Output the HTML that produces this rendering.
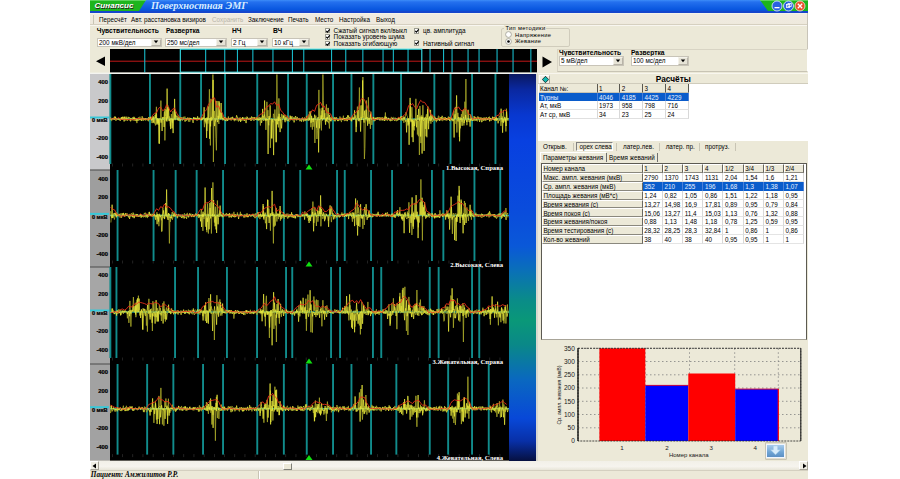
<!DOCTYPE html><html><head><meta charset="utf-8"><style>
html,body{margin:0;padding:0;width:900px;height:479px;overflow:hidden;background:#fff;position:relative}
body{font-family:"Liberation Sans",sans-serif}
div{box-sizing:border-box}
.t{position:absolute;white-space:nowrap;line-height:1;color:#000}
</style></head><body>
<div style="position:absolute;left:90px;top:0px;width:718px;height:479px;background:#ECE9D8"></div>
<div style="position:absolute;left:90px;top:0px;width:718px;height:11px;background:linear-gradient(#3D8DF8 0,#2470EE 2px,#0A58E0 9px,#0A50D8 11px)"></div>
<svg style="position:absolute;left:0;top:0" width="900" height="13"><polygon points="90,0 146,0 139,11 90,11" fill="#1DB51D"/><polygon points="760,0 808,0 808,11 768,11" fill="#1DB51D"/><rect x="90" y="0" width="56" height="1" fill="#5CD35C"/><rect x="760" y="0" width="48" height="1" fill="#5CD35C"/><rect x="90" y="11" width="718" height="2" fill="#1646CC"/><circle cx="777" cy="6" r="5" fill="#2A62E0" stroke="#E8F0FF" stroke-width="0.8"/><circle cx="788.5" cy="6" r="5" fill="#2A62E0" stroke="#E8F0FF" stroke-width="0.8"/><circle cx="800" cy="6" r="5" fill="#E8502A" stroke="#F0E8E0" stroke-width="0.8"/><rect x="774.5" y="7" width="5" height="1.3" fill="#fff"/><rect x="786.5" y="4.5" width="3.2" height="3" fill="none" stroke="#fff" stroke-width="0.8"/><rect x="788" y="3.5" width="3.2" height="3" fill="none" stroke="#fff" stroke-width="0.8"/><path d="M797.8,3.8 L802.2,8.2 M802.2,3.8 L797.8,8.2" stroke="#fff" stroke-width="1.3"/></svg>
<div class="t" style="left:94.5px;top:1.54px;font-size:8.1px;color:#fff;font-weight:bold;font-style:italic;text-shadow:0.6px 0.6px 0 #222">Синапсис</div>
<div class="t" style="left:151px;top:0.73px;font-size:10.3px;color:#D8ECFF;font-style:italic;font-weight:bold;font-family:'Liberation Serif', serif">Поверхностная ЭМГ</div>
<div style="position:absolute;left:90px;top:13px;width:718px;height:12px;background:linear-gradient(#F8F6F0 0,#F0EBE0 1.5px,#EEE9DD 100%);border-bottom:1px solid #D6D0C0"></div>
<div style="position:absolute;left:90px;top:25px;width:718px;height:1px;background:#F8F6F0"></div>
<div style="position:absolute;left:807px;top:13px;width:1px;height:36px;background:#C8C4B8"></div>
<div style="position:absolute;left:93px;top:15px;width:1px;height:9px;background:#C8C4B4"></div>
<div class="t" style="left:99px;top:17.04px;font-size:6.3px;color:#000">Пересчёт</div>
<div class="t" style="left:131px;top:17.04px;font-size:6.3px;color:#000">Авт. расстановка визиров</div>
<div class="t" style="left:212px;top:17.04px;font-size:6.3px;color:#B8B4A8">Сохранить</div>
<div class="t" style="left:248px;top:17.04px;font-size:6.3px;color:#000">Заключение</div>
<div class="t" style="left:288px;top:17.04px;font-size:6.3px;color:#000">Печать</div>
<div class="t" style="left:315px;top:17.04px;font-size:6.3px;color:#000">Место</div>
<div class="t" style="left:339px;top:17.04px;font-size:6.3px;color:#000">Настройка</div>
<div class="t" style="left:376px;top:17.04px;font-size:6.3px;color:#000">Выход</div>
<div class="t" style="left:96.7px;top:28.02px;font-size:6.7px;font-weight:bold">Чувствительность</div>
<div class="t" style="left:166px;top:28.02px;font-size:6.7px;font-weight:bold">Развертка</div>
<div class="t" style="left:232px;top:28.02px;font-size:6.7px;font-weight:bold">НЧ</div>
<div class="t" style="left:273px;top:28.02px;font-size:6.7px;font-weight:bold">ВЧ</div>
<div style="position:absolute;left:97px;top:37.5px;width:65px;height:9.5px;background:#fff;border:1px solid #C8C4B8"></div>
<div class="t" style="left:99px;top:39.73px;font-size:6.4px;">200 мкВ/дел</div>
<div style="position:absolute;left:151px;top:38.5px;width:10px;height:7.5px;background:#E6E3D6;border:1px solid #F4F2EA;border-right-color:#B8B4A8;border-bottom-color:#B8B4A8"></div>
<svg style="position:absolute;left:153.0px;top:40.25px" width="6" height="4"><polygon points="0.8,0.5 5.2,0.5 3,3.2" fill="#000"/></svg>
<div style="position:absolute;left:165px;top:37.5px;width:62px;height:9.5px;background:#fff;border:1px solid #C8C4B8"></div>
<div class="t" style="left:167px;top:39.73px;font-size:6.4px;">250 мс/дел</div>
<div style="position:absolute;left:216px;top:38.5px;width:10px;height:7.5px;background:#E6E3D6;border:1px solid #F4F2EA;border-right-color:#B8B4A8;border-bottom-color:#B8B4A8"></div>
<svg style="position:absolute;left:218.0px;top:40.25px" width="6" height="4"><polygon points="0.8,0.5 5.2,0.5 3,3.2" fill="#000"/></svg>
<div style="position:absolute;left:231px;top:37.5px;width:37px;height:9.5px;background:#fff;border:1px solid #C8C4B8"></div>
<div class="t" style="left:233px;top:39.73px;font-size:6.4px;">2 Гц</div>
<div style="position:absolute;left:257px;top:38.5px;width:10px;height:7.5px;background:#E6E3D6;border:1px solid #F4F2EA;border-right-color:#B8B4A8;border-bottom-color:#B8B4A8"></div>
<svg style="position:absolute;left:259.0px;top:40.25px" width="6" height="4"><polygon points="0.8,0.5 5.2,0.5 3,3.2" fill="#000"/></svg>
<div style="position:absolute;left:272px;top:37.5px;width:38px;height:9.5px;background:#fff;border:1px solid #C8C4B8"></div>
<div class="t" style="left:274px;top:39.73px;font-size:6.4px;">10 кГц</div>
<div style="position:absolute;left:299px;top:38.5px;width:10px;height:7.5px;background:#E6E3D6;border:1px solid #F4F2EA;border-right-color:#B8B4A8;border-bottom-color:#B8B4A8"></div>
<svg style="position:absolute;left:301.0px;top:40.25px" width="6" height="4"><polygon points="0.8,0.5 5.2,0.5 3,3.2" fill="#000"/></svg>
<div style="position:absolute;left:324.5px;top:27.7px;width:5.6px;height:5.6px;background:#fff;border:1px solid #9C9C90"></div>
<svg style="position:absolute;left:324.5px;top:27.7px" width="6" height="6"><path d="M1.2,2.8 L2.4,4.2 L4.8,1.3" stroke="#000" stroke-width="1.1" fill="none"/></svg>
<div class="t" style="left:333.6px;top:27.98px;font-size:6.4px;">Сжатый сигнал вкл/выкл</div>
<div style="position:absolute;left:324.5px;top:34.2px;width:5.6px;height:5.6px;background:#fff;border:1px solid #9C9C90"></div>
<svg style="position:absolute;left:324.5px;top:34.2px" width="6" height="6"><path d="M1.2,2.8 L2.4,4.2 L4.8,1.3" stroke="#000" stroke-width="1.1" fill="none"/></svg>
<div class="t" style="left:333.6px;top:34.48px;font-size:6.4px;">Показать уровень шума</div>
<div style="position:absolute;left:324.5px;top:40.6px;width:5.6px;height:5.6px;background:#fff;border:1px solid #9C9C90"></div>
<svg style="position:absolute;left:324.5px;top:40.6px" width="6" height="6"><path d="M1.2,2.8 L2.4,4.2 L4.8,1.3" stroke="#000" stroke-width="1.1" fill="none"/></svg>
<div class="t" style="left:333.6px;top:40.88px;font-size:6.4px;">Показать огибающую</div>
<div style="position:absolute;left:413.5px;top:28.2px;width:5.6px;height:5.6px;background:#fff;border:1px solid #9C9C90"></div>
<svg style="position:absolute;left:413.5px;top:28.2px" width="6" height="6"><path d="M1.2,2.8 L2.4,4.2 L4.8,1.3" stroke="#000" stroke-width="1.1" fill="none"/></svg>
<div class="t" style="left:423px;top:28.48px;font-size:6.4px;">цв. амплитуда</div>
<div style="position:absolute;left:413.5px;top:40.400000000000006px;width:5.6px;height:5.6px;background:#fff;border:1px solid #9C9C90"></div>
<svg style="position:absolute;left:413.5px;top:40.400000000000006px" width="6" height="6"><path d="M1.2,2.8 L2.4,4.2 L4.8,1.3" stroke="#000" stroke-width="1.1" fill="none"/></svg>
<div class="t" style="left:423px;top:40.68px;font-size:6.4px;">Нативный сигнал</div>
<div style="position:absolute;left:500.5px;top:27.5px;width:69px;height:19px;border:1px solid #D0CCBC;border-radius:2px"></div>
<div style="position:absolute;left:504px;top:25px;width:42px;height:5px;background:#ECE9D8"></div>
<div class="t" style="left:505.5px;top:26.11px;font-size:5.8px;letter-spacing:0.3px">Тип методики</div>
<svg style="position:absolute;left:505px;top:31.299999999999997px" width="7" height="7"><circle cx="3.5" cy="3.5" r="2.9" fill="#fff" stroke="#9C9C90" stroke-width="0.8"/></svg>
<div class="t" style="left:515px;top:32.61px;font-size:5.8px;letter-spacing:0.25px">Напряжение</div>
<svg style="position:absolute;left:505px;top:38.0px" width="7" height="7"><circle cx="3.5" cy="3.5" r="2.9" fill="#fff" stroke="#9C9C90" stroke-width="0.8"/><circle cx="3.5" cy="3.5" r="1.3" fill="#000"/></svg>
<div class="t" style="left:515px;top:39.31px;font-size:5.8px;letter-spacing:0.25px">Жевание</div>
<div style="position:absolute;left:90px;top:48px;width:20px;height:25px;background:#ECE9D8"></div>
<svg style="position:absolute;left:96px;top:56px" width="10" height="11"><polygon points="0,5.3 9,0.5 9,10.1" fill="#000"/></svg>
<svg style="position:absolute;left:0;top:0" width="900" height="479"><rect x="110" y="49" width="427" height="23.6" fill="#000"/><rect x="110" y="60.7" width="427" height="1" fill="#C01818"/><rect x="144.2" y="49" width="1.1" height="23.6" fill="#18B8C8"/><rect x="205.1" y="49" width="1.1" height="23.6" fill="#18B8C8"/><rect x="224.2" y="49" width="1.1" height="23.6" fill="#18B8C8"/><rect x="236.9" y="49" width="1.1" height="23.6" fill="#18B8C8"/><rect x="252.3" y="49" width="1.1" height="23.6" fill="#18B8C8"/><rect x="272.4" y="49" width="1.1" height="23.6" fill="#18B8C8"/><rect x="291.9" y="49" width="1.1" height="23.6" fill="#18B8C8"/><rect x="303.2" y="49" width="1.1" height="23.6" fill="#18B8C8"/><rect x="331.0" y="49" width="1.1" height="23.6" fill="#18B8C8"/><rect x="345.2" y="49" width="1.1" height="23.6" fill="#18B8C8"/><rect x="362.3" y="49" width="1.1" height="23.6" fill="#18B8C8"/><rect x="382.5" y="49" width="1.1" height="23.6" fill="#18B8C8"/><rect x="392.8" y="49" width="1.1" height="23.6" fill="#18B8C8"/><rect x="407.5" y="49" width="1.1" height="23.6" fill="#18B8C8"/><rect x="429.5" y="49" width="1.1" height="23.6" fill="#18B8C8"/><rect x="443.0" y="49" width="1.1" height="23.6" fill="#18B8C8"/><rect x="451.5" y="49" width="1.1" height="23.6" fill="#18B8C8"/><rect x="467.5" y="49" width="1.1" height="23.6" fill="#18B8C8"/><rect x="478.5" y="49" width="1.1" height="23.6" fill="#18B8C8"/><rect x="496.5" y="49" width="1.1" height="23.6" fill="#18B8C8"/><rect x="512.5" y="49" width="1.1" height="23.6" fill="#18B8C8"/><rect x="530.3" y="49" width="1.1" height="23.6" fill="#18B8C8"/><rect x="180.3" y="49.2" width="241.5" height="23" fill="none" stroke="#38E8F0" stroke-width="1.1"/><rect x="90" y="72.6" width="447" height="1.4" fill="#F4F4F0"/></svg>
<svg style="position:absolute;left:542px;top:55.5px" width="11" height="12"><polygon points="0.5,0.5 10,6 0.5,11.5" fill="#000"/></svg>
<div style="position:absolute;left:556.7px;top:49px;width:251.3px;height:23px;border:1px solid #D8D4C4;border-right-color:#fff;border-bottom-color:#C8C4B4"></div>
<div class="t" style="left:559px;top:50.21px;font-size:6.7px;font-weight:bold">Чувствительность</div>
<div class="t" style="left:631px;top:50.21px;font-size:6.7px;font-weight:bold">Развертка</div>
<div style="position:absolute;left:559px;top:56px;width:65px;height:10px;background:#fff;border:1px solid #C8C4B8"></div>
<div class="t" style="left:561px;top:58.48px;font-size:6.4px;">5 мВ/дел</div>
<div style="position:absolute;left:613px;top:57px;width:10px;height:8px;background:#E6E3D6;border:1px solid #F4F2EA;border-right-color:#B8B4A8;border-bottom-color:#B8B4A8"></div>
<svg style="position:absolute;left:615.0px;top:59.0px" width="6" height="4"><polygon points="0.8,0.5 5.2,0.5 3,3.2" fill="#000"/></svg>
<div style="position:absolute;left:631px;top:56px;width:57.700000000000045px;height:10px;background:#fff;border:1px solid #C8C4B8"></div>
<div class="t" style="left:633px;top:58.48px;font-size:6.4px;">100 мс/дел</div>
<div style="position:absolute;left:677.7px;top:57px;width:10px;height:8px;background:#E6E3D6;border:1px solid #F4F2EA;border-right-color:#B8B4A8;border-bottom-color:#B8B4A8"></div>
<svg style="position:absolute;left:679.7px;top:59.0px" width="6" height="4"><polygon points="0.8,0.5 5.2,0.5 3,3.2" fill="#000"/></svg>
<svg style="position:absolute;left:0;top:0" width="900" height="479"><rect x="90" y="74" width="20" height="96" fill="#C9C9CB"/><rect x="110" y="74" width="399" height="96" fill="#000"/><rect x="112.0" y="163.5" width="0.7" height="3" fill="#303030"/><rect x="122.2" y="163.5" width="0.7" height="3" fill="#303030"/><rect x="132.4" y="163.5" width="0.7" height="3" fill="#303030"/><rect x="142.6" y="163.5" width="0.7" height="3" fill="#303030"/><rect x="152.8" y="163.5" width="0.7" height="3" fill="#303030"/><rect x="163.0" y="163.5" width="0.7" height="3" fill="#303030"/><rect x="173.2" y="163.5" width="0.7" height="3" fill="#303030"/><rect x="183.4" y="163.5" width="0.7" height="3" fill="#303030"/><rect x="193.6" y="163.5" width="0.7" height="3" fill="#303030"/><rect x="203.8" y="163.5" width="0.7" height="3" fill="#303030"/><rect x="214.0" y="163.5" width="0.7" height="3" fill="#303030"/><rect x="224.2" y="163.5" width="0.7" height="3" fill="#303030"/><rect x="234.4" y="163.5" width="0.7" height="3" fill="#303030"/><rect x="244.6" y="163.5" width="0.7" height="3" fill="#303030"/><rect x="254.8" y="163.5" width="0.7" height="3" fill="#303030"/><rect x="265.0" y="163.5" width="0.7" height="3" fill="#303030"/><rect x="275.2" y="163.5" width="0.7" height="3" fill="#303030"/><rect x="285.4" y="163.5" width="0.7" height="3" fill="#303030"/><rect x="295.6" y="163.5" width="0.7" height="3" fill="#303030"/><rect x="305.8" y="163.5" width="0.7" height="3" fill="#303030"/><rect x="316.0" y="163.5" width="0.7" height="3" fill="#303030"/><rect x="326.2" y="163.5" width="0.7" height="3" fill="#303030"/><rect x="336.4" y="163.5" width="0.7" height="3" fill="#303030"/><rect x="346.6" y="163.5" width="0.7" height="3" fill="#303030"/><rect x="356.8" y="163.5" width="0.7" height="3" fill="#303030"/><rect x="367.0" y="163.5" width="0.7" height="3" fill="#303030"/><rect x="377.2" y="163.5" width="0.7" height="3" fill="#303030"/><rect x="387.4" y="163.5" width="0.7" height="3" fill="#303030"/><rect x="397.6" y="163.5" width="0.7" height="3" fill="#303030"/><rect x="407.8" y="163.5" width="0.7" height="3" fill="#303030"/><rect x="418.0" y="163.5" width="0.7" height="3" fill="#303030"/><rect x="428.2" y="163.5" width="0.7" height="3" fill="#303030"/><rect x="438.4" y="163.5" width="0.7" height="3" fill="#303030"/><rect x="448.6" y="163.5" width="0.7" height="3" fill="#303030"/><rect x="458.8" y="163.5" width="0.7" height="3" fill="#303030"/><rect x="469.0" y="163.5" width="0.7" height="3" fill="#303030"/><rect x="479.2" y="163.5" width="0.7" height="3" fill="#303030"/><rect x="489.4" y="163.5" width="0.7" height="3" fill="#303030"/><rect x="499.6" y="163.5" width="0.7" height="3" fill="#303030"/><rect x="509.8" y="163.5" width="0.7" height="3" fill="#303030"/><rect x="109.4" y="74" width="1.9" height="90" fill="#118C8C"/><rect x="149.0" y="74" width="1.9" height="90" fill="#118C8C"/><rect x="179.3" y="74" width="1.9" height="90" fill="#118C8C"/><rect x="200.1" y="74" width="1.9" height="90" fill="#118C8C"/><rect x="224.1" y="74" width="1.9" height="90" fill="#118C8C"/><rect x="256.3" y="74" width="1.9" height="90" fill="#118C8C"/><rect x="287.1" y="74" width="1.9" height="90" fill="#118C8C"/><rect x="305.8" y="74" width="1.9" height="90" fill="#118C8C"/><rect x="332.1" y="74" width="1.9" height="90" fill="#118C8C"/><rect x="350.5" y="74" width="1.9" height="90" fill="#118C8C"/><rect x="372.4" y="74" width="1.9" height="90" fill="#118C8C"/><rect x="400.1" y="74" width="1.9" height="90" fill="#118C8C"/><rect x="433.4" y="74" width="1.9" height="90" fill="#118C8C"/><rect x="449.6" y="74" width="1.9" height="90" fill="#118C8C"/><rect x="471.1" y="74" width="1.9" height="90" fill="#118C8C"/><rect x="494.5" y="74" width="1.9" height="90" fill="#118C8C"/><rect x="90" y="116.5" width="19" height="2" fill="#38C8D8"/><rect x="110" y="118.3" width="399" height="1.4" fill="#18A0A8"/><polyline points="110.9,119.0 111.4,120.8 111.9,120.6 112.4,118.3 112.9,118.6 113.4,118.3 113.9,119.7 114.4,118.9 114.9,120.0 115.4,116.6 115.9,121.0 116.4,118.9 116.9,119.9 117.4,118.8 117.9,118.5 118.4,119.6 118.9,120.1 119.4,118.7 119.9,118.8 120.4,119.9 120.9,117.9 121.4,117.0 121.9,119.5 122.4,118.1 122.9,116.5 123.4,117.9 123.9,118.4 124.4,117.4 124.9,117.1 125.4,119.0 125.9,120.2 126.4,118.7 126.9,118.0 127.4,119.5 127.9,119.9 128.4,118.6 128.9,119.7 129.4,120.4 129.9,118.7 130.4,117.9 130.9,119.5 131.4,119.3 131.9,120.4 132.4,117.3 132.9,118.1 133.4,117.9 133.9,116.7 134.4,119.2 134.9,119.7 135.4,118.0 135.9,120.8 136.4,120.1 136.9,123.1 137.4,119.5 137.9,120.2 138.4,117.3 138.9,119.8 139.4,119.8 139.9,116.7 140.4,119.5 140.9,118.7 141.4,120.0 141.9,118.4 142.4,119.0 142.9,119.4 143.4,117.9 143.9,119.8 144.4,118.9 144.9,119.6 145.4,118.3 145.9,120.4 146.4,119.8 146.9,118.8 147.4,119.8 147.9,120.6 148.4,121.3 148.9,117.0 149.4,120.1 149.9,119.6 150.4,118.9 150.9,117.7 151.4,120.6 151.9,117.4 152.4,119.7 152.9,117.8 153.4,116.9 153.9,118.6 154.4,123.4 154.9,119.3 155.4,125.4 155.9,121.6 156.4,106.8 156.9,124.8 157.4,119.9 157.9,121.1 158.4,125.0 158.9,118.0 159.4,143.8 159.9,119.0 160.4,118.7 160.9,100.6 161.4,119.5 161.9,119.4 162.4,118.9 162.9,117.0 163.4,117.3 163.9,118.4 164.4,111.6 164.9,140.4 165.4,117.1 165.9,120.7 166.4,109.7 166.9,121.7 167.4,119.1 167.9,105.4 168.4,120.8 168.9,120.7 169.4,116.5 169.9,117.9 170.4,126.3 170.9,119.8 171.4,114.0 171.9,118.6 172.4,122.7 172.9,111.3 173.4,120.4 173.9,119.0 174.4,108.9 174.9,118.5 175.4,111.6 175.9,116.2 176.4,117.1 176.9,116.4 177.4,118.2 177.9,115.5 178.4,119.7 178.9,120.7 179.4,120.1 179.9,120.3 180.4,118.9 180.9,118.1 181.4,118.0 181.9,118.4 182.4,117.5 182.9,118.3 183.4,116.8 183.9,119.3 184.4,118.6 184.9,116.5 185.4,118.9 185.9,119.3 186.4,120.4 186.9,119.8 187.4,118.2 187.9,118.1 188.4,121.6 188.9,120.0 189.4,121.4 189.9,121.8 190.4,117.9 190.9,119.5 191.4,119.6 191.9,119.7 192.4,119.7 192.9,119.3 193.4,119.2 193.9,117.0 194.4,118.8 194.9,118.0 195.4,119.2 195.9,118.4 196.4,119.8 196.9,120.1 197.4,119.4 197.9,119.4 198.4,119.1 198.9,118.4 199.4,118.8 199.9,118.4 200.4,119.5 200.9,119.0 201.4,119.8 201.9,117.3 202.4,120.2 202.9,118.0 203.4,118.0 203.9,118.7 204.4,127.2 204.9,119.4 205.4,118.3 205.9,123.4 206.4,117.9 206.9,131.0 207.4,119.1 207.9,123.6 208.4,119.0 208.9,117.0 209.4,89.3 209.9,117.0 210.4,145.4 210.9,98.8 211.4,117.1 211.9,119.4 212.4,120.3 212.9,74.5 213.4,162.0 213.9,120.2 214.4,110.9 214.9,119.4 215.4,118.8 215.9,138.6 216.4,150.3 216.9,120.0 217.4,118.3 217.9,101.0 218.4,119.5 218.9,123.9 219.4,102.6 219.9,118.3 220.4,112.6 220.9,118.4 221.4,118.8 221.9,112.5 222.4,116.0 222.9,120.5 223.4,117.7 223.9,118.1 224.4,118.4 224.9,117.0 225.4,117.8 225.9,120.1 226.4,121.2 226.9,119.0 227.4,120.4 227.9,118.7 228.4,116.5 228.9,119.2 229.4,119.6 229.9,118.4 230.4,119.4 230.9,119.7 231.4,117.9 231.9,117.1 232.4,118.7 232.9,118.7 233.4,118.5 233.9,120.3 234.4,121.2 234.9,118.5 235.4,119.9 235.9,120.2 236.4,119.9 236.9,120.4 237.4,118.5 237.9,120.0 238.4,121.6 238.9,120.0 239.4,118.2 239.9,119.8 240.4,120.6 240.9,119.5 241.4,118.3 241.9,121.0 242.4,117.4 242.9,119.7 243.4,119.0 243.9,117.4 244.4,120.6 244.9,119.5 245.4,117.5 245.9,119.8 246.4,118.4 246.9,116.5 247.4,118.1 247.9,119.3 248.4,119.8 248.9,119.2 249.4,119.1 249.9,119.6 250.4,118.7 250.9,120.5 251.4,119.2 251.9,119.4 252.4,119.7 252.9,117.6 253.4,118.1 253.9,121.0 254.4,119.4 254.9,118.6 255.4,119.4 255.9,118.4 256.4,119.4 256.9,118.1 257.4,119.4 257.9,116.9 258.4,120.7 258.9,118.3 259.4,116.9 259.9,118.7 260.4,125.5 260.9,119.2 261.4,117.5 261.9,119.5 262.4,115.5 262.9,117.3 263.4,116.2 263.9,118.6 264.4,114.6 264.9,116.6 265.4,117.6 265.9,129.9 266.4,119.0 266.9,101.8 267.4,118.1 267.9,110.2 268.4,122.8 268.9,125.3 269.4,117.8 269.9,119.0 270.4,147.9 270.9,131.7 271.4,119.2 271.9,138.6 272.4,119.3 272.9,122.4 273.4,113.8 273.9,115.4 274.4,118.8 274.9,109.5 275.4,119.8 275.9,118.8 276.4,141.7 276.9,74.5 277.4,120.2 277.9,119.2 278.4,127.4 278.9,98.4 279.4,120.7 279.9,119.7 280.4,117.0 280.9,120.7 281.4,113.9 281.9,118.9 282.4,118.0 282.9,114.5 283.4,118.2 283.9,115.3 284.4,120.3 284.9,114.7 285.4,118.7 285.9,120.4 286.4,120.1 286.9,119.5 287.4,115.8 287.9,118.7 288.4,119.7 288.9,121.1 289.4,121.4 289.9,120.9 290.4,117.5 290.9,116.1 291.4,119.7 291.9,119.0 292.4,120.3 292.9,118.8 293.4,119.3 293.9,117.1 294.4,119.6 294.9,118.4 295.4,119.5 295.9,119.6 296.4,118.8 296.9,119.4 297.4,119.0 297.9,120.0 298.4,119.7 298.9,118.3 299.4,118.2 299.9,121.3 300.4,118.9 300.9,120.3 301.4,119.5 301.9,118.3 302.4,118.0 302.9,119.2 303.4,119.3 303.9,119.8 304.4,117.4 304.9,118.2 305.4,118.9 305.9,121.1 306.4,115.9 306.9,119.6 307.4,118.3 307.9,119.6 308.4,114.7 308.9,119.5 309.4,111.6 309.9,119.5 310.4,119.6 310.9,127.2 311.4,118.0 311.9,119.7 312.4,129.6 312.9,117.9 313.4,118.9 313.9,126.7 314.4,120.0 314.9,143.0 315.4,118.3 315.9,115.6 316.4,120.3 316.9,139.0 317.4,130.3 317.9,118.9 318.4,118.5 318.9,89.9 319.4,120.2 319.9,108.5 320.4,117.1 320.9,118.9 321.4,130.4 321.9,110.7 322.4,117.4 322.9,74.5 323.4,100.3 323.9,118.9 324.4,116.8 324.9,113.2 325.4,121.8 325.9,117.1 326.4,104.4 326.9,118.1 327.4,122.0 327.9,118.8 328.4,123.2 328.9,120.7 329.4,128.5 329.9,118.0 330.4,120.2 330.9,117.0 331.4,118.5 331.9,119.5 332.4,116.8 332.9,118.4 333.4,119.2 333.9,120.4 334.4,120.8 334.9,118.4 335.4,118.0 335.9,119.6 336.4,118.5 336.9,118.6 337.4,120.4 337.9,121.2 338.4,119.3 338.9,118.8 339.4,119.7 339.9,116.5 340.4,119.0 340.9,117.6 341.4,122.1 341.9,119.9 342.4,119.2 342.9,118.7 343.4,115.7 343.9,119.9 344.4,121.1 344.9,118.1 345.4,119.9 345.9,119.9 346.4,117.0 346.9,120.2 347.4,120.8 347.9,119.3 348.4,118.9 348.9,120.0 349.4,117.0 349.9,119.1 350.4,120.4 350.9,117.4 351.4,120.3 351.9,118.5 352.4,116.3 352.9,118.9 353.4,117.7 353.9,119.4 354.4,117.5 354.9,116.6 355.4,118.0 355.9,115.3 356.4,126.8 356.9,118.6 357.4,106.6 357.9,119.3 358.4,120.8 358.9,117.4 359.4,87.5 359.9,120.0 360.4,118.6 360.9,105.5 361.4,117.7 361.9,105.3 362.4,117.9 362.9,77.0 363.4,115.5 363.9,118.0 364.4,159.0 364.9,148.4 365.4,119.2 365.9,120.3 366.4,100.5 366.9,118.9 367.4,121.5 367.9,119.0 368.4,97.3 368.9,117.4 369.4,120.9 369.9,118.0 370.4,128.8 370.9,111.6 371.4,119.8 371.9,124.9 372.4,120.4 372.9,120.1 373.4,117.0 373.9,118.0 374.4,118.4 374.9,117.8 375.4,120.5 375.9,119.2 376.4,119.0 376.9,119.6 377.4,117.8 377.9,117.8 378.4,117.9 378.9,119.6 379.4,119.4 379.9,119.8 380.4,120.4 380.9,117.2 381.4,118.3 381.9,119.2 382.4,117.2 382.9,118.3 383.4,120.3 383.9,120.4 384.4,120.4 384.9,119.1 385.4,112.5 385.9,120.4 386.4,118.5 386.9,119.4 387.4,120.7 387.9,118.5 388.4,118.2 388.9,119.0 389.4,119.8 389.9,119.6 390.4,119.2 390.9,119.7 391.4,116.9 391.9,117.9 392.4,119.2 392.9,117.8 393.4,117.3 393.9,117.4 394.4,117.8 394.9,118.8 395.4,117.7 395.9,119.3 396.4,121.2 396.9,118.8 397.4,120.7 397.9,119.4 398.4,117.5 398.9,118.7 399.4,117.7 399.9,120.0 400.4,117.5 400.9,120.7 401.4,119.8 401.9,116.4 402.4,120.0 402.9,121.0 403.4,118.0 403.9,122.8 404.4,116.7 404.9,119.3 405.4,116.8 405.9,112.2 406.4,113.2 406.9,115.6 407.4,116.3 407.9,122.0 408.4,118.2 408.9,124.2 409.4,119.1 409.9,118.6 410.4,103.0 410.9,121.1 411.4,117.4 411.9,107.2 412.4,119.4 412.9,126.5 413.4,121.1 413.9,129.2 414.4,130.3 414.9,121.3 415.4,119.1 415.9,98.8 416.4,121.0 416.9,119.3 417.4,134.5 417.9,121.0 418.4,136.2 418.9,120.2 419.4,155.0 419.9,106.0 420.4,120.5 420.9,143.1 421.4,119.2 421.9,115.1 422.4,118.8 422.9,105.2 423.4,121.1 423.9,117.5 424.4,118.8 424.9,118.8 425.4,128.9 425.9,117.2 426.4,114.3 426.9,137.3 427.4,119.7 427.9,106.4 428.4,123.3 428.9,119.3 429.4,118.5 429.9,116.0 430.4,118.9 430.9,123.7 431.4,119.0 431.9,114.8 432.4,121.9 432.9,120.6 433.4,119.4 433.9,120.9 434.4,116.3 434.9,116.7 435.4,117.5 435.9,118.9 436.4,122.2 436.9,119.5 437.4,120.6 437.9,118.7 438.4,115.8 438.9,116.0 439.4,120.3 439.9,119.2 440.4,117.3 440.9,120.5 441.4,117.0 441.9,120.5 442.4,120.9 442.9,118.0 443.4,117.6 443.9,120.1 444.4,117.6 444.9,120.1 445.4,117.4 445.9,120.0 446.4,119.1 446.9,118.4 447.4,117.8 447.9,119.3 448.4,116.5 448.9,118.6 449.4,118.5 449.9,119.9 450.4,117.4 450.9,121.2 451.4,118.6 451.9,117.5 452.4,120.8 452.9,121.2 453.4,118.8 453.9,110.8 454.4,119.0 454.9,118.1 455.4,106.9 455.9,123.8 456.4,119.5 456.9,132.5 457.4,119.4 457.9,112.8 458.4,120.1 458.9,120.1 459.4,137.0 459.9,119.1 460.4,128.3 460.9,119.5 461.4,114.1 461.9,121.7 462.4,110.6 462.9,117.6 463.4,109.5 463.9,125.5 464.4,118.4 464.9,101.7 465.4,118.8 465.9,79.0 466.4,118.3 466.9,125.2 467.4,120.5 467.9,121.9 468.4,118.3 468.9,121.6 469.4,122.2 469.9,120.9 470.4,114.7 470.9,118.8 471.4,117.2 471.9,119.5 472.4,119.9 472.9,120.3 473.4,119.1 473.9,120.6 474.4,120.8 474.9,117.6 475.4,120.9 475.9,119.2 476.4,118.3 476.9,118.6 477.4,121.4 477.9,120.3 478.4,116.7 478.9,119.1 479.4,118.8 479.9,118.8 480.4,118.3 480.9,117.1 481.4,120.1 481.9,117.8 482.4,118.5 482.9,118.2 483.4,118.1 483.9,120.0 484.4,119.5 484.9,118.1 485.4,117.8 485.9,118.4 486.4,120.3 486.9,119.2 487.4,119.3 487.9,118.6 488.4,118.7 488.9,119.3 489.4,116.6 489.9,121.1 490.4,118.0 490.9,118.3 491.4,120.7 491.9,119.3 492.4,119.1 492.9,118.2 493.4,117.0 493.9,119.2 494.4,120.6 494.9,117.8 495.4,120.8 495.9,117.5 496.4,118.0 496.9,119.7 497.4,119.0 497.9,119.9 498.4,118.0 498.9,117.7 499.4,115.7 499.9,117.4 500.4,117.6 500.9,125.9 501.4,119.4 501.9,122.2 502.4,116.4 502.9,122.2 503.4,110.1 503.9,117.4 504.4,117.0 504.9,120.5 505.4,117.5 505.9,131.5 506.4,108.7 506.9,120.5 507.4,118.6 507.9,117.9 508.4,119.0" fill="none" stroke="#A8A828" stroke-width="0.8"/><polyline points="110.6,117.4 111.1,119.9 111.6,119.3 112.1,119.0 112.6,119.0 113.1,119.0 113.6,117.8 114.1,119.3 114.6,116.6 115.1,118.9 115.6,117.0 116.1,118.5 116.6,119.9 117.1,118.6 117.6,118.3 118.1,119.6 118.6,118.6 119.1,118.4 119.6,118.4 120.1,120.9 120.6,119.8 121.1,119.6 121.6,117.4 122.1,119.7 122.6,117.2 123.1,119.6 123.6,117.5 124.1,121.5 124.6,116.7 125.1,120.5 125.6,120.0 126.1,116.6 126.6,118.6 127.1,120.8 127.6,120.4 128.1,116.8 128.6,118.2 129.1,117.4 129.6,117.6 130.1,118.1 130.6,121.3 131.1,119.1 131.6,118.6 132.1,118.5 132.6,119.8 133.1,119.8 133.6,117.7 134.1,120.8 134.6,117.5 135.1,118.6 135.6,119.5 136.1,121.1 136.6,118.5 137.1,119.3 137.6,120.6 138.1,119.7 138.6,120.4 139.1,120.3 139.6,119.3 140.1,119.7 140.6,120.1 141.1,118.9 141.6,121.0 142.1,116.3 142.6,117.7 143.1,120.8 143.6,119.5 144.1,118.1 144.6,119.4 145.1,120.3 145.6,118.2 146.1,119.9 146.6,118.8 147.1,118.8 147.6,118.8 148.1,120.4 148.6,117.5 149.1,118.4 149.6,119.8 150.1,117.3 150.6,116.9 151.1,119.7 151.6,118.9 152.1,123.1 152.6,119.1 153.1,116.1 153.6,122.7 154.1,117.6 154.6,118.4 155.1,114.8 155.6,118.4 156.1,113.0 156.6,118.9 157.1,123.8 157.6,118.3 158.1,123.2 158.6,119.1 159.1,143.5 159.6,119.9 160.1,118.4 160.6,119.7 161.1,122.7 161.6,119.3 162.1,131.0 162.6,117.7 163.1,117.0 163.6,120.2 164.1,127.0 164.6,119.3 165.1,108.9 165.6,116.3 166.1,117.3 166.6,120.7 167.1,88.6 167.6,118.4 168.1,117.0 168.6,107.1 169.1,118.4 169.6,120.9 170.1,118.8 170.6,129.1 171.1,118.2 171.6,118.9 172.1,128.3 172.6,118.7 173.1,133.1 173.6,119.2 174.1,119.1 174.6,98.9 175.1,120.2 175.6,114.6 176.1,116.2 176.6,117.6 177.1,119.7 177.6,118.5 178.1,120.6 178.6,118.5 179.1,116.9 179.6,118.6 180.1,121.2 180.6,117.8 181.1,117.2 181.6,119.6 182.1,120.6 182.6,120.2 183.1,118.5 183.6,119.2 184.1,119.3 184.6,120.4 185.1,121.7 185.6,118.8 186.1,120.6 186.6,118.5 187.1,119.7 187.6,117.7 188.1,117.9 188.6,119.4 189.1,117.7 189.6,120.1 190.1,118.2 190.6,119.0 191.1,118.8 191.6,118.5 192.1,119.1 192.6,120.3 193.1,122.9 193.6,117.4 194.1,119.3 194.6,118.7 195.1,117.7 195.6,119.3 196.1,117.8 196.6,118.8 197.1,120.5 197.6,116.3 198.1,119.2 198.6,119.5 199.1,117.7 199.6,119.6 200.1,119.4 200.6,118.5 201.1,120.5 201.6,117.2 202.1,119.7 202.6,118.6 203.1,117.5 203.6,118.7 204.1,107.2 204.6,120.0 205.1,121.6 205.6,118.7 206.1,118.3 206.6,137.9 207.1,117.5 207.6,120.3 208.1,106.4 208.6,119.4 209.1,118.7 209.6,138.8 210.1,118.0 210.6,126.4 211.1,116.9 211.6,120.6 212.1,119.2 212.6,117.8 213.1,79.9 213.6,117.9 214.1,117.9 214.6,126.1 215.1,120.4 215.6,121.4 216.1,100.9 216.6,119.3 217.1,120.2 217.6,122.1 218.1,115.8 218.6,119.1 219.1,101.3 219.6,117.0 220.1,119.4 220.6,119.1 221.1,103.0 221.6,118.1 222.1,119.4 222.6,118.1 223.1,118.1 223.6,119.1 224.1,120.0 224.6,117.0 225.1,121.0 225.6,120.3 226.1,120.0 226.6,118.0 227.1,118.4 227.6,121.0 228.1,119.8 228.6,117.8 229.1,118.9 229.6,119.1 230.1,118.6 230.6,117.7 231.1,120.5 231.6,119.6 232.1,118.6 232.6,116.8 233.1,118.1 233.6,118.9 234.1,120.0 234.6,118.4 235.1,120.3 235.6,119.1 236.1,117.9 236.6,115.3 237.1,117.4 237.6,117.0 238.1,118.7 238.6,119.3 239.1,120.7 239.6,118.9 240.1,117.4 240.6,122.0 241.1,119.3 241.6,118.6 242.1,118.6 242.6,117.1 243.1,119.7 243.6,119.4 244.1,121.0 244.6,120.3 245.1,120.0 245.6,120.5 246.1,123.1 246.6,118.3 247.1,118.8 247.6,117.3 248.1,118.7 248.6,118.5 249.1,119.8 249.6,118.9 250.1,117.6 250.6,119.0 251.1,120.8 251.6,116.5 252.1,117.9 252.6,118.9 253.1,117.2 253.6,118.2 254.1,119.0 254.6,117.2 255.1,119.3 255.6,119.5 256.1,117.3 256.6,119.0 257.1,120.3 257.6,118.7 258.1,119.5 258.6,119.8 259.1,118.6 259.6,120.2 260.1,119.4 260.6,117.7 261.1,119.6 261.6,122.9 262.1,120.0 262.6,108.9 263.1,119.5 263.6,120.7 264.1,119.3 264.6,100.5 265.1,120.6 265.6,118.9 266.1,120.7 266.6,118.6 267.1,120.3 267.6,118.8 268.1,154.0 268.6,118.9 269.1,116.0 269.6,119.5 270.1,105.4 270.6,117.5 271.1,118.1 271.6,138.2 272.1,119.6 272.6,119.1 273.1,122.4 273.6,155.1 274.1,118.9 274.6,119.9 275.1,120.7 275.6,119.5 276.1,142.3 276.6,119.1 277.1,119.1 277.6,124.3 278.1,116.6 278.6,121.0 279.1,113.8 279.6,120.2 280.1,132.1 280.6,119.2 281.1,120.5 281.6,128.4 282.1,120.4 282.6,118.9 283.1,118.5 283.6,115.7 284.1,118.4 284.6,118.9 285.1,122.2 285.6,117.5 286.1,116.9 286.6,118.0 287.1,121.2 287.6,120.4 288.1,120.7 288.6,120.6 289.1,118.1 289.6,119.2 290.1,115.6 290.6,118.2 291.1,119.8 291.6,117.0 292.1,116.3 292.6,117.3 293.1,119.3 293.6,120.5 294.1,122.4 294.6,120.9 295.1,117.1 295.6,116.0 296.1,119.2 296.6,120.4 297.1,116.9 297.6,118.4 298.1,118.5 298.6,119.1 299.1,118.8 299.6,119.7 300.1,120.4 300.6,119.2 301.1,120.0 301.6,121.7 302.1,117.7 302.6,117.7 303.1,119.7 303.6,121.5 304.1,119.3 304.6,120.5 305.1,118.7 305.6,120.3 306.1,118.3 306.6,120.0 307.1,119.6 307.6,119.6 308.1,120.9 308.6,120.5 309.1,117.7 309.6,120.3 310.1,116.9 310.6,111.5 311.1,122.7 311.6,115.8 312.1,119.8 312.6,119.2 313.1,122.0 313.6,118.5 314.1,120.0 314.6,114.7 315.1,118.6 315.6,119.3 316.1,119.1 316.6,127.7 317.1,121.9 317.6,119.3 318.1,117.0 318.6,152.4 319.1,119.1 319.6,128.3 320.1,120.1 320.6,118.0 321.1,115.3 321.6,119.0 322.1,107.8 322.6,120.5 323.1,118.2 323.6,118.8 324.1,110.1 324.6,118.8 325.1,118.8 325.6,124.7 326.1,117.9 326.6,121.2 327.1,117.0 327.6,119.2 328.1,107.9 328.6,118.2 329.1,119.9 329.6,114.8 330.1,121.1 330.6,119.9 331.1,121.3 331.6,120.3 332.1,117.9 332.6,119.2 333.1,119.8 333.6,119.9 334.1,117.7 334.6,117.2 335.1,121.3 335.6,118.5 336.1,117.0 336.6,117.5 337.1,119.2 337.6,120.7 338.1,119.1 338.6,120.7 339.1,119.4 339.6,119.7 340.1,120.4 340.6,118.6 341.1,119.5 341.6,118.6 342.1,118.3 342.6,120.0 343.1,118.0 343.6,119.2 344.1,118.1 344.6,119.0 345.1,118.4 345.6,120.5 346.1,119.2 346.6,119.2 347.1,121.2 347.6,115.3 348.1,117.6 348.6,115.5 349.1,119.1 349.6,119.6 350.1,119.9 350.6,119.4 351.1,117.9 351.6,121.3 352.1,119.5 352.6,118.7 353.1,117.6 353.6,119.6 354.1,118.4 354.6,110.3 355.1,119.3 355.6,119.3 356.1,132.1 356.6,120.7 357.1,117.7 357.6,117.6 358.1,109.9 358.6,119.2 359.1,121.3 359.6,118.5 360.1,119.1 360.6,131.6 361.1,116.9 361.6,120.0 362.1,117.7 362.6,80.4 363.1,120.0 363.6,119.1 364.1,122.6 364.6,110.7 365.1,118.1 365.6,119.1 366.1,109.7 366.6,118.7 367.1,117.2 367.6,125.7 368.1,117.8 368.6,118.8 369.1,123.8 369.6,118.1 370.1,118.4 370.6,113.6 371.1,118.8 371.6,119.4 372.1,117.8 372.6,118.9 373.1,117.6 373.6,117.0 374.1,121.3 374.6,119.6 375.1,120.2 375.6,117.8 376.1,119.0 376.6,118.7 377.1,117.2 377.6,119.7 378.1,118.1 378.6,118.7 379.1,117.0 379.6,120.3 380.1,120.0 380.6,119.5 381.1,117.8 381.6,118.3 382.1,120.6 382.6,118.6 383.1,119.4 383.6,119.2 384.1,117.6 384.6,121.0 385.1,116.4 385.6,119.3 386.1,118.9 386.6,116.9 387.1,119.4 387.6,119.7 388.1,119.1 388.6,117.9 389.1,119.6 389.6,120.5 390.1,119.3 390.6,121.2 391.1,120.1 391.6,120.0 392.1,120.8 392.6,118.1 393.1,118.3 393.6,119.7 394.1,119.7 394.6,121.0 395.1,120.5 395.6,119.2 396.1,119.3 396.6,118.7 397.1,118.5 397.6,118.4 398.1,120.2 398.6,118.4 399.1,118.6 399.6,119.2 400.1,118.4 400.6,118.7 401.1,116.2 401.6,119.5 402.1,118.6 402.6,119.3 403.1,119.5 403.6,116.6 404.1,117.0 404.6,119.3 405.1,119.3 405.6,121.6 406.1,119.9 406.6,132.4 407.1,118.6 407.6,119.4 408.1,125.5 408.6,118.7 409.1,144.8 409.6,120.9 410.1,97.9 410.6,119.0 411.1,122.2 411.6,119.4 412.1,137.2 412.6,119.5 413.1,142.1 413.6,119.5 414.1,119.4 414.6,126.1 415.1,118.8 415.6,119.6 416.1,119.7 416.6,127.3 417.1,120.2 417.6,115.0 418.1,119.8 418.6,108.9 419.1,118.8 419.6,120.5 420.1,116.6 420.6,136.5 421.1,123.3 421.6,116.7 422.1,153.6 422.6,116.9 423.1,119.6 423.6,121.2 424.1,150.9 424.6,117.9 425.1,117.4 425.6,117.2 426.1,136.3 426.6,118.6 427.1,119.1 427.6,109.2 428.1,119.6 428.6,129.2 429.1,119.2 429.6,117.0 430.1,121.0 430.6,109.9 431.1,120.7 431.6,118.3 432.1,116.3 432.6,118.4 433.1,118.6 433.6,119.0 434.1,118.7 434.6,117.6 435.1,120.2 435.6,118.3 436.1,120.8 436.6,118.9 437.1,118.1 437.6,119.6 438.1,120.2 438.6,117.8 439.1,118.7 439.6,120.9 440.1,117.8 440.6,117.9 441.1,119.3 441.6,117.5 442.1,115.8 442.6,116.9 443.1,119.5 443.6,119.9 444.1,119.8 444.6,119.6 445.1,117.4 445.6,119.9 446.1,120.5 446.6,118.1 447.1,120.3 447.6,118.6 448.1,119.3 448.6,119.5 449.1,117.1 449.6,121.0 450.1,117.9 450.6,118.9 451.1,118.4 451.6,119.6 452.1,119.6 452.6,119.1 453.1,120.9 453.6,119.4 454.1,137.5 454.6,115.3 455.1,114.3 455.6,118.7 456.1,117.9 456.6,95.4 457.1,119.8 457.6,120.4 458.1,121.5 458.6,116.9 459.1,118.1 459.6,141.3 460.1,117.3 460.6,120.0 461.1,119.5 461.6,118.3 462.1,125.8 462.6,118.7 463.1,118.2 463.6,116.8 464.1,123.1 464.6,120.1 465.1,120.4 465.6,115.0 466.1,118.6 466.6,121.9 467.1,120.6 467.6,119.6 468.1,109.8 468.6,119.8 469.1,119.0 469.6,119.8 470.1,126.6 470.6,118.9 471.1,120.8 471.6,117.7 472.1,118.2 472.6,120.8 473.1,119.6 473.6,120.4 474.1,116.1 474.6,119.2 475.1,117.4 475.6,117.2 476.1,119.6 476.6,120.6 477.1,117.1 477.6,116.7 478.1,118.3 478.6,118.9 479.1,117.3 479.6,122.0 480.1,119.8 480.6,118.6 481.1,118.4 481.6,122.1 482.1,122.0 482.6,118.4 483.1,119.5 483.6,120.7 484.1,117.5 484.6,118.3 485.1,120.8 485.6,118.1 486.1,118.5 486.6,117.3 487.1,118.0 487.6,119.9 488.1,118.0 488.6,117.3 489.1,118.2 489.6,121.3 490.1,119.3 490.6,118.3 491.1,119.2 491.6,119.6 492.1,119.2 492.6,116.7 493.1,119.4 493.6,118.7 494.1,120.1 494.6,117.2 495.1,120.4 495.6,118.4 496.1,116.8 496.6,120.8 497.1,118.3 497.6,119.5 498.1,123.3 498.6,120.4 499.1,120.5 499.6,120.5 500.1,117.6 500.6,116.9 501.1,108.7 501.6,119.3 502.1,117.8 502.6,132.7 503.1,119.2 503.6,122.8 504.1,117.6 504.6,117.5 505.1,121.6 505.6,118.7 506.1,126.0 506.6,110.9 507.1,117.7 507.6,118.3 508.1,121.0" fill="none" stroke="#ECEC3C" stroke-width="0.7"/><polyline points="110.6,118.5 112.6,119.2 114.6,118.3 116.6,119.6 118.6,117.5 120.6,119.6 122.6,119.2 124.6,119.2 126.6,119.6 128.6,119.6 130.6,119.6 132.6,119.6 134.6,119.6 136.6,118.6 138.6,118.6 140.6,118.8 142.6,119.1 144.6,118.9 146.6,119.4 148.6,118.8 150.6,119.6 152.6,115.4 154.6,113.1 156.6,112.8 158.6,108.2 160.6,107.0 162.6,110.7 164.6,109.6 166.6,104.7 168.6,107.8 170.6,111.9 172.6,109.1 174.6,108.2 176.6,113.1 178.6,115.7 180.6,118.6 182.6,118.8 184.6,119.6 186.6,119.3 188.6,118.8 190.6,119.6 192.6,119.5 194.6,119.6 196.6,119.6 198.6,119.6 200.6,119.1 202.6,115.0 204.6,111.7 206.6,109.7 208.6,104.1 210.6,102.0 212.6,98.2 214.6,97.9 216.6,107.3 218.6,105.8 220.6,111.2 222.6,113.6 224.6,119.2 226.6,118.8 228.6,118.9 230.6,119.2 232.6,119.4 234.6,118.6 236.6,118.7 238.6,119.2 240.6,118.5 242.6,119.6 244.6,119.5 246.6,119.4 248.6,118.9 250.6,119.6 252.6,118.5 254.6,119.1 256.6,117.9 258.6,116.1 260.6,114.0 262.6,113.8 264.6,110.8 266.6,106.9 268.6,106.1 270.6,103.5 272.6,104.1 274.6,101.8 276.6,105.4 278.6,104.1 280.6,110.1 282.6,112.3 284.6,115.0 286.6,115.9 288.6,118.4 290.6,119.6 292.6,119.3 294.6,119.6 296.6,119.1 298.6,119.0 300.6,119.4 302.6,118.4 304.6,119.1 306.6,118.5 308.6,114.8 310.6,113.0 312.6,109.8 314.6,111.4 316.6,105.3 318.6,104.3 320.6,102.5 322.6,106.8 324.6,106.3 326.6,112.3 328.6,112.9 330.6,113.9 332.6,119.3 334.6,119.4 336.6,119.2 338.6,119.4 340.6,118.8 342.6,118.7 344.6,119.6 346.6,119.6 348.6,118.9 350.6,119.3 352.6,115.0 354.6,113.2 356.6,111.9 358.6,107.9 360.6,100.1 362.6,98.0 364.6,100.0 366.6,104.8 368.6,109.9 370.6,112.4 372.6,119.6 374.6,119.6 376.6,119.4 378.6,118.6 380.6,119.2 382.6,118.5 384.6,119.3 386.6,119.0 388.6,119.6 390.6,118.4 392.6,119.5 394.6,119.3 396.6,119.6 398.6,117.3 400.6,118.6 402.6,116.3 404.6,115.0 406.6,112.5 408.6,105.6 410.6,105.2 412.6,103.6 414.6,106.8 416.6,108.9 418.6,104.1 420.6,100.3 422.6,102.1 424.6,102.4 426.6,105.4 428.6,107.8 430.6,114.7 432.6,115.2 434.6,119.2 436.6,119.6 438.6,118.6 440.6,118.7 442.6,119.6 444.6,118.5 446.6,119.6 448.6,118.2 450.6,119.3 452.6,114.1 454.6,108.0 456.6,108.4 458.6,107.0 460.6,110.1 462.6,111.1 464.6,108.2 466.6,109.7 468.6,114.1 470.6,114.7 472.6,119.5 474.6,118.4 476.6,118.3 478.6,118.1 480.6,119.1 482.6,119.1 484.6,118.9 486.6,118.8 488.6,118.9 490.6,119.6 492.6,119.0 494.6,118.4 496.6,115.7 498.6,115.3 500.6,111.7 502.6,112.3 504.6,109.9 506.6,111.3" fill="none" stroke="#E83018" stroke-width="0.9"/><polygon points="305.5,169.5 312.5,169.5 309,164.5" fill="#10E010"/><rect x="90" y="170" width="20" height="97" fill="#9E9E9E"/><rect x="110" y="170" width="399" height="97" fill="#000"/><rect x="90" y="169.4" width="20" height="1.2" fill="#5A5A5A"/><rect x="112.0" y="260.5" width="0.7" height="3" fill="#303030"/><rect x="122.2" y="260.5" width="0.7" height="3" fill="#303030"/><rect x="132.4" y="260.5" width="0.7" height="3" fill="#303030"/><rect x="142.6" y="260.5" width="0.7" height="3" fill="#303030"/><rect x="152.8" y="260.5" width="0.7" height="3" fill="#303030"/><rect x="163.0" y="260.5" width="0.7" height="3" fill="#303030"/><rect x="173.2" y="260.5" width="0.7" height="3" fill="#303030"/><rect x="183.4" y="260.5" width="0.7" height="3" fill="#303030"/><rect x="193.6" y="260.5" width="0.7" height="3" fill="#303030"/><rect x="203.8" y="260.5" width="0.7" height="3" fill="#303030"/><rect x="214.0" y="260.5" width="0.7" height="3" fill="#303030"/><rect x="224.2" y="260.5" width="0.7" height="3" fill="#303030"/><rect x="234.4" y="260.5" width="0.7" height="3" fill="#303030"/><rect x="244.6" y="260.5" width="0.7" height="3" fill="#303030"/><rect x="254.8" y="260.5" width="0.7" height="3" fill="#303030"/><rect x="265.0" y="260.5" width="0.7" height="3" fill="#303030"/><rect x="275.2" y="260.5" width="0.7" height="3" fill="#303030"/><rect x="285.4" y="260.5" width="0.7" height="3" fill="#303030"/><rect x="295.6" y="260.5" width="0.7" height="3" fill="#303030"/><rect x="305.8" y="260.5" width="0.7" height="3" fill="#303030"/><rect x="316.0" y="260.5" width="0.7" height="3" fill="#303030"/><rect x="326.2" y="260.5" width="0.7" height="3" fill="#303030"/><rect x="336.4" y="260.5" width="0.7" height="3" fill="#303030"/><rect x="346.6" y="260.5" width="0.7" height="3" fill="#303030"/><rect x="356.8" y="260.5" width="0.7" height="3" fill="#303030"/><rect x="367.0" y="260.5" width="0.7" height="3" fill="#303030"/><rect x="377.2" y="260.5" width="0.7" height="3" fill="#303030"/><rect x="387.4" y="260.5" width="0.7" height="3" fill="#303030"/><rect x="397.6" y="260.5" width="0.7" height="3" fill="#303030"/><rect x="407.8" y="260.5" width="0.7" height="3" fill="#303030"/><rect x="418.0" y="260.5" width="0.7" height="3" fill="#303030"/><rect x="428.2" y="260.5" width="0.7" height="3" fill="#303030"/><rect x="438.4" y="260.5" width="0.7" height="3" fill="#303030"/><rect x="448.6" y="260.5" width="0.7" height="3" fill="#303030"/><rect x="458.8" y="260.5" width="0.7" height="3" fill="#303030"/><rect x="469.0" y="260.5" width="0.7" height="3" fill="#303030"/><rect x="479.2" y="260.5" width="0.7" height="3" fill="#303030"/><rect x="489.4" y="260.5" width="0.7" height="3" fill="#303030"/><rect x="499.6" y="260.5" width="0.7" height="3" fill="#303030"/><rect x="509.8" y="260.5" width="0.7" height="3" fill="#303030"/><rect x="116.6" y="170" width="1.9" height="91" fill="#118C8C"/><rect x="152.6" y="170" width="1.9" height="91" fill="#118C8C"/><rect x="174.7" y="170" width="1.9" height="91" fill="#118C8C"/><rect x="195.7" y="170" width="1.9" height="91" fill="#118C8C"/><rect x="222.1" y="170" width="1.9" height="91" fill="#118C8C"/><rect x="256.1" y="170" width="1.9" height="91" fill="#118C8C"/><rect x="282.9" y="170" width="1.9" height="91" fill="#118C8C"/><rect x="299.3" y="170" width="1.9" height="91" fill="#118C8C"/><rect x="336.1" y="170" width="1.9" height="91" fill="#118C8C"/><rect x="343.8" y="170" width="1.9" height="91" fill="#118C8C"/><rect x="370.1" y="170" width="1.9" height="91" fill="#118C8C"/><rect x="391.1" y="170" width="1.9" height="91" fill="#118C8C"/><rect x="431.0" y="170" width="1.9" height="91" fill="#118C8C"/><rect x="442.4" y="170" width="1.9" height="91" fill="#118C8C"/><rect x="473.5" y="170" width="1.9" height="91" fill="#118C8C"/><rect x="499.3" y="170" width="1.9" height="91" fill="#118C8C"/><rect x="90" y="212.9" width="19" height="2" fill="#38C8D8"/><rect x="110" y="214.70000000000002" width="399" height="1.4" fill="#18A0A8"/><polyline points="110.9,222.5 111.4,216.5 111.9,217.8 112.4,215.4 112.9,215.1 113.4,217.4 113.9,216.3 114.4,219.5 114.9,217.4 115.4,213.1 115.9,216.4 116.4,214.6 116.9,212.7 117.4,215.9 117.9,215.2 118.4,215.0 118.9,213.8 119.4,214.1 119.9,215.1 120.4,213.5 120.9,215.3 121.4,215.6 121.9,215.2 122.4,215.8 122.9,215.3 123.4,213.9 123.9,214.1 124.4,215.6 124.9,216.7 125.4,215.6 125.9,214.8 126.4,215.6 126.9,213.1 127.4,214.1 127.9,214.9 128.4,215.3 128.9,215.0 129.4,215.1 129.9,213.9 130.4,214.7 130.9,215.7 131.4,213.0 131.9,213.8 132.4,214.9 132.9,217.3 133.4,216.3 133.9,217.4 134.4,217.1 134.9,214.8 135.4,215.3 135.9,213.9 136.4,216.9 136.9,216.3 137.4,216.2 137.9,216.3 138.4,216.0 138.9,215.7 139.4,215.8 139.9,217.0 140.4,214.4 140.9,214.0 141.4,215.4 141.9,216.9 142.4,215.7 142.9,215.1 143.4,216.5 143.9,215.5 144.4,212.9 144.9,214.1 145.4,212.7 145.9,215.1 146.4,214.8 146.9,216.0 147.4,218.1 147.9,214.6 148.4,215.4 148.9,214.9 149.4,211.8 149.9,214.4 150.4,214.5 150.9,215.8 151.4,214.3 151.9,213.7 152.4,216.2 152.9,215.3 153.4,214.2 153.9,214.4 154.4,215.0 154.9,216.5 155.4,217.2 155.9,215.0 156.4,216.9 156.9,212.2 157.4,215.9 157.9,219.3 158.4,214.2 158.9,226.2 159.4,213.7 159.9,214.8 160.4,217.1 160.9,217.6 161.4,220.3 161.9,216.4 162.4,216.1 162.9,207.5 163.4,217.7 163.9,217.2 164.4,219.1 164.9,215.3 165.4,215.0 165.9,208.1 166.4,217.1 166.9,214.2 167.4,218.3 167.9,217.5 168.4,213.5 168.9,214.2 169.4,243.4 169.9,216.0 170.4,221.8 170.9,216.3 171.4,217.8 171.9,214.8 172.4,219.8 172.9,217.4 173.4,217.1 173.9,214.5 174.4,216.6 174.9,214.3 175.4,213.7 175.9,214.7 176.4,215.4 176.9,215.8 177.4,216.1 177.9,216.7 178.4,215.3 178.9,215.9 179.4,215.3 179.9,214.6 180.4,216.0 180.9,215.9 181.4,217.8 181.9,216.2 182.4,214.6 182.9,216.2 183.4,215.1 183.9,217.5 184.4,213.3 184.9,214.6 185.4,214.6 185.9,215.6 186.4,215.3 186.9,213.4 187.4,213.1 187.9,215.7 188.4,217.3 188.9,217.3 189.4,215.0 189.9,216.1 190.4,214.4 190.9,213.6 191.4,217.0 191.9,216.3 192.4,215.0 192.9,215.0 193.4,216.6 193.9,215.9 194.4,215.0 194.9,215.8 195.4,215.5 195.9,214.9 196.4,214.6 196.9,216.7 197.4,214.9 197.9,214.0 198.4,217.8 198.9,217.1 199.4,216.1 199.9,215.4 200.4,215.7 200.9,213.6 201.4,209.0 201.9,215.8 202.4,215.2 202.9,230.9 203.4,214.5 203.9,219.0 204.4,213.5 204.9,215.4 205.4,226.7 205.9,213.8 206.4,215.0 206.9,232.2 207.4,203.4 207.9,216.6 208.4,233.5 208.9,216.6 209.4,203.0 209.9,214.7 210.4,202.5 210.9,213.7 211.4,233.5 211.9,215.5 212.4,216.4 212.9,182.4 213.4,213.9 213.9,214.4 214.4,222.5 214.9,215.5 215.4,206.7 215.9,229.4 216.4,214.5 216.9,213.7 217.4,200.5 217.9,216.1 218.4,216.7 218.9,213.7 219.4,216.8 219.9,210.1 220.4,216.4 220.9,214.0 221.4,214.4 221.9,214.2 222.4,214.2 222.9,214.7 223.4,217.2 223.9,214.6 224.4,216.2 224.9,215.6 225.4,215.8 225.9,215.8 226.4,216.2 226.9,213.9 227.4,215.5 227.9,215.9 228.4,214.7 228.9,215.9 229.4,214.1 229.9,216.3 230.4,214.5 230.9,215.1 231.4,216.4 231.9,216.8 232.4,214.7 232.9,214.6 233.4,216.7 233.9,211.8 234.4,217.1 234.9,217.1 235.4,214.1 235.9,216.9 236.4,215.9 236.9,216.0 237.4,212.5 237.9,214.8 238.4,215.2 238.9,214.9 239.4,214.9 239.9,215.0 240.4,211.8 240.9,215.2 241.4,214.5 241.9,215.3 242.4,214.8 242.9,215.4 243.4,215.8 243.9,217.7 244.4,214.4 244.9,217.6 245.4,215.1 245.9,214.3 246.4,213.6 246.9,216.5 247.4,213.5 247.9,216.6 248.4,215.8 248.9,214.7 249.4,214.6 249.9,216.0 250.4,215.6 250.9,216.3 251.4,215.4 251.9,214.8 252.4,214.9 252.9,213.9 253.4,216.5 253.9,215.5 254.4,214.0 254.9,214.1 255.4,215.0 255.9,213.1 256.4,217.2 256.9,216.6 257.4,214.0 257.9,215.3 258.4,217.6 258.9,215.9 259.4,214.1 259.9,219.1 260.4,213.3 260.9,216.9 261.4,216.7 261.9,214.3 262.4,216.3 262.9,214.9 263.4,206.0 263.9,219.7 264.4,214.8 264.9,217.5 265.4,223.2 265.9,221.0 266.4,217.1 266.9,217.3 267.4,214.1 267.9,200.1 268.4,216.8 268.9,208.6 269.4,217.7 269.9,213.5 270.4,230.7 270.9,213.9 271.4,213.1 271.9,213.4 272.4,215.9 272.9,212.1 273.4,243.4 273.9,213.3 274.4,215.1 274.9,214.0 275.4,225.5 275.9,215.4 276.4,215.1 276.9,221.5 277.4,215.0 277.9,213.4 278.4,219.1 278.9,214.1 279.4,217.1 279.9,210.5 280.4,220.7 280.9,215.4 281.4,216.4 281.9,214.9 282.4,215.4 282.9,218.2 283.4,215.4 283.9,215.8 284.4,218.9 284.9,214.3 285.4,216.6 285.9,216.0 286.4,213.7 286.9,214.6 287.4,216.5 287.9,213.5 288.4,215.2 288.9,216.6 289.4,215.1 289.9,215.7 290.4,214.5 290.9,214.6 291.4,214.6 291.9,214.9 292.4,216.2 292.9,215.5 293.4,217.9 293.9,216.1 294.4,215.8 294.9,218.3 295.4,215.3 295.9,214.4 296.4,215.6 296.9,214.0 297.4,216.1 297.9,217.2 298.4,216.2 298.9,214.9 299.4,215.2 299.9,216.0 300.4,216.9 300.9,214.9 301.4,214.9 301.9,216.8 302.4,215.7 302.9,215.8 303.4,216.0 303.9,216.3 304.4,215.2 304.9,211.3 305.4,215.2 305.9,215.1 306.4,213.5 306.9,215.9 307.4,218.0 307.9,214.4 308.4,220.8 308.9,218.0 309.4,220.0 309.9,215.9 310.4,218.8 310.9,216.7 311.4,216.5 311.9,208.1 312.4,215.2 312.9,201.6 313.4,215.3 313.9,222.9 314.4,215.4 314.9,207.6 315.4,213.7 315.9,215.0 316.4,226.0 316.9,215.2 317.4,216.4 317.9,221.7 318.4,218.4 318.9,214.1 319.4,206.7 319.9,214.2 320.4,207.1 320.9,226.3 321.4,213.5 321.9,214.1 322.4,218.0 322.9,218.8 323.4,216.6 323.9,213.8 324.4,217.3 324.9,216.1 325.4,219.4 325.9,213.5 326.4,215.2 326.9,215.4 327.4,216.5 327.9,217.0 328.4,221.0 328.9,217.9 329.4,215.2 329.9,209.3 330.4,216.3 330.9,216.8 331.4,222.1 331.9,217.1 332.4,215.7 332.9,213.1 333.4,213.6 333.9,215.8 334.4,215.8 334.9,218.6 335.4,215.0 335.9,215.6 336.4,215.2 336.9,216.3 337.4,217.0 337.9,217.4 338.4,217.0 338.9,215.2 339.4,217.6 339.9,215.7 340.4,216.5 340.9,215.1 341.4,213.6 341.9,212.5 342.4,215.6 342.9,214.5 343.4,215.4 343.9,216.6 344.4,213.4 344.9,213.1 345.4,215.7 345.9,215.9 346.4,215.1 346.9,214.7 347.4,213.3 347.9,215.3 348.4,214.4 348.9,216.0 349.4,211.9 349.9,214.7 350.4,215.9 350.9,212.5 351.4,216.3 351.9,217.4 352.4,221.7 352.9,216.3 353.4,216.4 353.9,212.4 354.4,218.1 354.9,215.9 355.4,217.0 355.9,217.1 356.4,216.8 356.9,224.9 357.4,200.5 357.9,213.2 358.4,207.4 358.9,213.3 359.4,216.9 359.9,226.9 360.4,214.1 360.9,215.8 361.4,216.4 361.9,218.9 362.4,216.5 362.9,228.9 363.4,215.3 363.9,216.2 364.4,225.0 364.9,214.8 365.4,214.4 365.9,216.8 366.4,214.7 366.9,215.1 367.4,216.4 367.9,215.3 368.4,217.3 368.9,211.7 369.4,216.4 369.9,213.7 370.4,213.5 370.9,214.1 371.4,215.6 371.9,214.5 372.4,213.6 372.9,217.0 373.4,214.2 373.9,215.3 374.4,215.7 374.9,214.8 375.4,215.9 375.9,216.2 376.4,215.3 376.9,216.7 377.4,213.6 377.9,214.0 378.4,215.7 378.9,214.2 379.4,215.9 379.9,215.3 380.4,214.8 380.9,216.2 381.4,216.1 381.9,214.8 382.4,215.0 382.9,215.6 383.4,216.0 383.9,214.7 384.4,213.9 384.9,215.6 385.4,216.3 385.9,212.7 386.4,213.5 386.9,214.6 387.4,212.1 387.9,214.6 388.4,216.5 388.9,214.0 389.4,215.6 389.9,214.3 390.4,215.9 390.9,216.2 391.4,217.1 391.9,215.5 392.4,216.8 392.9,215.9 393.4,214.8 393.9,217.3 394.4,214.6 394.9,215.6 395.4,217.8 395.9,216.5 396.4,214.3 396.9,211.0 397.4,214.7 397.9,215.2 398.4,216.9 398.9,215.7 399.4,213.4 399.9,207.2 400.4,215.9 400.9,213.8 401.4,218.3 401.9,219.5 402.4,213.8 402.9,220.9 403.4,214.7 403.9,216.4 404.4,213.2 404.9,214.6 405.4,213.9 405.9,216.8 406.4,214.8 406.9,215.3 407.4,211.6 407.9,215.3 408.4,216.1 408.9,202.3 409.4,213.8 409.9,217.4 410.4,216.4 410.9,215.8 411.4,213.8 411.9,235.0 412.4,215.4 412.9,214.1 413.4,228.9 413.9,211.7 414.4,216.6 414.9,202.9 415.4,217.1 415.9,216.6 416.4,219.3 416.9,216.9 417.4,221.5 417.9,216.0 418.4,227.3 418.9,216.0 419.4,222.5 419.9,215.5 420.4,214.9 420.9,179.4 421.4,215.2 421.9,201.7 422.4,240.4 422.9,204.8 423.4,214.7 423.9,212.5 424.4,212.5 424.9,216.3 425.4,211.5 425.9,217.2 426.4,217.6 426.9,215.9 427.4,213.5 427.9,213.5 428.4,215.1 428.9,212.6 429.4,217.6 429.9,216.7 430.4,213.5 430.9,215.4 431.4,215.2 431.9,214.6 432.4,216.2 432.9,217.5 433.4,214.8 433.9,216.9 434.4,217.2 434.9,214.0 435.4,217.7 435.9,217.6 436.4,215.8 436.9,217.6 437.4,215.7 437.9,216.9 438.4,216.2 438.9,214.3 439.4,215.7 439.9,210.3 440.4,214.8 440.9,213.9 441.4,214.4 441.9,213.8 442.4,216.9 442.9,212.9 443.4,215.5 443.9,214.6 444.4,213.8 444.9,216.3 445.4,214.4 445.9,217.0 446.4,215.2 446.9,210.2 447.4,215.2 447.9,211.0 448.4,218.9 448.9,214.8 449.4,215.4 449.9,217.8 450.4,214.7 450.9,217.8 451.4,206.6 451.9,214.7 452.4,233.9 452.9,214.3 453.4,213.1 453.9,217.2 454.4,216.3 454.9,213.5 455.4,213.5 455.9,214.1 456.4,221.4 456.9,213.5 457.4,213.7 457.9,195.7 458.4,215.7 458.9,214.2 459.4,190.4 459.9,217.4 460.4,214.6 460.9,211.2 461.4,201.5 461.9,213.3 462.4,217.2 462.9,219.9 463.4,218.4 463.9,213.3 464.4,201.0 464.9,216.8 465.4,202.9 465.9,217.3 466.4,215.0 466.9,207.4 467.4,216.4 467.9,215.0 468.4,220.9 468.9,215.1 469.4,216.0 469.9,211.2 470.4,212.8 470.9,215.5 471.4,219.7 471.9,214.3 472.4,213.2 472.9,214.8 473.4,215.0 473.9,214.9 474.4,217.0 474.9,216.3 475.4,215.1 475.9,212.7 476.4,216.3 476.9,215.1 477.4,214.9 477.9,216.4 478.4,214.6 478.9,215.3 479.4,216.5 479.9,216.1 480.4,214.6 480.9,217.3 481.4,216.9 481.9,217.9 482.4,215.3 482.9,215.7 483.4,216.8 483.9,216.0 484.4,215.6 484.9,215.3 485.4,215.0 485.9,214.6 486.4,214.6 486.9,215.9 487.4,215.0 487.9,213.6 488.4,215.5 488.9,217.6 489.4,217.2 489.9,212.8 490.4,214.3 490.9,216.4 491.4,215.5 491.9,215.5 492.4,215.2 492.9,215.5 493.4,214.1 493.9,216.9 494.4,214.1 494.9,215.2 495.4,217.4 495.9,216.8 496.4,215.4 496.9,215.4 497.4,214.6 497.9,214.8 498.4,215.1 498.9,217.1 499.4,214.8 499.9,216.1 500.4,216.0 500.9,215.9 501.4,219.0 501.9,216.4 502.4,215.6 502.9,215.5 503.4,214.8 503.9,212.6 504.4,214.1 504.9,211.6 505.4,214.8 505.9,208.0 506.4,213.1 506.9,214.2 507.4,216.3 507.9,217.3 508.4,216.5" fill="none" stroke="#A8A828" stroke-width="0.8"/><polyline points="110.6,211.2 111.1,216.4 111.6,217.5 112.1,204.7 112.6,218.1 113.1,215.8 113.6,213.6 114.1,214.2 114.6,212.9 115.1,215.3 115.6,213.4 116.1,212.7 116.6,217.3 117.1,214.7 117.6,215.2 118.1,216.2 118.6,216.0 119.1,214.6 119.6,214.9 120.1,217.6 120.6,217.1 121.1,216.4 121.6,217.7 122.1,213.0 122.6,215.6 123.1,215.1 123.6,212.9 124.1,215.9 124.6,216.3 125.1,215.8 125.6,213.1 126.1,215.2 126.6,215.7 127.1,215.2 127.6,215.8 128.1,216.1 128.6,217.4 129.1,215.8 129.6,219.0 130.1,215.8 130.6,215.9 131.1,216.5 131.6,215.4 132.1,215.1 132.6,217.1 133.1,212.6 133.6,213.1 134.1,218.2 134.6,216.5 135.1,216.2 135.6,215.9 136.1,215.9 136.6,214.2 137.1,215.1 137.6,214.1 138.1,217.0 138.6,216.3 139.1,215.8 139.6,216.0 140.1,215.3 140.6,214.0 141.1,217.8 141.6,216.4 142.1,215.3 142.6,216.3 143.1,217.2 143.6,217.1 144.1,216.4 144.6,216.6 145.1,215.2 145.6,217.3 146.1,216.8 146.6,216.8 147.1,213.8 147.6,216.4 148.1,216.4 148.6,216.6 149.1,212.1 149.6,213.0 150.1,215.9 150.6,214.2 151.1,216.0 151.6,215.4 152.1,216.6 152.6,214.7 153.1,214.1 153.6,216.2 154.1,215.1 154.6,213.9 155.1,217.5 155.6,219.7 156.1,215.0 156.6,215.1 157.1,224.2 157.6,214.1 158.1,215.3 158.6,221.6 159.1,216.5 159.6,214.5 160.1,216.8 160.6,217.0 161.1,214.8 161.6,231.5 162.1,231.3 162.6,214.4 163.1,213.6 163.6,210.4 164.1,215.2 164.6,218.9 165.1,215.7 165.6,203.1 166.1,216.1 166.6,189.5 167.1,214.0 167.6,217.7 168.1,220.0 168.6,213.0 169.1,214.7 169.6,214.0 170.1,218.0 170.6,216.9 171.1,217.5 171.6,218.4 172.1,212.1 172.6,212.9 173.1,214.2 173.6,216.0 174.1,212.5 174.6,214.7 175.1,216.6 175.6,214.3 176.1,215.3 176.6,214.2 177.1,217.8 177.6,218.1 178.1,214.1 178.6,214.3 179.1,215.6 179.6,216.4 180.1,216.1 180.6,216.4 181.1,216.8 181.6,217.1 182.1,218.1 182.6,215.8 183.1,214.9 183.6,215.5 184.1,218.6 184.6,216.7 185.1,216.6 185.6,217.4 186.1,217.3 186.6,218.8 187.1,214.5 187.6,215.9 188.1,216.6 188.6,216.7 189.1,215.1 189.6,213.4 190.1,215.2 190.6,214.7 191.1,215.5 191.6,217.1 192.1,216.5 192.6,214.0 193.1,214.6 193.6,215.8 194.1,217.1 194.6,215.5 195.1,215.9 195.6,213.5 196.1,214.9 196.6,214.5 197.1,215.8 197.6,215.2 198.1,214.4 198.6,214.1 199.1,217.6 199.6,214.6 200.1,217.0 200.6,221.3 201.1,215.1 201.6,227.0 202.1,213.9 202.6,216.7 203.1,211.7 203.6,216.5 204.1,214.6 204.6,214.2 205.1,187.5 205.6,215.5 206.1,216.1 206.6,229.9 207.1,217.9 207.6,221.8 208.1,213.9 208.6,218.1 209.1,229.3 209.6,217.4 210.1,207.9 210.6,218.4 211.1,215.7 211.6,188.0 212.1,215.9 212.6,213.9 213.1,216.7 213.6,200.0 214.1,215.9 214.6,214.7 215.1,226.3 215.6,215.9 216.1,216.5 216.6,233.0 217.1,215.2 217.6,214.7 218.1,224.3 218.6,217.4 219.1,215.2 219.6,214.3 220.1,205.6 220.6,213.3 221.1,215.8 221.6,215.3 222.1,217.2 222.6,215.3 223.1,213.2 223.6,213.9 224.1,215.6 224.6,215.4 225.1,214.5 225.6,214.7 226.1,213.3 226.6,213.4 227.1,214.6 227.6,214.5 228.1,215.2 228.6,213.9 229.1,217.5 229.6,213.1 230.1,216.6 230.6,216.2 231.1,217.6 231.6,217.3 232.1,213.7 232.6,215.9 233.1,216.5 233.6,216.7 234.1,216.2 234.6,214.7 235.1,217.2 235.6,215.3 236.1,214.8 236.6,215.7 237.1,214.9 237.6,214.6 238.1,215.6 238.6,219.0 239.1,215.9 239.6,215.6 240.1,214.9 240.6,216.0 241.1,213.9 241.6,216.1 242.1,215.9 242.6,215.6 243.1,216.1 243.6,215.2 244.1,216.4 244.6,216.2 245.1,216.2 245.6,215.5 246.1,216.7 246.6,215.3 247.1,217.2 247.6,215.3 248.1,217.2 248.6,215.8 249.1,215.5 249.6,214.2 250.1,216.3 250.6,216.0 251.1,215.6 251.6,216.0 252.1,215.7 252.6,214.3 253.1,213.9 253.6,216.3 254.1,215.7 254.6,217.5 255.1,218.2 255.6,216.6 256.1,216.4 256.6,216.3 257.1,215.6 257.6,214.6 258.1,212.0 258.6,216.5 259.1,216.3 259.6,215.5 260.1,215.7 260.6,214.2 261.1,216.7 261.6,216.7 262.1,215.2 262.6,216.3 263.1,204.0 263.6,218.4 264.1,214.3 264.6,216.2 265.1,212.6 265.6,214.9 266.1,218.6 266.6,229.1 267.1,215.3 267.6,199.6 268.1,216.7 268.6,214.9 269.1,223.0 269.6,215.7 270.1,216.6 270.6,213.6 271.1,215.7 271.6,214.6 272.1,190.9 272.6,215.5 273.1,214.0 273.6,214.9 274.1,226.6 274.6,215.2 275.1,216.5 275.6,215.4 276.1,207.9 276.6,216.0 277.1,215.3 277.6,214.3 278.1,214.5 278.6,213.9 279.1,216.5 279.6,213.7 280.1,206.0 280.6,214.3 281.1,219.2 281.6,215.6 282.1,214.4 282.6,214.9 283.1,216.3 283.6,212.5 284.1,215.1 284.6,215.9 285.1,216.8 285.6,215.6 286.1,214.6 286.6,216.7 287.1,216.7 287.6,218.4 288.1,218.3 288.6,215.2 289.1,217.3 289.6,215.7 290.1,214.1 290.6,216.4 291.1,217.2 291.6,212.3 292.1,217.2 292.6,214.4 293.1,217.6 293.6,215.8 294.1,215.7 294.6,217.3 295.1,215.0 295.6,218.3 296.1,214.2 296.6,214.7 297.1,214.0 297.6,216.2 298.1,215.4 298.6,216.5 299.1,216.9 299.6,216.5 300.1,216.9 300.6,216.9 301.1,215.3 301.6,214.5 302.1,214.1 302.6,216.2 303.1,214.7 303.6,214.1 304.1,214.3 304.6,219.6 305.1,215.7 305.6,215.1 306.1,214.0 306.6,216.1 307.1,213.3 307.6,215.0 308.1,217.0 308.6,215.7 309.1,223.0 309.6,215.5 310.1,216.2 310.6,221.1 311.1,214.8 311.6,215.9 312.1,216.7 312.6,212.0 313.1,214.3 313.6,231.3 314.1,214.1 314.6,213.6 315.1,214.7 315.6,212.7 316.1,216.6 316.6,217.0 317.1,214.3 317.6,210.3 318.1,216.1 318.6,214.5 319.1,211.0 319.6,212.8 320.1,216.3 320.6,195.4 321.1,214.0 321.6,209.1 322.1,213.9 322.6,215.9 323.1,214.7 323.6,212.4 324.1,214.9 324.6,221.2 325.1,217.0 325.6,217.1 326.1,215.5 326.6,214.1 327.1,215.7 327.6,216.2 328.1,216.1 328.6,226.9 329.1,214.4 329.6,214.8 330.1,205.4 330.6,214.7 331.1,214.3 331.6,206.6 332.1,210.6 332.6,214.2 333.1,215.2 333.6,219.4 334.1,214.8 334.6,216.6 335.1,216.2 335.6,215.1 336.1,216.2 336.6,217.4 337.1,216.6 337.6,213.2 338.1,213.3 338.6,214.2 339.1,216.5 339.6,216.3 340.1,216.8 340.6,216.3 341.1,214.6 341.6,214.9 342.1,214.2 342.6,216.5 343.1,213.7 343.6,215.4 344.1,215.7 344.6,217.0 345.1,214.3 345.6,215.9 346.1,213.9 346.6,216.7 347.1,214.7 347.6,214.9 348.1,214.1 348.6,219.1 349.1,214.5 349.6,214.5 350.1,213.6 350.6,214.0 351.1,215.7 351.6,216.6 352.1,213.8 352.6,212.5 353.1,218.6 353.6,213.2 354.1,214.3 354.6,226.1 355.1,215.7 355.6,198.5 356.1,214.4 356.6,216.7 357.1,215.6 357.6,235.5 358.1,214.2 358.6,226.0 359.1,215.3 359.6,216.1 360.1,215.7 360.6,204.2 361.1,217.9 361.6,215.1 362.1,215.9 362.6,218.5 363.1,214.6 363.6,216.3 364.1,212.9 364.6,207.2 365.1,213.3 365.6,214.9 366.1,204.2 366.6,214.7 367.1,219.8 367.6,216.9 368.1,217.6 368.6,216.7 369.1,210.4 369.6,217.2 370.1,214.3 370.6,217.0 371.1,216.5 371.6,217.1 372.1,216.7 372.6,217.1 373.1,214.6 373.6,214.3 374.1,214.0 374.6,215.3 375.1,215.1 375.6,215.5 376.1,213.8 376.6,215.6 377.1,216.4 377.6,215.5 378.1,211.8 378.6,215.3 379.1,214.9 379.6,216.6 380.1,215.1 380.6,216.2 381.1,214.8 381.6,215.8 382.1,216.6 382.6,215.0 383.1,215.8 383.6,215.6 384.1,216.2 384.6,215.2 385.1,216.0 385.6,213.0 386.1,215.1 386.6,216.4 387.1,216.2 387.6,214.1 388.1,214.3 388.6,215.9 389.1,215.8 389.6,216.0 390.1,215.4 390.6,215.5 391.1,216.7 391.6,214.1 392.1,213.5 392.6,216.7 393.1,214.4 393.6,216.3 394.1,214.5 394.6,217.2 395.1,217.4 395.6,215.3 396.1,213.5 396.6,213.5 397.1,215.1 397.6,210.0 398.1,215.6 398.6,213.8 399.1,215.0 399.6,212.6 400.1,216.1 400.6,215.4 401.1,214.3 401.6,218.4 402.1,217.2 402.6,219.3 403.1,214.7 403.6,215.4 404.1,233.2 404.6,215.3 405.1,212.2 405.6,215.3 406.1,218.0 406.6,218.6 407.1,218.8 407.6,216.2 408.1,213.1 408.6,217.9 409.1,216.3 409.6,232.8 410.1,217.7 410.6,216.5 411.1,222.9 411.6,211.9 412.1,197.4 412.6,216.3 413.1,226.5 413.6,213.1 414.1,214.6 414.6,219.4 415.1,216.2 415.6,216.5 416.1,195.1 416.6,217.5 417.1,211.7 417.6,213.8 418.1,238.1 418.6,216.7 419.1,215.7 419.6,214.9 420.1,202.2 420.6,214.8 421.1,215.2 421.6,214.2 422.1,197.7 422.6,216.7 423.1,215.0 423.6,207.2 424.1,215.3 424.6,202.0 425.1,214.7 425.6,218.6 426.1,217.9 426.6,215.2 427.1,216.7 427.6,216.7 428.1,217.1 428.6,214.1 429.1,215.2 429.6,214.3 430.1,214.5 430.6,215.0 431.1,215.2 431.6,216.8 432.1,213.1 432.6,216.7 433.1,215.1 433.6,216.1 434.1,214.9 434.6,218.4 435.1,213.0 435.6,216.9 436.1,214.8 436.6,215.1 437.1,217.2 437.6,215.1 438.1,216.6 438.6,217.3 439.1,214.6 439.6,218.0 440.1,217.0 440.6,215.1 441.1,215.7 441.6,214.5 442.1,215.8 442.6,216.5 443.1,216.7 443.6,215.7 444.1,214.7 444.6,214.5 445.1,214.1 445.6,219.6 446.1,216.2 446.6,214.6 447.1,217.2 447.6,214.0 448.1,216.1 448.6,217.4 449.1,213.3 449.6,229.6 450.1,216.8 450.6,215.4 451.1,196.7 451.6,215.3 452.1,219.6 452.6,216.7 453.1,217.2 453.6,216.7 454.1,215.7 454.6,240.1 455.1,219.6 455.6,217.6 456.1,241.0 456.6,215.4 457.1,221.8 457.6,213.8 458.1,215.8 458.6,216.9 459.1,185.9 459.6,216.7 460.1,223.0 460.6,216.0 461.1,199.6 461.6,214.5 462.1,217.5 462.6,214.9 463.1,233.3 463.6,213.4 464.1,216.7 464.6,225.0 465.1,214.6 465.6,214.0 466.1,223.0 466.6,217.1 467.1,216.1 467.6,214.9 468.1,214.4 468.6,213.8 469.1,215.0 469.6,213.3 470.1,204.8 470.6,216.8 471.1,209.8 471.6,215.2 472.1,214.6 472.6,216.1 473.1,216.2 473.6,217.2 474.1,214.5 474.6,213.9 475.1,214.6 475.6,213.8 476.1,215.3 476.6,214.8 477.1,214.2 477.6,215.3 478.1,216.7 478.6,216.3 479.1,214.5 479.6,215.4 480.1,215.8 480.6,216.2 481.1,214.9 481.6,213.7 482.1,215.8 482.6,214.1 483.1,214.9 483.6,215.0 484.1,216.5 484.6,214.7 485.1,215.6 485.6,215.1 486.1,214.6 486.6,216.5 487.1,214.7 487.6,216.0 488.1,215.7 488.6,212.9 489.1,213.2 489.6,211.3 490.1,215.7 490.6,215.7 491.1,214.7 491.6,214.7 492.1,214.9 492.6,214.5 493.1,215.3 493.6,215.3 494.1,214.2 494.6,217.2 495.1,216.7 495.6,214.8 496.1,218.2 496.6,218.5 497.1,217.0 497.6,216.9 498.1,214.6 498.6,215.0 499.1,213.3 499.6,214.8 500.1,216.6 500.6,214.8 501.1,213.2 501.6,217.4 502.1,217.9 502.6,213.7 503.1,213.4 503.6,216.4 504.1,214.3 504.6,217.0 505.1,216.3 505.6,217.4 506.1,219.9 506.6,214.9 507.1,213.7 507.6,213.2 508.1,214.1" fill="none" stroke="#ECEC3C" stroke-width="0.7"/><polyline points="110.6,207.1 112.6,209.3 114.6,209.9 116.6,214.1 118.6,215.5 120.6,216.0 122.6,215.8 124.6,216.0 126.6,214.5 128.6,215.3 130.6,215.1 132.6,215.4 134.6,215.6 136.6,216.0 138.6,215.7 140.6,214.0 142.6,215.3 144.6,215.6 146.6,214.0 148.6,215.5 150.6,216.0 152.6,215.8 154.6,212.1 156.6,208.7 158.6,210.4 160.6,206.7 162.6,207.6 164.6,204.0 166.6,207.2 168.6,206.8 170.6,208.3 172.6,211.4 174.6,212.1 176.6,215.8 178.6,215.2 180.6,214.9 182.6,215.2 184.6,216.0 186.6,215.4 188.6,215.1 190.6,215.9 192.6,215.8 194.6,215.0 196.6,215.5 198.6,212.2 200.6,209.2 202.6,209.7 204.6,203.9 206.6,202.8 208.6,202.4 210.6,200.6 212.6,201.1 214.6,203.5 216.6,205.6 218.6,207.0 220.6,211.2 222.6,214.5 224.6,215.9 226.6,215.3 228.6,215.2 230.6,215.3 232.6,214.5 234.6,215.8 236.6,215.5 238.6,216.0 240.6,215.9 242.6,215.2 244.6,216.0 246.6,216.0 248.6,215.2 250.6,214.9 252.6,214.4 254.6,215.7 256.6,216.0 258.6,212.6 260.6,212.6 262.6,211.1 264.6,208.3 266.6,207.3 268.6,206.5 270.6,207.4 272.6,205.9 274.6,204.2 276.6,211.3 278.6,209.9 280.6,211.4 282.6,212.7 284.6,215.1 286.6,215.0 288.6,215.3 290.6,214.9 292.6,215.8 294.6,216.0 296.6,215.0 298.6,215.1 300.6,216.0 302.6,212.2 304.6,213.9 306.6,212.7 308.6,210.6 310.6,209.5 312.6,207.7 314.6,207.1 316.6,211.1 318.6,205.8 320.6,207.0 322.6,208.3 324.6,211.7 326.6,211.4 328.6,209.7 330.6,206.9 332.6,209.3 334.6,212.1 336.6,215.1 338.6,214.2 340.6,215.7 342.6,215.7 344.6,215.1 346.6,213.7 348.6,213.8 350.6,211.4 352.6,210.2 354.6,208.6 356.6,203.2 358.6,205.0 360.6,208.1 362.6,210.2 364.6,208.8 366.6,209.1 368.6,211.3 370.6,214.9 372.6,215.2 374.6,215.5 376.6,216.0 378.6,215.5 380.6,216.0 382.6,213.5 384.6,216.0 386.6,214.4 388.6,215.0 390.6,215.8 392.6,216.0 394.6,212.1 396.6,212.1 398.6,211.2 400.6,210.3 402.6,210.4 404.6,210.1 406.6,208.9 408.6,209.7 410.6,205.3 412.6,204.0 414.6,204.1 416.6,203.7 418.6,200.5 420.6,199.0 422.6,200.5 424.6,203.0 426.6,211.2 428.6,212.0 430.6,214.7 432.6,216.0 434.6,215.3 436.6,215.3 438.6,215.1 440.6,215.9 442.6,214.6 444.6,215.3 446.6,212.5 448.6,211.1 450.6,206.8 452.6,205.4 454.6,204.4 456.6,203.1 458.6,201.4 460.6,203.7 462.6,203.6 464.6,206.5 466.6,208.4 468.6,210.6 470.6,210.3 472.6,211.4 474.6,215.6 476.6,216.0 478.6,215.3 480.6,215.8 482.6,216.0 484.6,215.2 486.6,215.4 488.6,215.8 490.6,215.7 492.6,214.8 494.6,215.6 496.6,215.7 498.6,215.7 500.6,215.8 502.6,212.5 504.6,211.0 506.6,211.3" fill="none" stroke="#E83018" stroke-width="0.9"/><polygon points="305.5,266.5 312.5,266.5 309,261.5" fill="#10E010"/><rect x="90" y="267" width="20" height="97" fill="#A6A6A6"/><rect x="110" y="267" width="399" height="97" fill="#000"/><rect x="90" y="266.4" width="20" height="1.2" fill="#5A5A5A"/><rect x="112.0" y="357.5" width="0.7" height="3" fill="#303030"/><rect x="122.2" y="357.5" width="0.7" height="3" fill="#303030"/><rect x="132.4" y="357.5" width="0.7" height="3" fill="#303030"/><rect x="142.6" y="357.5" width="0.7" height="3" fill="#303030"/><rect x="152.8" y="357.5" width="0.7" height="3" fill="#303030"/><rect x="163.0" y="357.5" width="0.7" height="3" fill="#303030"/><rect x="173.2" y="357.5" width="0.7" height="3" fill="#303030"/><rect x="183.4" y="357.5" width="0.7" height="3" fill="#303030"/><rect x="193.6" y="357.5" width="0.7" height="3" fill="#303030"/><rect x="203.8" y="357.5" width="0.7" height="3" fill="#303030"/><rect x="214.0" y="357.5" width="0.7" height="3" fill="#303030"/><rect x="224.2" y="357.5" width="0.7" height="3" fill="#303030"/><rect x="234.4" y="357.5" width="0.7" height="3" fill="#303030"/><rect x="244.6" y="357.5" width="0.7" height="3" fill="#303030"/><rect x="254.8" y="357.5" width="0.7" height="3" fill="#303030"/><rect x="265.0" y="357.5" width="0.7" height="3" fill="#303030"/><rect x="275.2" y="357.5" width="0.7" height="3" fill="#303030"/><rect x="285.4" y="357.5" width="0.7" height="3" fill="#303030"/><rect x="295.6" y="357.5" width="0.7" height="3" fill="#303030"/><rect x="305.8" y="357.5" width="0.7" height="3" fill="#303030"/><rect x="316.0" y="357.5" width="0.7" height="3" fill="#303030"/><rect x="326.2" y="357.5" width="0.7" height="3" fill="#303030"/><rect x="336.4" y="357.5" width="0.7" height="3" fill="#303030"/><rect x="346.6" y="357.5" width="0.7" height="3" fill="#303030"/><rect x="356.8" y="357.5" width="0.7" height="3" fill="#303030"/><rect x="367.0" y="357.5" width="0.7" height="3" fill="#303030"/><rect x="377.2" y="357.5" width="0.7" height="3" fill="#303030"/><rect x="387.4" y="357.5" width="0.7" height="3" fill="#303030"/><rect x="397.6" y="357.5" width="0.7" height="3" fill="#303030"/><rect x="407.8" y="357.5" width="0.7" height="3" fill="#303030"/><rect x="418.0" y="357.5" width="0.7" height="3" fill="#303030"/><rect x="428.2" y="357.5" width="0.7" height="3" fill="#303030"/><rect x="438.4" y="357.5" width="0.7" height="3" fill="#303030"/><rect x="448.6" y="357.5" width="0.7" height="3" fill="#303030"/><rect x="458.8" y="357.5" width="0.7" height="3" fill="#303030"/><rect x="469.0" y="357.5" width="0.7" height="3" fill="#303030"/><rect x="479.2" y="357.5" width="0.7" height="3" fill="#303030"/><rect x="489.4" y="357.5" width="0.7" height="3" fill="#303030"/><rect x="499.6" y="357.5" width="0.7" height="3" fill="#303030"/><rect x="509.8" y="357.5" width="0.7" height="3" fill="#303030"/><rect x="109.4" y="267" width="1.9" height="91" fill="#118C8C"/><rect x="115.5" y="267" width="1.9" height="91" fill="#118C8C"/><rect x="174.1" y="267" width="1.9" height="91" fill="#118C8C"/><rect x="197.1" y="267" width="1.9" height="91" fill="#118C8C"/><rect x="226.0" y="267" width="1.9" height="91" fill="#118C8C"/><rect x="256.1" y="267" width="1.9" height="91" fill="#118C8C"/><rect x="285.1" y="267" width="1.9" height="91" fill="#118C8C"/><rect x="291.3" y="267" width="1.9" height="91" fill="#118C8C"/><rect x="330.1" y="267" width="1.9" height="91" fill="#118C8C"/><rect x="339.1" y="267" width="1.9" height="91" fill="#118C8C"/><rect x="372.0" y="267" width="1.9" height="91" fill="#118C8C"/><rect x="380.3" y="267" width="1.9" height="91" fill="#118C8C"/><rect x="428.8" y="267" width="1.9" height="91" fill="#118C8C"/><rect x="437.7" y="267" width="1.9" height="91" fill="#118C8C"/><rect x="471.1" y="267" width="1.9" height="91" fill="#118C8C"/><rect x="478.3" y="267" width="1.9" height="91" fill="#118C8C"/><rect x="90" y="309.5" width="19" height="2" fill="#38C8D8"/><rect x="110" y="311.3" width="399" height="1.4" fill="#18A0A8"/><polyline points="110.9,310.9 111.4,310.8 111.9,308.5 112.4,312.1 112.9,312.1 113.4,310.6 113.9,313.9 114.4,313.5 114.9,314.1 115.4,311.7 115.9,311.6 116.4,312.3 116.9,313.1 117.4,313.9 117.9,310.6 118.4,311.7 118.9,309.2 119.4,311.6 119.9,313.1 120.4,312.8 120.9,315.0 121.4,312.8 121.9,313.1 122.4,310.9 122.9,312.3 123.4,314.0 123.9,310.3 124.4,310.8 124.9,312.0 125.4,312.6 125.9,313.1 126.4,313.2 126.9,312.0 127.4,318.3 127.9,312.2 128.4,313.7 128.9,322.9 129.4,309.6 129.9,300.9 130.4,311.5 130.9,326.6 131.4,312.6 131.9,310.9 132.4,312.1 132.9,309.6 133.4,297.0 133.9,305.7 134.4,310.3 134.9,311.3 135.4,305.4 135.9,317.2 136.4,310.8 136.9,299.7 137.4,311.4 137.9,311.5 138.4,295.7 138.9,311.1 139.4,311.6 139.9,315.6 140.4,311.3 140.9,314.7 141.4,309.0 141.9,312.7 142.4,310.9 142.9,329.8 143.4,318.2 143.9,312.2 144.4,310.8 144.9,309.0 145.4,313.7 145.9,310.3 146.4,325.6 146.9,313.4 147.4,331.6 147.9,311.9 148.4,309.2 148.9,298.8 149.4,313.2 149.9,314.2 150.4,317.2 150.9,310.1 151.4,308.6 151.9,310.1 152.4,331.0 152.9,301.2 153.4,311.1 153.9,303.0 154.4,310.6 154.9,316.7 155.4,313.4 155.9,313.4 156.4,317.2 156.9,311.4 157.4,308.2 157.9,312.2 158.4,321.2 158.9,312.3 159.4,304.8 159.9,312.5 160.4,307.9 160.9,313.0 161.4,321.0 161.9,312.1 162.4,312.0 162.9,303.2 163.4,312.7 163.9,301.4 164.4,312.2 164.9,311.6 165.4,321.5 165.9,310.4 166.4,307.5 166.9,310.8 167.4,309.8 167.9,310.7 168.4,306.9 168.9,310.6 169.4,310.7 169.9,312.9 170.4,311.1 170.9,311.0 171.4,313.4 171.9,311.9 172.4,311.9 172.9,312.7 173.4,311.0 173.9,310.3 174.4,311.8 174.9,313.1 175.4,312.9 175.9,310.6 176.4,311.3 176.9,312.4 177.4,311.2 177.9,310.1 178.4,312.2 178.9,311.4 179.4,312.3 179.9,313.0 180.4,311.3 180.9,310.4 181.4,310.9 181.9,312.9 182.4,312.1 182.9,312.9 183.4,311.5 183.9,312.9 184.4,311.3 184.9,311.1 185.4,311.9 185.9,311.8 186.4,311.6 186.9,312.0 187.4,313.2 187.9,311.0 188.4,309.6 188.9,312.5 189.4,314.4 189.9,313.3 190.4,310.4 190.9,312.5 191.4,313.4 191.9,313.1 192.4,314.3 192.9,313.1 193.4,308.3 193.9,312.7 194.4,310.9 194.9,310.7 195.4,309.7 195.9,310.2 196.4,311.4 196.9,313.4 197.4,313.4 197.9,312.8 198.4,313.6 198.9,311.4 199.4,310.8 199.9,314.5 200.4,309.5 200.9,311.5 201.4,312.9 201.9,309.8 202.4,314.0 202.9,316.2 203.4,311.2 203.9,310.3 204.4,311.7 204.9,314.9 205.4,321.1 205.9,312.8 206.4,312.0 206.9,310.1 207.4,311.3 207.9,313.2 208.4,324.0 208.9,298.0 209.4,311.7 209.9,311.7 210.4,312.4 210.9,307.2 211.4,306.5 211.9,310.2 212.4,309.9 212.9,310.1 213.4,313.7 213.9,313.3 214.4,340.0 214.9,311.7 215.4,311.6 215.9,310.7 216.4,311.7 216.9,295.2 217.4,310.4 217.9,314.4 218.4,311.8 218.9,301.8 219.4,311.6 219.9,299.4 220.4,315.6 220.9,312.8 221.4,313.2 221.9,315.6 222.4,310.2 222.9,309.2 223.4,311.6 223.9,312.2 224.4,313.1 224.9,310.1 225.4,310.0 225.9,311.3 226.4,313.5 226.9,311.7 227.4,312.1 227.9,311.1 228.4,311.1 228.9,312.1 229.4,312.8 229.9,313.0 230.4,311.1 230.9,310.4 231.4,312.6 231.9,313.7 232.4,311.4 232.9,311.5 233.4,311.5 233.9,318.6 234.4,313.3 234.9,310.8 235.4,312.6 235.9,313.9 236.4,312.8 236.9,311.0 237.4,310.1 237.9,312.1 238.4,313.8 238.9,313.1 239.4,313.9 239.9,311.6 240.4,312.1 240.9,311.0 241.4,312.8 241.9,311.8 242.4,311.0 242.9,311.6 243.4,312.8 243.9,313.2 244.4,313.1 244.9,315.1 245.4,313.1 245.9,310.9 246.4,313.5 246.9,311.0 247.4,310.7 247.9,313.0 248.4,311.3 248.9,312.1 249.4,311.4 249.9,311.9 250.4,309.8 250.9,313.3 251.4,313.7 251.9,311.8 252.4,313.7 252.9,313.2 253.4,313.7 253.9,314.0 254.4,310.5 254.9,313.2 255.4,311.9 255.9,313.1 256.4,311.8 256.9,314.8 257.4,314.3 257.9,312.1 258.4,312.7 258.9,312.4 259.4,312.5 259.9,313.3 260.4,310.9 260.9,314.2 261.4,313.6 261.9,309.5 262.4,311.5 262.9,313.7 263.4,310.2 263.9,311.8 264.4,315.7 264.9,312.3 265.4,326.2 265.9,301.1 266.4,295.8 266.9,313.1 267.4,314.3 267.9,311.1 268.4,311.2 268.9,314.8 269.4,337.9 269.9,312.1 270.4,313.0 270.9,310.1 271.4,315.8 271.9,311.7 272.4,312.2 272.9,309.0 273.4,313.3 273.9,328.9 274.4,313.0 274.9,311.5 275.4,325.4 275.9,314.7 276.4,342.0 276.9,304.1 277.4,313.8 277.9,312.6 278.4,311.3 278.9,315.1 279.4,323.7 279.9,311.8 280.4,313.6 280.9,312.2 281.4,316.8 281.9,310.6 282.4,312.1 282.9,311.1 283.4,310.4 283.9,313.8 284.4,310.1 284.9,310.6 285.4,311.5 285.9,313.2 286.4,309.7 286.9,312.4 287.4,313.6 287.9,312.6 288.4,311.2 288.9,310.8 289.4,311.6 289.9,312.5 290.4,311.6 290.9,311.7 291.4,311.3 291.9,311.0 292.4,310.4 292.9,311.0 293.4,314.3 293.9,313.4 294.4,313.8 294.9,311.5 295.4,311.8 295.9,313.1 296.4,311.5 296.9,308.7 297.4,312.2 297.9,313.0 298.4,314.9 298.9,305.5 299.4,312.3 299.9,316.4 300.4,311.2 300.9,301.6 301.4,312.9 301.9,305.6 302.4,313.6 302.9,311.2 303.4,311.0 303.9,311.2 304.4,307.7 304.9,312.1 305.4,313.2 305.9,298.7 306.4,330.8 306.9,312.4 307.4,313.0 307.9,294.6 308.4,312.0 308.9,311.1 309.4,308.4 309.9,313.4 310.4,313.6 310.9,332.2 311.4,311.8 311.9,311.9 312.4,332.6 312.9,311.5 313.4,310.6 313.9,296.5 314.4,310.8 314.9,300.5 315.4,309.4 315.9,317.1 316.4,299.6 316.9,311.2 317.4,309.8 317.9,300.1 318.4,310.4 318.9,313.4 319.4,312.1 319.9,310.9 320.4,309.0 320.9,313.0 321.4,312.0 321.9,326.3 322.4,312.5 322.9,300.2 323.4,313.4 323.9,314.1 324.4,311.2 324.9,312.1 325.4,306.0 325.9,310.6 326.4,310.9 326.9,305.4 327.4,311.2 327.9,313.9 328.4,310.9 328.9,311.2 329.4,310.0 329.9,311.1 330.4,309.8 330.9,313.1 331.4,311.8 331.9,313.2 332.4,313.7 332.9,312.6 333.4,312.4 333.9,312.1 334.4,311.4 334.9,309.2 335.4,312.2 335.9,311.1 336.4,310.7 336.9,311.2 337.4,311.9 337.9,312.9 338.4,310.7 338.9,310.3 339.4,313.4 339.9,312.7 340.4,313.0 340.9,311.6 341.4,310.2 341.9,313.7 342.4,313.6 342.9,311.2 343.4,312.5 343.9,313.4 344.4,312.8 344.9,313.5 345.4,305.9 345.9,311.7 346.4,311.4 346.9,310.3 347.4,311.1 347.9,306.7 348.4,312.2 348.9,320.4 349.4,310.7 349.9,305.3 350.4,311.6 350.9,312.5 351.4,309.6 351.9,312.9 352.4,311.9 352.9,314.5 353.4,320.5 353.9,314.6 354.4,315.8 354.9,326.7 355.4,314.7 355.9,313.5 356.4,320.7 356.9,311.3 357.4,309.6 357.9,312.5 358.4,313.2 358.9,312.6 359.4,325.4 359.9,311.8 360.4,334.4 360.9,311.2 361.4,312.1 361.9,301.9 362.4,317.7 362.9,311.8 363.4,311.7 363.9,305.5 364.4,311.6 364.9,309.3 365.4,312.2 365.9,313.1 366.4,309.4 366.9,312.1 367.4,311.5 367.9,301.9 368.4,314.7 368.9,309.7 369.4,313.2 369.9,313.1 370.4,311.0 370.9,311.5 371.4,311.4 371.9,312.9 372.4,312.0 372.9,312.9 373.4,311.9 373.9,313.8 374.4,312.8 374.9,311.7 375.4,315.2 375.9,311.3 376.4,309.3 376.9,312.3 377.4,312.7 377.9,312.9 378.4,311.4 378.9,312.1 379.4,311.0 379.9,311.6 380.4,313.0 380.9,311.4 381.4,313.0 381.9,311.8 382.4,312.2 382.9,311.7 383.4,313.6 383.9,312.3 384.4,311.2 384.9,312.3 385.4,309.5 385.9,312.4 386.4,313.4 386.9,311.1 387.4,310.8 387.9,315.8 388.4,312.3 388.9,304.3 389.4,313.2 389.9,311.7 390.4,323.6 390.9,315.0 391.4,312.5 391.9,303.5 392.4,311.9 392.9,314.7 393.4,298.3 393.9,312.3 394.4,310.4 394.9,307.3 395.4,308.7 395.9,311.7 396.4,313.8 396.9,329.2 397.4,312.3 397.9,312.8 398.4,304.0 398.9,311.4 399.4,310.5 399.9,292.9 400.4,313.2 400.9,312.2 401.4,306.0 401.9,312.1 402.4,289.8 402.9,312.8 403.4,296.4 403.9,311.8 404.4,295.9 404.9,286.8 405.4,311.4 405.9,311.0 406.4,330.9 406.9,312.1 407.4,311.8 407.9,335.0 408.4,310.7 408.9,296.9 409.4,311.6 409.9,313.5 410.4,307.9 410.9,313.1 411.4,312.2 411.9,317.1 412.4,309.8 412.9,313.8 413.4,305.6 413.9,312.1 414.4,313.2 414.9,306.0 415.4,313.9 415.9,314.8 416.4,312.8 416.9,290.0 417.4,311.3 417.9,308.2 418.4,312.7 418.9,315.9 419.4,302.7 419.9,313.2 420.4,299.6 420.9,310.2 421.4,306.5 421.9,311.5 422.4,315.0 422.9,311.8 423.4,314.0 423.9,306.0 424.4,312.7 424.9,309.9 425.4,313.5 425.9,310.2 426.4,309.8 426.9,312.5 427.4,314.9 427.9,310.4 428.4,311.9 428.9,309.3 429.4,312.0 429.9,312.3 430.4,311.1 430.9,311.4 431.4,313.5 431.9,311.7 432.4,312.1 432.9,314.6 433.4,312.5 433.9,313.3 434.4,312.7 434.9,312.8 435.4,313.6 435.9,311.8 436.4,313.1 436.9,311.5 437.4,311.6 437.9,312.9 438.4,311.3 438.9,308.7 439.4,311.8 439.9,313.7 440.4,310.8 440.9,312.8 441.4,311.6 441.9,310.1 442.4,312.7 442.9,309.1 443.4,313.6 443.9,321.3 444.4,320.4 444.9,312.0 445.4,304.9 445.9,308.7 446.4,313.5 446.9,313.0 447.4,313.5 447.9,311.1 448.4,311.9 448.9,306.7 449.4,312.3 449.9,303.3 450.4,311.0 450.9,295.5 451.4,306.8 451.9,311.1 452.4,312.2 452.9,299.9 453.4,327.8 453.9,313.4 454.4,318.1 454.9,309.8 455.4,306.0 455.9,311.0 456.4,304.9 456.9,313.2 457.4,298.4 457.9,312.6 458.4,310.1 458.9,314.5 459.4,314.7 459.9,321.6 460.4,313.7 460.9,311.1 461.4,306.4 461.9,310.9 462.4,311.0 462.9,303.1 463.4,342.0 463.9,305.1 464.4,310.3 464.9,314.9 465.4,310.8 465.9,312.1 466.4,309.9 466.9,314.1 467.4,309.5 467.9,313.1 468.4,316.7 468.9,311.1 469.4,312.6 469.9,313.2 470.4,312.3 470.9,313.4 471.4,312.9 471.9,311.2 472.4,310.5 472.9,312.9 473.4,312.4 473.9,311.3 474.4,311.9 474.9,313.2 475.4,313.2 475.9,311.2 476.4,310.3 476.9,309.5 477.4,311.4 477.9,311.6 478.4,310.3 478.9,313.4 479.4,314.4 479.9,311.0 480.4,312.9 480.9,311.9 481.4,312.7 481.9,312.2 482.4,311.9 482.9,307.7 483.4,312.9 483.9,311.5 484.4,311.5 484.9,311.2 485.4,311.0 485.9,312.8 486.4,313.4 486.9,310.0 487.4,312.8 487.9,314.1 488.4,310.1 488.9,312.9 489.4,310.1 489.9,310.6 490.4,324.7 490.9,312.4 491.4,309.4 491.9,313.5 492.4,311.2 492.9,310.5 493.4,308.4 493.9,311.2 494.4,313.3 494.9,312.3 495.4,304.3 495.9,313.2 496.4,312.3 496.9,317.4 497.4,309.7 497.9,312.6 498.4,325.3 498.9,312.7 499.4,316.6 499.9,311.3 500.4,311.9 500.9,322.2 501.4,308.3 501.9,308.2 502.4,313.6 502.9,309.3 503.4,312.1 503.9,323.4 504.4,319.6 504.9,310.7 505.4,305.0 505.9,323.5 506.4,313.1 506.9,311.0 507.4,304.5 507.9,312.5 508.4,310.7" fill="none" stroke="#A8A828" stroke-width="0.8"/><polyline points="110.6,313.1 111.1,311.8 111.6,312.2 112.1,311.4 112.6,308.6 113.1,312.4 113.6,312.6 114.1,312.7 114.6,314.1 115.1,313.1 115.6,312.6 116.1,311.2 116.6,315.6 117.1,310.3 117.6,311.5 118.1,311.4 118.6,313.3 119.1,312.4 119.6,312.7 120.1,309.8 120.6,315.4 121.1,313.3 121.6,311.6 122.1,310.4 122.6,312.3 123.1,310.9 123.6,312.0 124.1,312.7 124.6,310.8 125.1,312.0 125.6,310.5 126.1,311.7 126.6,311.7 127.1,311.3 127.6,314.1 128.1,312.7 128.6,310.9 129.1,312.2 129.6,316.2 130.1,310.0 130.6,313.3 131.1,313.6 131.6,310.1 132.1,309.9 132.6,311.3 133.1,305.4 133.6,311.2 134.1,312.1 134.6,312.2 135.1,306.1 135.6,314.5 136.1,302.6 136.6,310.5 137.1,312.4 137.6,298.3 138.1,310.6 138.6,312.2 139.1,298.6 139.6,310.3 140.1,310.9 140.6,318.0 141.1,311.8 141.6,309.9 142.1,312.9 142.6,329.4 143.1,308.3 143.6,310.6 144.1,309.0 144.6,309.0 145.1,315.5 145.6,315.7 146.1,312.3 146.6,310.9 147.1,310.5 147.6,304.9 148.1,312.3 148.6,313.6 149.1,310.2 149.6,313.6 150.1,319.5 150.6,309.3 151.1,312.4 151.6,313.3 152.1,322.8 152.6,313.4 153.1,316.3 153.6,311.7 154.1,312.0 154.6,312.5 155.1,323.6 155.6,313.3 156.1,300.2 156.6,310.7 157.1,321.5 157.6,311.8 158.1,321.5 158.6,310.8 159.1,313.1 159.6,314.2 160.1,313.3 160.6,313.0 161.1,315.4 161.6,311.4 162.1,311.5 162.6,312.4 163.1,323.5 163.6,312.3 164.1,309.5 164.6,314.4 165.1,319.2 165.6,311.2 166.1,312.0 166.6,319.6 167.1,314.0 167.6,313.4 168.1,312.1 168.6,304.7 169.1,312.8 169.6,311.3 170.1,312.0 170.6,314.1 171.1,310.1 171.6,308.5 172.1,311.1 172.6,310.0 173.1,310.8 173.6,314.3 174.1,312.1 174.6,312.9 175.1,311.3 175.6,313.7 176.1,312.2 176.6,313.1 177.1,313.4 177.6,312.6 178.1,314.5 178.6,310.9 179.1,311.6 179.6,312.7 180.1,311.9 180.6,312.6 181.1,314.8 181.6,311.7 182.1,312.4 182.6,311.4 183.1,311.0 183.6,309.6 184.1,312.6 184.6,313.8 185.1,312.1 185.6,313.6 186.1,310.3 186.6,311.8 187.1,311.8 187.6,313.0 188.1,312.1 188.6,312.7 189.1,313.9 189.6,310.6 190.1,311.9 190.6,312.5 191.1,311.2 191.6,312.5 192.1,309.8 192.6,310.7 193.1,311.7 193.6,309.7 194.1,314.8 194.6,314.4 195.1,313.6 195.6,313.1 196.1,313.2 196.6,311.7 197.1,311.7 197.6,309.4 198.1,313.2 198.6,311.8 199.1,309.5 199.6,309.7 200.1,312.6 200.6,309.9 201.1,311.3 201.6,310.8 202.1,311.4 202.6,311.9 203.1,320.5 203.6,311.0 204.1,312.5 204.6,305.6 205.1,313.9 205.6,302.4 206.1,313.4 206.6,323.0 207.1,310.8 207.6,312.4 208.1,322.7 208.6,311.3 209.1,311.7 209.6,309.4 210.1,311.4 210.6,294.3 211.1,313.8 211.6,312.7 212.1,313.1 212.6,331.0 213.1,312.6 213.6,313.2 214.1,310.8 214.6,306.4 215.1,312.8 215.6,313.3 216.1,312.6 216.6,324.7 217.1,311.4 217.6,306.5 218.1,308.8 218.6,316.7 219.1,311.2 219.6,311.3 220.1,310.7 220.6,302.3 221.1,311.6 221.6,308.2 222.1,313.6 222.6,303.6 223.1,311.9 223.6,313.0 224.1,311.9 224.6,313.0 225.1,313.4 225.6,313.2 226.1,311.7 226.6,310.3 227.1,311.2 227.6,312.7 228.1,309.9 228.6,311.6 229.1,311.9 229.6,310.1 230.1,313.5 230.6,311.7 231.1,310.0 231.6,310.7 232.1,312.5 232.6,313.7 233.1,312.3 233.6,312.2 234.1,311.7 234.6,314.0 235.1,313.6 235.6,310.0 236.1,312.0 236.6,312.7 237.1,311.7 237.6,312.6 238.1,312.8 238.6,310.8 239.1,313.6 239.6,312.2 240.1,313.3 240.6,312.3 241.1,311.9 241.6,313.7 242.1,312.5 242.6,314.0 243.1,312.8 243.6,314.8 244.1,311.0 244.6,312.1 245.1,311.0 245.6,310.6 246.1,312.2 246.6,310.1 247.1,311.9 247.6,313.6 248.1,312.7 248.6,311.3 249.1,311.7 249.6,312.9 250.1,314.0 250.6,311.7 251.1,312.2 251.6,312.6 252.1,311.8 252.6,312.4 253.1,312.3 253.6,313.7 254.1,311.2 254.6,312.1 255.1,312.4 255.6,311.1 256.1,311.6 256.6,312.0 257.1,310.2 257.6,311.4 258.1,310.6 258.6,311.3 259.1,311.1 259.6,311.4 260.1,312.9 260.6,309.3 261.1,313.0 261.6,311.0 262.1,321.3 262.6,310.4 263.1,312.7 263.6,294.1 264.1,311.5 264.6,312.0 265.1,316.9 265.6,312.9 266.1,311.3 266.6,311.1 267.1,314.8 267.6,311.5 268.1,314.5 268.6,312.0 269.1,312.7 269.6,327.6 270.1,311.0 270.6,316.5 271.1,310.0 271.6,311.7 272.1,345.3 272.6,312.4 273.1,312.8 273.6,292.2 274.1,311.6 274.6,302.7 275.1,312.2 275.6,309.8 276.1,309.7 276.6,317.8 277.1,311.0 277.6,312.1 278.1,299.0 278.6,312.2 279.1,317.9 279.6,311.1 280.1,312.4 280.6,303.8 281.1,310.7 281.6,312.7 282.1,311.4 282.6,309.3 283.1,313.1 283.6,316.0 284.1,312.5 284.6,312.1 285.1,311.9 285.6,312.8 286.1,312.7 286.6,309.7 287.1,311.0 287.6,312.1 288.1,311.8 288.6,313.0 289.1,313.2 289.6,312.1 290.1,311.5 290.6,314.1 291.1,310.9 291.6,311.8 292.1,314.5 292.6,312.7 293.1,312.7 293.6,311.9 294.1,313.5 294.6,315.6 295.1,312.4 295.6,311.7 296.1,313.4 296.6,310.1 297.1,312.4 297.6,310.9 298.1,312.4 298.6,321.7 299.1,313.2 299.6,311.7 300.1,312.6 300.6,300.7 301.1,309.7 301.6,309.5 302.1,307.3 302.6,312.2 303.1,297.8 303.6,310.2 304.1,313.7 304.6,311.2 305.1,306.7 305.6,311.3 306.1,318.9 306.6,311.4 307.1,310.0 307.6,311.2 308.1,313.6 308.6,316.7 309.1,312.1 309.6,309.8 310.1,290.2 310.6,310.3 311.1,304.5 311.6,311.8 312.1,312.7 312.6,316.4 313.1,311.9 313.6,312.7 314.1,312.0 314.6,315.0 315.1,312.5 315.6,313.3 316.1,314.9 316.6,313.6 317.1,309.9 317.6,315.2 318.1,313.3 318.6,312.4 319.1,312.9 319.6,317.8 320.1,311.7 320.6,310.5 321.1,307.7 321.6,312.8 322.1,311.3 322.6,311.2 323.1,310.4 323.6,313.2 324.1,310.7 324.6,319.7 325.1,311.1 325.6,313.7 326.1,313.3 326.6,316.9 327.1,311.1 327.6,310.8 328.1,311.7 328.6,310.3 329.1,311.4 329.6,312.9 330.1,312.1 330.6,313.1 331.1,311.1 331.6,311.4 332.1,311.8 332.6,313.1 333.1,313.4 333.6,313.5 334.1,312.2 334.6,311.1 335.1,311.5 335.6,312.0 336.1,310.1 336.6,310.8 337.1,309.8 337.6,312.4 338.1,312.3 338.6,310.9 339.1,313.2 339.6,312.1 340.1,311.9 340.6,312.9 341.1,312.4 341.6,310.7 342.1,311.2 342.6,307.7 343.1,312.8 343.6,311.9 344.1,313.2 344.6,306.4 345.1,310.5 345.6,313.4 346.1,313.1 346.6,296.1 347.1,313.3 347.6,311.1 348.1,313.9 348.6,314.5 349.1,311.2 349.6,294.4 350.1,311.8 350.6,319.6 351.1,312.9 351.6,327.5 352.1,313.0 352.6,329.0 353.1,312.9 353.6,312.0 354.1,310.6 354.6,332.3 355.1,313.1 355.6,310.8 356.1,311.0 356.6,302.8 357.1,314.3 357.6,312.7 358.1,323.7 358.6,314.3 359.1,319.7 359.6,313.7 360.1,312.9 360.6,311.9 361.1,329.0 361.6,311.3 362.1,312.0 362.6,323.8 363.1,311.9 363.6,305.3 364.1,313.7 364.6,313.3 365.1,312.1 365.6,313.6 366.1,314.9 366.6,314.3 367.1,311.9 367.6,311.1 368.1,315.2 368.6,310.8 369.1,312.2 369.6,311.3 370.1,311.4 370.6,316.1 371.1,311.3 371.6,314.1 372.1,311.8 372.6,310.8 373.1,311.2 373.6,311.0 374.1,311.9 374.6,310.9 375.1,313.5 375.6,311.0 376.1,311.7 376.6,313.8 377.1,312.0 377.6,313.6 378.1,311.8 378.6,313.0 379.1,314.7 379.6,310.8 380.1,312.7 380.6,310.6 381.1,312.0 381.6,311.2 382.1,312.2 382.6,310.5 383.1,309.3 383.6,313.0 384.1,312.1 384.6,313.6 385.1,312.3 385.6,313.7 386.1,310.9 386.6,310.3 387.1,312.2 387.6,319.0 388.1,313.8 388.6,313.8 389.1,315.6 389.6,313.5 390.1,325.7 390.6,311.3 391.1,315.1 391.6,315.6 392.1,313.6 392.6,311.0 393.1,312.5 393.6,310.8 394.1,309.9 394.6,304.1 395.1,311.1 395.6,311.5 396.1,316.0 396.6,311.0 397.1,303.2 397.6,310.7 398.1,310.7 398.6,312.5 399.1,311.3 399.6,296.6 400.1,310.5 400.6,311.0 401.1,299.1 401.6,312.2 402.1,312.5 402.6,310.3 403.1,287.9 403.6,311.5 404.1,313.0 404.6,320.2 405.1,311.5 405.6,308.3 406.1,310.7 406.6,300.3 407.1,316.2 407.6,313.4 408.1,312.4 408.6,304.9 409.1,310.0 409.6,303.8 410.1,313.0 410.6,312.0 411.1,313.4 411.6,317.0 412.1,312.7 412.6,312.1 413.1,312.7 413.6,318.9 414.1,313.4 414.6,311.3 415.1,303.9 415.6,311.1 416.1,312.0 416.6,303.1 417.1,312.1 417.6,315.3 418.1,311.1 418.6,311.3 419.1,311.6 419.6,310.9 420.1,311.5 420.6,313.2 421.1,312.8 421.6,315.2 422.1,306.2 422.6,310.7 423.1,310.4 423.6,307.8 424.1,312.9 424.6,311.3 425.1,310.8 425.6,312.3 426.1,313.7 426.6,313.9 427.1,311.2 427.6,313.2 428.1,311.8 428.6,314.1 429.1,315.3 429.6,312.7 430.1,312.8 430.6,308.7 431.1,312.7 431.6,309.8 432.1,311.2 432.6,313.1 433.1,310.0 433.6,315.0 434.1,311.3 434.6,313.0 435.1,311.3 435.6,312.9 436.1,311.3 436.6,311.9 437.1,309.0 437.6,313.2 438.1,310.9 438.6,311.6 439.1,311.6 439.6,310.6 440.1,311.0 440.6,312.3 441.1,312.4 441.6,308.4 442.1,313.5 442.6,313.3 443.1,313.4 443.6,312.4 444.1,311.7 444.6,310.4 445.1,311.1 445.6,311.0 446.1,309.4 446.6,310.2 447.1,306.5 447.6,310.0 448.1,310.9 448.6,331.5 449.1,309.9 449.6,313.3 450.1,311.2 450.6,317.3 451.1,310.1 451.6,312.8 452.1,288.3 452.6,312.0 453.1,299.1 453.6,310.2 454.1,309.2 454.6,312.2 455.1,313.8 455.6,318.2 456.1,313.8 456.6,313.5 457.1,312.5 457.6,307.4 458.1,312.2 458.6,320.4 459.1,312.7 459.6,305.7 460.1,312.5 460.6,305.7 461.1,313.1 461.6,311.7 462.1,309.3 462.6,312.5 463.1,316.1 463.6,309.7 464.1,309.3 464.6,307.6 465.1,311.5 465.6,314.5 466.1,317.9 466.6,310.8 467.1,313.1 467.6,309.7 468.1,312.1 468.6,309.5 469.1,308.4 469.6,309.7 470.1,310.0 470.6,312.0 471.1,311.6 471.6,310.8 472.1,312.0 472.6,312.3 473.1,312.0 473.6,314.1 474.1,313.2 474.6,310.8 475.1,311.1 475.6,310.7 476.1,312.1 476.6,313.3 477.1,314.0 477.6,312.2 478.1,311.2 478.6,310.6 479.1,309.8 479.6,314.2 480.1,311.5 480.6,311.3 481.1,314.3 481.6,311.1 482.1,311.8 482.6,312.5 483.1,309.6 483.6,310.5 484.1,316.2 484.6,312.5 485.1,309.6 485.6,311.2 486.1,314.9 486.6,312.8 487.1,311.9 487.6,310.5 488.1,312.0 488.6,307.1 489.1,311.2 489.6,310.5 490.1,319.0 490.6,309.0 491.1,313.6 491.6,312.4 492.1,296.4 492.6,312.2 493.1,307.4 493.6,311.5 494.1,310.3 494.6,317.8 495.1,309.0 495.6,308.5 496.1,313.5 496.6,314.0 497.1,311.9 497.6,301.7 498.1,311.8 498.6,313.5 499.1,311.9 499.6,313.8 500.1,317.6 500.6,314.2 501.1,312.7 501.6,307.4 502.1,311.7 502.6,314.8 503.1,320.6 503.6,313.3 504.1,310.8 504.6,312.7 505.1,306.8 505.6,311.4 506.1,310.9 506.6,311.0 507.1,316.6 507.6,313.8 508.1,312.5" fill="none" stroke="#ECEC3C" stroke-width="0.7"/><polyline points="110.6,312.6 112.6,312.5 114.6,311.4 116.6,312.1 118.6,312.3 120.6,309.5 122.6,309.0 124.6,310.1 126.6,308.8 128.6,306.3 130.6,306.8 132.6,306.9 134.6,303.8 136.6,304.0 138.6,302.2 140.6,302.5 142.6,303.0 144.6,303.6 146.6,304.6 148.6,303.1 150.6,303.6 152.6,304.0 154.6,302.3 156.6,302.7 158.6,303.7 160.6,306.8 162.6,305.5 164.6,304.1 166.6,306.2 168.6,307.3 170.6,309.3 172.6,312.0 174.6,311.7 176.6,311.0 178.6,311.3 180.6,312.3 182.6,311.7 184.6,311.3 186.6,311.5 188.6,311.5 190.6,312.1 192.6,311.0 194.6,312.6 196.6,312.6 198.6,312.0 200.6,310.6 202.6,306.7 204.6,305.5 206.6,302.8 208.6,302.3 210.6,302.0 212.6,301.4 214.6,302.7 216.6,302.7 218.6,303.0 220.6,304.4 222.6,306.4 224.6,309.1 226.6,311.5 228.6,312.6 230.6,311.1 232.6,311.5 234.6,311.8 236.6,311.7 238.6,312.6 240.6,311.7 242.6,312.3 244.6,311.6 246.6,312.5 248.6,312.4 250.6,312.0 252.6,311.1 254.6,311.5 256.6,312.3 258.6,309.4 260.6,308.6 262.6,306.1 264.6,303.0 266.6,305.9 268.6,303.7 270.6,301.2 272.6,300.3 274.6,296.7 276.6,302.5 278.6,301.3 280.6,306.2 282.6,307.7 284.6,308.9 286.6,312.6 288.6,312.6 290.6,312.1 292.6,312.6 294.6,309.3 296.6,307.2 298.6,305.9 300.6,304.2 302.6,304.7 304.6,304.6 306.6,303.7 308.6,300.3 310.6,302.6 312.6,300.7 314.6,304.5 316.6,306.9 318.6,306.0 320.6,307.7 322.6,305.9 324.6,307.3 326.6,307.0 328.6,308.9 330.6,311.6 332.6,310.9 334.6,311.7 336.6,312.6 338.6,311.0 340.6,311.4 342.6,309.5 344.6,307.3 346.6,305.5 348.6,302.8 350.6,301.2 352.6,300.3 354.6,302.9 356.6,300.6 358.6,303.4 360.6,299.6 362.6,303.3 364.6,306.4 366.6,309.2 368.6,307.6 370.6,308.2 372.6,311.8 374.6,311.9 376.6,312.1 378.6,310.6 380.6,312.0 382.6,312.4 384.6,309.0 386.6,308.3 388.6,305.1 390.6,304.6 392.6,302.6 394.6,305.7 396.6,304.6 398.6,302.1 400.6,302.5 402.6,298.3 404.6,296.2 406.6,298.3 408.6,301.9 410.6,306.4 412.6,307.2 414.6,304.3 416.6,303.8 418.6,305.8 420.6,306.8 422.6,306.8 424.6,308.1 426.6,309.5 428.6,312.6 430.6,311.9 432.6,312.6 434.6,312.2 436.6,311.6 438.6,312.6 440.6,309.2 442.6,307.9 444.6,307.4 446.6,303.6 448.6,304.6 450.6,299.8 452.6,300.8 454.6,300.1 456.6,304.5 458.6,303.5 460.6,305.4 462.6,304.2 464.6,303.3 466.6,306.5 468.6,307.8 470.6,312.5 472.6,312.2 474.6,312.0 476.6,311.9 478.6,311.2 480.6,311.9 482.6,310.5 484.6,309.6 486.6,309.0 488.6,305.8 490.6,306.9 492.6,304.7 494.6,306.0 496.6,304.7 498.6,306.2 500.6,305.9 502.6,304.7 504.6,305.5 506.6,306.0" fill="none" stroke="#E83018" stroke-width="0.9"/><polygon points="305.5,363.5 312.5,363.5 309,358.5" fill="#10E010"/><rect x="90" y="364" width="20" height="96.60000000000002" fill="#A2A2A2"/><rect x="110" y="364" width="399" height="96.60000000000002" fill="#000"/><rect x="90" y="363.4" width="20" height="1.2" fill="#5A5A5A"/><rect x="112.0" y="454.1" width="0.7" height="3" fill="#303030"/><rect x="122.2" y="454.1" width="0.7" height="3" fill="#303030"/><rect x="132.4" y="454.1" width="0.7" height="3" fill="#303030"/><rect x="142.6" y="454.1" width="0.7" height="3" fill="#303030"/><rect x="152.8" y="454.1" width="0.7" height="3" fill="#303030"/><rect x="163.0" y="454.1" width="0.7" height="3" fill="#303030"/><rect x="173.2" y="454.1" width="0.7" height="3" fill="#303030"/><rect x="183.4" y="454.1" width="0.7" height="3" fill="#303030"/><rect x="193.6" y="454.1" width="0.7" height="3" fill="#303030"/><rect x="203.8" y="454.1" width="0.7" height="3" fill="#303030"/><rect x="214.0" y="454.1" width="0.7" height="3" fill="#303030"/><rect x="224.2" y="454.1" width="0.7" height="3" fill="#303030"/><rect x="234.4" y="454.1" width="0.7" height="3" fill="#303030"/><rect x="244.6" y="454.1" width="0.7" height="3" fill="#303030"/><rect x="254.8" y="454.1" width="0.7" height="3" fill="#303030"/><rect x="265.0" y="454.1" width="0.7" height="3" fill="#303030"/><rect x="275.2" y="454.1" width="0.7" height="3" fill="#303030"/><rect x="285.4" y="454.1" width="0.7" height="3" fill="#303030"/><rect x="295.6" y="454.1" width="0.7" height="3" fill="#303030"/><rect x="305.8" y="454.1" width="0.7" height="3" fill="#303030"/><rect x="316.0" y="454.1" width="0.7" height="3" fill="#303030"/><rect x="326.2" y="454.1" width="0.7" height="3" fill="#303030"/><rect x="336.4" y="454.1" width="0.7" height="3" fill="#303030"/><rect x="346.6" y="454.1" width="0.7" height="3" fill="#303030"/><rect x="356.8" y="454.1" width="0.7" height="3" fill="#303030"/><rect x="367.0" y="454.1" width="0.7" height="3" fill="#303030"/><rect x="377.2" y="454.1" width="0.7" height="3" fill="#303030"/><rect x="387.4" y="454.1" width="0.7" height="3" fill="#303030"/><rect x="397.6" y="454.1" width="0.7" height="3" fill="#303030"/><rect x="407.8" y="454.1" width="0.7" height="3" fill="#303030"/><rect x="418.0" y="454.1" width="0.7" height="3" fill="#303030"/><rect x="428.2" y="454.1" width="0.7" height="3" fill="#303030"/><rect x="438.4" y="454.1" width="0.7" height="3" fill="#303030"/><rect x="448.6" y="454.1" width="0.7" height="3" fill="#303030"/><rect x="458.8" y="454.1" width="0.7" height="3" fill="#303030"/><rect x="469.0" y="454.1" width="0.7" height="3" fill="#303030"/><rect x="479.2" y="454.1" width="0.7" height="3" fill="#303030"/><rect x="489.4" y="454.1" width="0.7" height="3" fill="#303030"/><rect x="499.6" y="454.1" width="0.7" height="3" fill="#303030"/><rect x="509.8" y="454.1" width="0.7" height="3" fill="#303030"/><rect x="116.6" y="364" width="1.9" height="90.60000000000002" fill="#118C8C"/><rect x="146.2" y="364" width="1.9" height="90.60000000000002" fill="#118C8C"/><rect x="172.4" y="364" width="1.9" height="90.60000000000002" fill="#118C8C"/><rect x="202.1" y="364" width="1.9" height="90.60000000000002" fill="#118C8C"/><rect x="222.1" y="364" width="1.9" height="90.60000000000002" fill="#118C8C"/><rect x="256.3" y="364" width="1.9" height="90.60000000000002" fill="#118C8C"/><rect x="282.9" y="364" width="1.9" height="90.60000000000002" fill="#118C8C"/><rect x="305.8" y="364" width="1.9" height="90.60000000000002" fill="#118C8C"/><rect x="332.1" y="364" width="1.9" height="90.60000000000002" fill="#118C8C"/><rect x="350.5" y="364" width="1.9" height="90.60000000000002" fill="#118C8C"/><rect x="370.1" y="364" width="1.9" height="90.60000000000002" fill="#118C8C"/><rect x="395.4" y="364" width="1.9" height="90.60000000000002" fill="#118C8C"/><rect x="428.8" y="364" width="1.9" height="90.60000000000002" fill="#118C8C"/><rect x="447.2" y="364" width="1.9" height="90.60000000000002" fill="#118C8C"/><rect x="471.1" y="364" width="1.9" height="90.60000000000002" fill="#118C8C"/><rect x="487.8" y="364" width="1.9" height="90.60000000000002" fill="#118C8C"/><rect x="90" y="406.2" width="19" height="2" fill="#38C8D8"/><rect x="110" y="408.0" width="399" height="1.4" fill="#18A0A8"/><polyline points="110.9,407.7 111.4,405.2 111.9,409.0 112.4,408.0 112.9,408.9 113.4,407.4 113.9,409.2 114.4,409.7 114.9,409.6 115.4,409.5 115.9,408.9 116.4,408.7 116.9,407.9 117.4,408.7 117.9,410.2 118.4,408.0 118.9,409.4 119.4,408.4 119.9,408.4 120.4,407.3 120.9,408.3 121.4,409.4 121.9,409.3 122.4,409.7 122.9,407.7 123.4,405.7 123.9,409.5 124.4,408.5 124.9,409.5 125.4,411.0 125.9,410.0 126.4,405.8 126.9,407.9 127.4,408.1 127.9,410.7 128.4,407.6 128.9,408.1 129.4,410.0 129.9,406.2 130.4,407.8 130.9,406.7 131.4,407.1 131.9,409.2 132.4,408.6 132.9,408.4 133.4,408.5 133.9,408.0 134.4,408.5 134.9,409.2 135.4,407.5 135.9,408.8 136.4,408.0 136.9,409.8 137.4,410.2 137.9,409.5 138.4,410.0 138.9,408.0 139.4,408.2 139.9,408.9 140.4,408.2 140.9,409.4 141.4,408.4 141.9,407.0 142.4,407.3 142.9,409.0 143.4,411.8 143.9,408.8 144.4,406.6 144.9,409.0 145.4,407.7 145.9,406.9 146.4,412.1 146.9,411.8 147.4,408.6 147.9,408.6 148.4,408.3 148.9,409.8 149.4,409.8 149.9,411.9 150.4,407.2 150.9,409.2 151.4,409.7 151.9,408.9 152.4,402.5 152.9,408.7 153.4,410.0 153.9,422.9 154.4,410.7 154.9,408.5 155.4,400.8 155.9,410.0 156.4,419.6 156.9,408.6 157.4,408.5 157.9,419.0 158.4,408.9 158.9,395.9 159.4,406.7 159.9,406.6 160.4,405.5 160.9,387.9 161.4,407.6 161.9,409.3 162.4,424.4 162.9,408.8 163.4,408.0 163.9,425.8 164.4,409.7 164.9,401.0 165.4,407.1 165.9,398.5 166.4,409.1 166.9,407.2 167.4,415.5 167.9,409.2 168.4,398.7 168.9,409.9 169.4,408.2 169.9,412.9 170.4,409.4 170.9,411.2 171.4,408.2 171.9,408.6 172.4,404.7 172.9,409.5 173.4,409.6 173.9,410.9 174.4,408.4 174.9,409.8 175.4,409.0 175.9,411.0 176.4,408.8 176.9,408.5 177.4,409.9 177.9,408.6 178.4,407.8 178.9,406.4 179.4,409.4 179.9,410.4 180.4,408.9 180.9,410.1 181.4,408.3 181.9,409.8 182.4,409.9 182.9,408.2 183.4,406.9 183.9,408.4 184.4,408.8 184.9,409.7 185.4,406.2 185.9,410.7 186.4,409.5 186.9,408.4 187.4,407.3 187.9,407.9 188.4,409.3 188.9,409.3 189.4,409.2 189.9,406.6 190.4,408.1 190.9,408.7 191.4,408.4 191.9,407.9 192.4,408.9 192.9,410.3 193.4,407.0 193.9,410.4 194.4,407.4 194.9,407.5 195.4,407.4 195.9,409.8 196.4,409.4 196.9,410.1 197.4,407.7 197.9,407.2 198.4,411.5 198.9,409.5 199.4,405.4 199.9,407.3 200.4,408.8 200.9,410.7 201.4,411.2 201.9,407.3 202.4,409.6 202.9,408.5 203.4,408.3 203.9,408.2 204.4,409.5 204.9,407.5 205.4,408.3 205.9,409.3 206.4,402.0 206.9,410.6 207.4,402.8 207.9,409.8 208.4,413.9 208.9,407.1 209.4,410.2 209.9,400.1 210.4,406.1 210.9,412.8 211.4,406.6 211.9,424.5 212.4,409.7 212.9,414.9 213.4,408.3 213.9,407.0 214.4,408.6 214.9,407.6 215.4,440.7 215.9,407.9 216.4,396.8 216.9,409.1 217.4,418.1 217.9,410.1 218.4,408.5 218.9,418.9 219.4,409.6 219.9,410.5 220.4,409.7 220.9,410.0 221.4,404.6 221.9,410.7 222.4,408.8 222.9,408.9 223.4,408.0 223.9,406.5 224.4,409.9 224.9,409.6 225.4,409.7 225.9,410.4 226.4,408.6 226.9,408.2 227.4,409.3 227.9,407.1 228.4,406.2 228.9,408.3 229.4,407.9 229.9,407.6 230.4,408.9 230.9,409.7 231.4,407.9 231.9,406.1 232.4,406.5 232.9,407.5 233.4,408.4 233.9,408.7 234.4,409.4 234.9,411.4 235.4,407.4 235.9,410.1 236.4,408.5 236.9,409.0 237.4,408.3 237.9,410.2 238.4,409.9 238.9,410.7 239.4,411.5 239.9,407.0 240.4,408.7 240.9,410.0 241.4,410.1 241.9,409.5 242.4,407.9 242.9,411.5 243.4,407.6 243.9,410.1 244.4,408.3 244.9,408.5 245.4,410.0 245.9,407.7 246.4,409.9 246.9,409.0 247.4,407.5 247.9,408.7 248.4,409.2 248.9,409.7 249.4,410.3 249.9,407.0 250.4,407.8 250.9,407.8 251.4,406.9 251.9,411.4 252.4,408.2 252.9,408.4 253.4,408.2 253.9,407.6 254.4,410.0 254.9,409.0 255.4,407.9 255.9,408.4 256.4,409.3 256.9,409.2 257.4,409.9 257.9,410.4 258.4,408.1 258.9,407.5 259.4,408.1 259.9,408.9 260.4,413.1 260.9,409.2 261.4,407.2 261.9,410.6 262.4,409.2 262.9,410.5 263.4,409.7 263.9,422.7 264.4,404.7 264.9,406.9 265.4,408.5 265.9,404.1 266.4,407.4 266.9,409.0 267.4,422.1 267.9,409.1 268.4,408.0 268.9,404.8 269.4,409.1 269.9,409.3 270.4,390.6 270.9,422.0 271.4,405.9 271.9,407.6 272.4,408.3 272.9,420.5 273.4,409.4 273.9,411.8 274.4,409.6 274.9,386.7 275.4,409.4 275.9,395.2 276.4,408.2 276.9,411.5 277.4,409.3 277.9,409.2 278.4,409.7 278.9,408.3 279.4,415.0 279.9,407.4 280.4,409.0 280.9,409.1 281.4,410.4 281.9,407.2 282.4,408.6 282.9,408.3 283.4,410.7 283.9,406.9 284.4,409.6 284.9,409.2 285.4,410.2 285.9,409.8 286.4,407.3 286.9,406.5 287.4,405.8 287.9,408.2 288.4,409.2 288.9,408.8 289.4,408.1 289.9,409.3 290.4,406.7 290.9,410.3 291.4,410.5 291.9,410.2 292.4,409.6 292.9,410.9 293.4,406.7 293.9,407.2 294.4,408.6 294.9,408.6 295.4,408.2 295.9,409.3 296.4,408.2 296.9,410.8 297.4,408.7 297.9,405.5 298.4,408.1 298.9,407.7 299.4,406.7 299.9,409.9 300.4,407.3 300.9,406.1 301.4,408.1 301.9,411.0 302.4,408.7 302.9,411.1 303.4,409.5 303.9,411.1 304.4,409.5 304.9,409.4 305.4,404.7 305.9,406.8 306.4,406.8 306.9,408.2 307.4,409.9 307.9,409.6 308.4,409.4 308.9,406.0 309.4,407.2 309.9,410.5 310.4,409.2 310.9,408.8 311.4,409.8 311.9,406.6 312.4,409.8 312.9,409.4 313.4,413.0 313.9,408.6 314.4,421.4 314.9,407.5 315.4,400.5 315.9,408.3 316.4,411.7 316.9,408.7 317.4,406.5 317.9,413.2 318.4,406.9 318.9,411.4 319.4,397.7 319.9,407.9 320.4,414.5 320.9,407.8 321.4,413.5 321.9,407.3 322.4,411.0 322.9,410.5 323.4,410.3 323.9,414.6 324.4,408.0 324.9,413.4 325.4,410.4 325.9,409.5 326.4,421.0 326.9,408.9 327.4,401.6 327.9,407.8 328.4,407.4 328.9,407.7 329.4,409.8 329.9,408.3 330.4,408.7 330.9,407.0 331.4,412.3 331.9,410.9 332.4,408.0 332.9,409.1 333.4,406.4 333.9,407.3 334.4,408.6 334.9,409.9 335.4,409.8 335.9,407.9 336.4,411.2 336.9,405.0 337.4,406.7 337.9,410.1 338.4,410.4 338.9,411.0 339.4,407.5 339.9,406.8 340.4,406.7 340.9,407.4 341.4,409.2 341.9,408.1 342.4,408.1 342.9,409.5 343.4,408.4 343.9,408.9 344.4,410.6 344.9,407.7 345.4,408.8 345.9,407.6 346.4,409.6 346.9,407.1 347.4,407.4 347.9,409.5 348.4,405.9 348.9,411.1 349.4,409.5 349.9,408.4 350.4,408.2 350.9,409.3 351.4,409.2 351.9,407.3 352.4,408.8 352.9,407.5 353.4,408.0 353.9,403.9 354.4,408.7 354.9,408.2 355.4,403.1 355.9,408.1 356.4,408.2 356.9,411.7 357.4,410.6 357.9,407.5 358.4,402.0 358.9,409.7 359.4,392.5 359.9,408.4 360.4,409.2 360.9,389.0 361.4,409.1 361.9,408.0 362.4,419.6 362.9,413.1 363.4,408.3 363.9,413.8 364.4,406.9 364.9,406.1 365.4,408.8 365.9,395.0 366.4,407.8 366.9,414.5 367.4,408.5 367.9,408.1 368.4,406.5 368.9,410.2 369.4,410.7 369.9,407.9 370.4,409.3 370.9,410.7 371.4,409.5 371.9,404.9 372.4,410.3 372.9,406.2 373.4,408.1 373.9,410.8 374.4,407.6 374.9,406.7 375.4,408.5 375.9,408.3 376.4,405.8 376.9,410.6 377.4,408.6 377.9,408.4 378.4,408.7 378.9,408.8 379.4,410.4 379.9,408.3 380.4,407.8 380.9,409.2 381.4,409.0 381.9,409.5 382.4,407.5 382.9,409.2 383.4,409.4 383.9,407.3 384.4,409.3 384.9,408.6 385.4,410.5 385.9,410.8 386.4,409.1 386.9,408.9 387.4,408.6 387.9,407.4 388.4,407.5 388.9,410.3 389.4,409.4 389.9,408.2 390.4,407.2 390.9,408.9 391.4,410.4 391.9,409.4 392.4,408.9 392.9,408.9 393.4,410.4 393.9,409.8 394.4,408.9 394.9,405.9 395.4,409.6 395.9,408.9 396.4,408.6 396.9,410.2 397.4,407.6 397.9,409.1 398.4,408.8 398.9,406.8 399.4,412.8 399.9,408.8 400.4,409.7 400.9,409.4 401.4,405.9 401.9,409.7 402.4,411.0 402.9,415.2 403.4,407.6 403.9,409.3 404.4,402.9 404.9,409.6 405.4,403.9 405.9,409.8 406.4,410.8 406.9,404.9 407.4,409.3 407.9,403.5 408.4,408.0 408.9,409.6 409.4,404.8 409.9,408.5 410.4,405.5 410.9,408.7 411.4,408.5 411.9,416.6 412.4,408.8 412.9,410.2 413.4,407.1 413.9,408.2 414.4,412.6 414.9,408.1 415.4,409.4 415.9,395.8 416.4,409.3 416.9,426.8 417.4,409.1 417.9,417.4 418.4,407.3 418.9,413.0 419.4,408.3 419.9,413.2 420.4,404.7 420.9,408.7 421.4,409.6 421.9,409.1 422.4,408.6 422.9,413.3 423.4,410.0 423.9,409.9 424.4,400.3 424.9,407.4 425.4,411.1 425.9,409.0 426.4,409.8 426.9,409.4 427.4,410.1 427.9,410.4 428.4,409.4 428.9,406.2 429.4,407.7 429.9,407.3 430.4,409.5 430.9,407.9 431.4,408.7 431.9,409.8 432.4,407.9 432.9,409.9 433.4,407.5 433.9,410.4 434.4,407.4 434.9,407.2 435.4,409.2 435.9,410.5 436.4,406.4 436.9,410.0 437.4,410.2 437.9,409.2 438.4,406.9 438.9,407.4 439.4,409.3 439.9,405.8 440.4,410.1 440.9,411.0 441.4,407.0 441.9,407.2 442.4,409.6 442.9,411.7 443.4,409.6 443.9,408.1 444.4,408.0 444.9,408.5 445.4,409.6 445.9,409.5 446.4,408.6 446.9,410.5 447.4,410.7 447.9,409.7 448.4,406.9 448.9,407.8 449.4,408.4 449.9,408.0 450.4,410.4 450.9,410.4 451.4,410.3 451.9,407.1 452.4,417.3 452.9,418.6 453.4,408.4 453.9,423.0 454.4,408.2 454.9,408.8 455.4,424.9 455.9,415.3 456.4,406.9 456.9,407.3 457.4,393.6 457.9,409.0 458.4,395.5 458.9,406.5 459.4,407.2 459.9,412.9 460.4,408.7 460.9,409.2 461.4,424.1 461.9,409.4 462.4,420.7 462.9,408.8 463.4,421.4 463.9,409.7 464.4,397.2 464.9,408.3 465.4,410.2 465.9,413.4 466.4,407.8 466.9,409.3 467.4,413.4 467.9,376.7 468.4,408.1 468.9,418.7 469.4,402.8 469.9,409.0 470.4,407.3 470.9,408.4 471.4,408.9 471.9,408.4 472.4,406.9 472.9,408.0 473.4,408.7 473.9,407.2 474.4,408.5 474.9,409.3 475.4,407.8 475.9,410.4 476.4,407.5 476.9,407.2 477.4,410.1 477.9,408.1 478.4,407.8 478.9,407.5 479.4,409.3 479.9,407.8 480.4,408.1 480.9,406.3 481.4,406.9 481.9,408.2 482.4,406.8 482.9,408.0 483.4,410.1 483.9,408.8 484.4,410.1 484.9,407.4 485.4,409.5 485.9,408.1 486.4,409.7 486.9,407.2 487.4,408.8 487.9,409.9 488.4,408.9 488.9,409.0 489.4,408.3 489.9,405.5 490.4,407.5 490.9,407.7 491.4,409.9 491.9,409.1 492.4,407.3 492.9,409.9 493.4,403.8 493.9,406.6 494.4,410.4 494.9,409.2 495.4,412.4 495.9,405.9 496.4,406.6 496.9,416.9 497.4,409.0 497.9,408.2 498.4,410.7 498.9,409.5 499.4,401.3 499.9,407.5 500.4,417.5 500.9,409.2 501.4,407.4 501.9,410.4 502.4,408.3 502.9,399.6 503.4,410.6 503.9,404.5 504.4,409.7 504.9,407.3 505.4,411.8 505.9,406.2 506.4,407.2 506.9,407.6 507.4,409.5 507.9,409.8 508.4,410.2" fill="none" stroke="#A8A828" stroke-width="0.8"/><polyline points="110.6,413.1 111.1,405.7 111.6,408.0 112.1,411.4 112.6,410.8 113.1,409.3 113.6,407.7 114.1,408.9 114.6,409.8 115.1,411.6 115.6,408.9 116.1,410.0 116.6,409.3 117.1,411.4 117.6,407.3 118.1,408.3 118.6,409.8 119.1,409.9 119.6,408.1 120.1,410.5 120.6,410.0 121.1,411.1 121.6,408.4 122.1,410.4 122.6,408.7 123.1,409.3 123.6,409.8 124.1,408.2 124.6,408.3 125.1,411.1 125.6,407.5 126.1,409.5 126.6,410.6 127.1,410.8 127.6,408.5 128.1,407.4 128.6,410.3 129.1,408.0 129.6,408.8 130.1,407.8 130.6,406.9 131.1,407.9 131.6,408.4 132.1,406.3 132.6,410.6 133.1,408.4 133.6,410.9 134.1,410.3 134.6,408.0 135.1,408.7 135.6,408.1 136.1,408.7 136.6,408.8 137.1,409.2 137.6,409.3 138.1,408.9 138.6,407.9 139.1,406.6 139.6,409.0 140.1,408.4 140.6,409.6 141.1,407.9 141.6,409.1 142.1,407.4 142.6,409.2 143.1,408.4 143.6,409.3 144.1,412.2 144.6,409.8 145.1,408.6 145.6,409.1 146.1,408.8 146.6,408.7 147.1,408.8 147.6,408.7 148.1,408.7 148.6,410.1 149.1,410.0 149.6,411.0 150.1,415.5 150.6,409.3 151.1,411.9 151.6,410.2 152.1,409.0 152.6,398.4 153.1,409.6 153.6,407.9 154.1,408.2 154.6,413.9 155.1,408.0 155.6,403.3 156.1,409.8 156.6,408.5 157.1,423.9 157.6,410.6 158.1,408.7 158.6,407.4 159.1,409.3 159.6,424.2 160.1,406.2 160.6,417.3 161.1,410.7 161.6,405.2 162.1,408.1 162.6,409.6 163.1,409.1 163.6,410.3 164.1,408.4 164.6,410.4 165.1,418.9 165.6,408.6 166.1,409.2 166.6,408.3 167.1,405.7 167.6,423.9 168.1,407.6 168.6,407.7 169.1,415.6 169.6,409.4 170.1,409.1 170.6,407.7 171.1,408.1 171.6,408.8 172.1,407.4 172.6,409.2 173.1,407.9 173.6,408.7 174.1,407.4 174.6,408.9 175.1,408.9 175.6,411.7 176.1,410.8 176.6,408.9 177.1,408.8 177.6,408.8 178.1,409.0 178.6,405.9 179.1,408.6 179.6,409.5 180.1,408.7 180.6,407.1 181.1,406.7 181.6,406.3 182.1,410.8 182.6,409.9 183.1,410.4 183.6,408.3 184.1,407.7 184.6,406.6 185.1,409.2 185.6,406.8 186.1,407.6 186.6,410.2 187.1,410.6 187.6,408.4 188.1,409.8 188.6,408.9 189.1,409.3 189.6,407.0 190.1,409.1 190.6,409.0 191.1,409.2 191.6,409.2 192.1,408.9 192.6,409.4 193.1,407.7 193.6,409.2 194.1,407.5 194.6,408.8 195.1,408.1 195.6,407.8 196.1,407.9 196.6,408.0 197.1,409.7 197.6,407.8 198.1,409.2 198.6,409.4 199.1,411.6 199.6,410.0 200.1,407.5 200.6,407.2 201.1,408.8 201.6,409.3 202.1,407.9 202.6,410.0 203.1,406.2 203.6,406.0 204.1,407.7 204.6,409.5 205.1,409.9 205.6,408.8 206.1,410.6 206.6,409.4 207.1,406.1 207.6,410.7 208.1,409.2 208.6,404.0 209.1,409.1 209.6,407.3 210.1,410.2 210.6,398.5 211.1,406.4 211.6,410.4 212.1,406.1 212.6,408.1 213.1,427.9 213.6,409.6 214.1,406.9 214.6,409.0 215.1,410.1 215.6,408.2 216.1,402.9 216.6,411.1 217.1,394.8 217.6,407.9 218.1,407.3 218.6,410.0 219.1,407.7 219.6,408.4 220.1,410.5 220.6,411.0 221.1,410.4 221.6,409.6 222.1,410.2 222.6,406.9 223.1,407.7 223.6,409.1 224.1,410.5 224.6,406.8 225.1,409.2 225.6,408.4 226.1,408.4 226.6,408.9 227.1,409.6 227.6,410.6 228.1,408.0 228.6,409.2 229.1,407.3 229.6,407.8 230.1,406.4 230.6,410.6 231.1,412.2 231.6,408.8 232.1,409.2 232.6,411.4 233.1,407.9 233.6,409.1 234.1,407.8 234.6,409.9 235.1,409.3 235.6,410.2 236.1,410.1 236.6,405.6 237.1,408.0 237.6,409.0 238.1,409.5 238.6,408.6 239.1,409.6 239.6,409.8 240.1,408.2 240.6,408.8 241.1,408.2 241.6,407.2 242.1,410.1 242.6,411.2 243.1,408.6 243.6,411.0 244.1,410.9 244.6,408.0 245.1,408.4 245.6,408.1 246.1,410.1 246.6,410.5 247.1,408.1 247.6,406.8 248.1,408.9 248.6,410.5 249.1,409.3 249.6,405.2 250.1,406.7 250.6,409.6 251.1,408.4 251.6,408.8 252.1,409.0 252.6,408.2 253.1,407.6 253.6,408.9 254.1,409.5 254.6,411.0 255.1,408.4 255.6,407.4 256.1,411.2 256.6,410.2 257.1,407.8 257.6,408.5 258.1,408.9 258.6,410.7 259.1,408.8 259.6,410.7 260.1,415.9 260.6,407.8 261.1,401.9 261.6,406.6 262.1,408.0 262.6,409.6 263.1,418.7 263.6,408.4 264.1,407.1 264.6,408.8 265.1,403.8 265.6,408.3 266.1,409.8 266.6,408.1 267.1,399.8 267.6,409.3 268.1,417.6 268.6,407.8 269.1,408.7 269.6,407.5 270.1,383.5 270.6,424.4 271.1,409.5 271.6,410.8 272.1,401.0 272.6,410.7 273.1,395.0 273.6,406.1 274.1,405.2 274.6,410.4 275.1,409.0 275.6,390.3 276.1,408.8 276.6,389.7 277.1,409.7 277.6,411.6 278.1,406.0 278.6,409.4 279.1,415.2 279.6,410.5 280.1,401.2 280.6,408.4 281.1,409.7 281.6,407.5 282.1,409.0 282.6,411.2 283.1,408.4 283.6,405.5 284.1,408.2 284.6,406.8 285.1,407.5 285.6,410.7 286.1,409.4 286.6,407.8 287.1,408.6 287.6,410.1 288.1,409.0 288.6,411.0 289.1,407.5 289.6,409.1 290.1,408.9 290.6,407.6 291.1,409.2 291.6,409.7 292.1,410.3 292.6,406.2 293.1,409.0 293.6,409.6 294.1,410.3 294.6,409.3 295.1,408.8 295.6,407.9 296.1,410.7 296.6,408.7 297.1,410.8 297.6,408.9 298.1,409.2 298.6,407.7 299.1,407.1 299.6,409.2 300.1,408.5 300.6,410.5 301.1,407.0 301.6,407.1 302.1,410.1 302.6,407.6 303.1,407.3 303.6,406.0 304.1,407.5 304.6,409.5 305.1,409.9 305.6,406.3 306.1,404.2 306.6,407.4 307.1,407.8 307.6,409.5 308.1,408.4 308.6,409.0 309.1,409.5 309.6,409.5 310.1,410.8 310.6,407.3 311.1,408.0 311.6,407.5 312.1,407.6 312.6,405.3 313.1,407.6 313.6,408.9 314.1,408.5 314.6,420.8 315.1,407.4 315.6,417.2 316.1,409.6 316.6,411.7 317.1,404.0 317.6,409.4 318.1,408.0 318.6,404.2 319.1,409.1 319.6,413.4 320.1,410.6 320.6,415.3 321.1,407.8 321.6,403.2 322.1,410.2 322.6,409.5 323.1,409.6 323.6,410.0 324.1,411.1 324.6,409.6 325.1,406.0 325.6,409.5 326.1,407.9 326.6,408.3 327.1,413.6 327.6,409.2 328.1,406.0 328.6,406.8 329.1,406.3 329.6,408.2 330.1,407.4 330.6,409.5 331.1,407.1 331.6,410.1 332.1,407.0 332.6,410.8 333.1,408.8 333.6,408.9 334.1,411.2 334.6,411.3 335.1,407.2 335.6,410.1 336.1,409.5 336.6,407.8 337.1,408.3 337.6,407.5 338.1,410.9 338.6,412.2 339.1,406.8 339.6,407.7 340.1,408.5 340.6,407.5 341.1,410.1 341.6,409.0 342.1,408.4 342.6,406.6 343.1,406.6 343.6,408.7 344.1,406.2 344.6,409.8 345.1,408.1 345.6,410.1 346.1,409.1 346.6,409.5 347.1,409.3 347.6,407.9 348.1,407.9 348.6,408.2 349.1,408.9 349.6,409.8 350.1,408.4 350.6,410.5 351.1,408.2 351.6,407.2 352.1,407.8 352.6,407.9 353.1,410.6 353.6,409.8 354.1,409.3 354.6,408.6 355.1,396.4 355.6,407.1 356.1,411.6 356.6,409.5 357.1,410.1 357.6,410.3 358.1,410.4 358.6,408.6 359.1,407.5 359.6,408.6 360.1,421.6 360.6,406.3 361.1,409.1 361.6,407.2 362.1,385.0 362.6,411.7 363.1,411.0 363.6,399.6 364.1,409.0 364.6,413.7 365.1,410.8 365.6,411.4 366.1,402.5 366.6,408.0 367.1,409.2 367.6,409.8 368.1,406.4 368.6,409.1 369.1,412.6 369.6,410.9 370.1,409.5 370.6,409.1 371.1,409.8 371.6,408.5 372.1,408.9 372.6,409.2 373.1,406.4 373.6,409.9 374.1,410.1 374.6,409.7 375.1,410.2 375.6,407.2 376.1,409.0 376.6,408.5 377.1,408.4 377.6,407.2 378.1,407.5 378.6,408.6 379.1,407.3 379.6,408.3 380.1,407.2 380.6,409.3 381.1,411.4 381.6,409.2 382.1,408.6 382.6,406.9 383.1,407.8 383.6,409.5 384.1,408.9 384.6,408.4 385.1,406.2 385.6,407.2 386.1,409.2 386.6,407.4 387.1,409.7 387.6,408.8 388.1,407.4 388.6,411.0 389.1,405.4 389.6,408.1 390.1,406.7 390.6,408.2 391.1,409.4 391.6,410.4 392.1,409.2 392.6,408.4 393.1,409.0 393.6,407.1 394.1,408.5 394.6,409.7 395.1,409.1 395.6,409.6 396.1,408.1 396.6,409.5 397.1,408.5 397.6,407.5 398.1,410.9 398.6,405.6 399.1,406.2 399.6,408.0 400.1,408.9 400.6,412.2 401.1,407.1 401.6,413.9 402.1,409.3 402.6,409.4 403.1,409.2 403.6,402.3 404.1,409.3 404.6,399.0 405.1,409.9 405.6,408.4 406.1,407.3 406.6,413.6 407.1,409.9 407.6,396.1 408.1,396.2 408.6,407.6 409.1,410.0 409.6,407.8 410.1,419.7 410.6,410.1 411.1,404.7 411.6,408.7 412.1,405.7 412.6,409.1 413.1,414.7 413.6,409.5 414.1,406.4 414.6,410.3 415.1,411.1 415.6,411.9 416.1,408.2 416.6,417.5 417.1,410.4 417.6,407.8 418.1,395.0 418.6,409.0 419.1,407.5 419.6,410.6 420.1,409.9 420.6,411.4 421.1,406.4 421.6,410.6 422.1,406.8 422.6,415.3 423.1,409.6 423.6,406.8 424.1,409.2 424.6,407.9 425.1,409.6 425.6,409.3 426.1,411.3 426.6,407.5 427.1,410.4 427.6,407.1 428.1,410.4 428.6,409.3 429.1,408.8 429.6,410.7 430.1,407.2 430.6,407.5 431.1,409.1 431.6,407.7 432.1,408.3 432.6,408.5 433.1,408.4 433.6,409.1 434.1,407.3 434.6,410.1 435.1,408.7 435.6,407.8 436.1,408.0 436.6,409.1 437.1,408.6 437.6,409.4 438.1,410.6 438.6,408.7 439.1,406.6 439.6,409.1 440.1,408.9 440.6,408.9 441.1,408.5 441.6,406.6 442.1,408.4 442.6,408.9 443.1,408.5 443.6,410.7 444.1,410.9 444.6,406.2 445.1,411.3 445.6,407.2 446.1,408.1 446.6,412.3 447.1,410.8 447.6,410.0 448.1,407.4 448.6,408.9 449.1,409.4 449.6,407.5 450.1,409.2 450.6,407.0 451.1,415.7 451.6,408.7 452.1,405.8 452.6,410.6 453.1,412.5 453.6,410.7 454.1,406.9 454.6,416.4 455.1,408.6 455.6,406.6 456.1,411.9 456.6,408.8 457.1,412.2 457.6,408.6 458.1,400.5 458.6,409.5 459.1,392.2 459.6,407.0 460.1,407.2 460.6,408.7 461.1,407.2 461.6,407.6 462.1,411.5 462.6,406.9 463.1,421.5 463.6,409.9 464.1,397.4 464.6,409.8 465.1,417.4 465.6,409.6 466.1,408.1 466.6,403.3 467.1,409.3 467.6,405.7 468.1,407.7 468.6,406.5 469.1,411.0 469.6,402.4 470.1,408.5 470.6,408.3 471.1,407.6 471.6,409.3 472.1,409.7 472.6,410.1 473.1,407.1 473.6,409.4 474.1,410.3 474.6,406.0 475.1,408.2 475.6,407.6 476.1,409.6 476.6,406.8 477.1,408.6 477.6,408.4 478.1,407.6 478.6,408.6 479.1,406.6 479.6,407.1 480.1,407.4 480.6,409.7 481.1,410.5 481.6,408.4 482.1,408.1 482.6,406.6 483.1,406.8 483.6,408.9 484.1,410.1 484.6,408.1 485.1,407.7 485.6,407.9 486.1,409.5 486.6,410.3 487.1,408.6 487.6,408.2 488.1,409.0 488.6,407.9 489.1,408.6 489.6,410.1 490.1,409.3 490.6,406.7 491.1,411.3 491.6,412.4 492.1,406.8 492.6,408.1 493.1,409.5 493.6,410.3 494.1,408.2 494.6,410.9 495.1,410.3 495.6,407.6 496.1,408.6 496.6,406.2 497.1,403.1 497.6,407.7 498.1,409.2 498.6,413.6 499.1,407.1 499.6,411.4 500.1,407.4 500.6,406.7 501.1,409.0 501.6,417.0 502.1,409.7 502.6,407.5 503.1,409.3 503.6,417.3 504.1,409.6 504.6,424.8 505.1,409.3 505.6,409.0 506.1,407.1 506.6,408.9 507.1,410.5 507.6,412.1 508.1,407.9" fill="none" stroke="#ECEC3C" stroke-width="0.7"/><polyline points="110.6,405.0 112.6,406.2 114.6,407.3 116.6,407.7 118.6,408.1 120.6,408.1 122.6,409.3 124.6,409.3 126.6,408.6 128.6,407.6 130.6,408.4 132.6,408.6 134.6,408.7 136.6,408.9 138.6,408.8 140.6,407.8 142.6,408.6 144.6,409.3 146.6,408.4 148.6,404.6 150.6,403.8 152.6,402.8 154.6,402.1 156.6,400.6 158.6,396.9 160.6,399.7 162.6,400.0 164.6,401.7 166.6,401.5 168.6,401.8 170.6,404.3 172.6,407.9 174.6,408.9 176.6,407.3 178.6,408.1 180.6,408.8 182.6,408.4 184.6,409.1 186.6,409.0 188.6,409.0 190.6,409.2 192.6,409.2 194.6,409.3 196.6,408.5 198.6,408.3 200.6,408.3 202.6,409.2 204.6,406.2 206.6,404.5 208.6,402.2 210.6,400.7 212.6,400.3 214.6,399.8 216.6,399.7 218.6,401.4 220.6,406.0 222.6,409.3 224.6,409.1 226.6,409.0 228.6,408.6 230.6,408.5 232.6,408.6 234.6,409.2 236.6,409.3 238.6,409.3 240.6,408.7 242.6,409.3 244.6,409.1 246.6,409.2 248.6,408.9 250.6,408.6 252.6,408.6 254.6,408.7 256.6,408.2 258.6,405.6 260.6,404.2 262.6,401.7 264.6,403.9 266.6,402.6 268.6,396.1 270.6,395.9 272.6,393.4 274.6,396.3 276.6,398.0 278.6,402.7 280.6,403.3 282.6,407.9 284.6,408.0 286.6,408.2 288.6,409.2 290.6,408.0 292.6,408.2 294.6,408.5 296.6,409.2 298.6,409.3 300.6,408.8 302.6,408.2 304.6,409.3 306.6,407.2 308.6,406.2 310.6,406.4 312.6,403.6 314.6,402.1 316.6,401.7 318.6,402.7 320.6,402.5 322.6,404.5 324.6,404.3 326.6,404.7 328.6,405.1 330.6,406.4 332.6,409.3 334.6,408.4 336.6,407.5 338.6,409.3 340.6,408.2 342.6,408.8 344.6,409.3 346.6,408.7 348.6,408.7 350.6,408.3 352.6,406.3 354.6,404.5 356.6,403.5 358.6,401.0 360.6,397.0 362.6,397.2 364.6,397.4 366.6,402.7 368.6,405.7 370.6,408.3 372.6,408.3 374.6,408.7 376.6,408.5 378.6,408.0 380.6,408.9 382.6,409.0 384.6,408.5 386.6,409.3 388.6,408.7 390.6,409.3 392.6,409.3 394.6,408.5 396.6,408.3 398.6,405.6 400.6,404.9 402.6,403.8 404.6,403.3 406.6,401.2 408.6,400.9 410.6,402.4 412.6,403.5 414.6,401.1 416.6,400.9 418.6,400.1 420.6,403.0 422.6,405.4 424.6,404.8 426.6,405.8 428.6,409.2 430.6,409.3 432.6,409.2 434.6,408.8 436.6,409.3 438.6,409.3 440.6,408.6 442.6,408.6 444.6,408.1 446.6,409.2 448.6,409.0 450.6,403.5 452.6,400.9 454.6,399.8 456.6,400.4 458.6,400.6 460.6,400.8 462.6,399.5 464.6,397.8 466.6,399.0 468.6,400.7 470.6,405.2 472.6,409.3 474.6,408.9 476.6,409.2 478.6,408.5 480.6,409.1 482.6,408.6 484.6,408.7 486.6,408.3 488.6,407.7 490.6,409.0 492.6,405.4 494.6,404.9 496.6,404.5 498.6,403.4 500.6,402.7 502.6,401.1 504.6,402.9 506.6,404.4" fill="none" stroke="#E83018" stroke-width="0.9"/><polygon points="305.5,460.1 312.5,460.1 309,455.1" fill="#10E010"/></svg>
<div class="t" style="right:792.2px;top:80.35px;font-size:5.9px;font-weight:bold;letter-spacing:-0.1px;-webkit-text-stroke:0.2px #000">400</div>
<div class="t" style="right:792.2px;top:99.05px;font-size:5.9px;font-weight:bold;letter-spacing:-0.1px;-webkit-text-stroke:0.2px #000">200</div>
<div class="t" style="right:792.2px;top:136.45px;font-size:5.9px;font-weight:bold;letter-spacing:-0.1px;-webkit-text-stroke:0.2px #000">-200</div>
<div class="t" style="right:792.2px;top:155.16px;font-size:5.9px;font-weight:bold;letter-spacing:-0.1px;-webkit-text-stroke:0.2px #000">-400</div>
<div class="t" style="right:792.4px;top:118.12px;font-size:5.6px;font-weight:bold;-webkit-text-stroke:0.2px #000">0 мкВ</div>
<div class="t" style="right:792.2px;top:176.75px;font-size:5.9px;font-weight:bold;letter-spacing:-0.1px;-webkit-text-stroke:0.2px #000">400</div>
<div class="t" style="right:792.2px;top:195.46px;font-size:5.9px;font-weight:bold;letter-spacing:-0.1px;-webkit-text-stroke:0.2px #000">200</div>
<div class="t" style="right:792.2px;top:232.85px;font-size:5.9px;font-weight:bold;letter-spacing:-0.1px;-webkit-text-stroke:0.2px #000">-200</div>
<div class="t" style="right:792.2px;top:251.56px;font-size:5.9px;font-weight:bold;letter-spacing:-0.1px;-webkit-text-stroke:0.2px #000">-400</div>
<div class="t" style="right:792.4px;top:214.52px;font-size:5.6px;font-weight:bold;-webkit-text-stroke:0.2px #000">0 мкВ</div>
<div class="t" style="right:792.2px;top:273.36px;font-size:5.9px;font-weight:bold;letter-spacing:-0.1px;-webkit-text-stroke:0.2px #000">400</div>
<div class="t" style="right:792.2px;top:292.06px;font-size:5.9px;font-weight:bold;letter-spacing:-0.1px;-webkit-text-stroke:0.2px #000">200</div>
<div class="t" style="right:792.2px;top:329.45px;font-size:5.9px;font-weight:bold;letter-spacing:-0.1px;-webkit-text-stroke:0.2px #000">-200</div>
<div class="t" style="right:792.2px;top:348.15px;font-size:5.9px;font-weight:bold;letter-spacing:-0.1px;-webkit-text-stroke:0.2px #000">-400</div>
<div class="t" style="right:792.4px;top:311.12px;font-size:5.6px;font-weight:bold;-webkit-text-stroke:0.2px #000">0 мкВ</div>
<div class="t" style="right:792.2px;top:370.06px;font-size:5.9px;font-weight:bold;letter-spacing:-0.1px;-webkit-text-stroke:0.2px #000">400</div>
<div class="t" style="right:792.2px;top:388.75px;font-size:5.9px;font-weight:bold;letter-spacing:-0.1px;-webkit-text-stroke:0.2px #000">200</div>
<div class="t" style="right:792.2px;top:426.15px;font-size:5.9px;font-weight:bold;letter-spacing:-0.1px;-webkit-text-stroke:0.2px #000">-200</div>
<div class="t" style="right:792.2px;top:444.85px;font-size:5.9px;font-weight:bold;letter-spacing:-0.1px;-webkit-text-stroke:0.2px #000">-400</div>
<div class="t" style="right:792.4px;top:407.82px;font-size:5.6px;font-weight:bold;-webkit-text-stroke:0.2px #000">0 мкВ</div>
<div class="t" style="right:397px;top:164.57px;font-size:6.6px;color:#fff;font-weight:bold;font-family:'Liberation Serif', serif">1.Высокая, Справа</div>
<div class="t" style="right:397px;top:261.57px;font-size:6.6px;color:#fff;font-weight:bold;font-family:'Liberation Serif', serif">2.Высокая, Слева</div>
<div class="t" style="right:397px;top:358.57px;font-size:6.6px;color:#fff;font-weight:bold;font-family:'Liberation Serif', serif">3.Жевательная, Справа</div>
<div class="t" style="right:397px;top:455.17px;font-size:6.6px;color:#fff;font-weight:bold;font-family:'Liberation Serif', serif">4.Жевательная, Слева</div>
<div style="position:absolute;left:509px;top:74px;width:27.5px;height:386.6px;background:linear-gradient(#0A1860 0%,#0A28A0 4%,#0838D0 10.6%,#0840E0 17%,#0A4CDC 35%,#0A58D8 44.5%,#0A70B8 50.8%,#0A8C88 58.5%,#0A9878 63.7%,#0A8888 70%,#0A68C0 79%,#0848D8 89%,#0830A8 94.8%,#061040 100%)"></div>
<div style="position:absolute;left:536.3px;top:74px;width:1.6px;height:387px;background:#D8D8D0"></div>
<div style="position:absolute;left:537.9px;top:73.3px;width:270.1px;height:11px;background:#ECE9D8;border-top:1px solid #F8F6EE;border-bottom:1px solid #D0CCBC"></div>
<div style="position:absolute;left:539px;top:74.6px;width:11.3px;height:9px;background:#F2F0E6;border:1px solid #fff;border-right-color:#A8A498;border-bottom-color:#A8A498"></div>
<svg style="position:absolute;left:541.5px;top:76px" width="7" height="7"><polygon points="3.5,0.3 6.7,3.5 3.5,6.7 0.3,3.5" fill="#10B8B0" stroke="#000" stroke-width="0.7"/></svg>
<div class="t" style="left:655.8px;top:75.44px;font-size:8.3px;font-weight:bold">Расчёты</div>
<div style="position:absolute;left:537.9px;top:84px;width:270.1px;height:56.6px;background:#fff"></div>
<div style="position:absolute;left:538.6px;top:84.4px;width:59.0px;height:8.5px;background:#ECE9D8;border-right:1px solid #5A5850;border-bottom:1px solid #C8C4B4"></div>
<div class="t" style="left:540.1px;top:86.19px;font-size:6.3px;color:#000">Канал №:</div>
<div style="position:absolute;left:597.6px;top:84.4px;width:22.699999999999932px;height:8.5px;background:#ECE9D8;border-right:1px solid #5A5850;border-bottom:1px solid #C8C4B4"></div>
<div class="t" style="left:599.1px;top:86.19px;font-size:6.3px;color:#000">1</div>
<div style="position:absolute;left:620.3px;top:84.4px;width:22.700000000000045px;height:8.5px;background:#ECE9D8;border-right:1px solid #5A5850;border-bottom:1px solid #C8C4B4"></div>
<div class="t" style="left:621.8px;top:86.19px;font-size:6.3px;color:#000">2</div>
<div style="position:absolute;left:643px;top:84.4px;width:23px;height:8.5px;background:#ECE9D8;border-right:1px solid #5A5850;border-bottom:1px solid #C8C4B4"></div>
<div class="t" style="left:644.5px;top:86.19px;font-size:6.3px;color:#000">3</div>
<div style="position:absolute;left:666px;top:84.4px;width:22.799999999999955px;height:8.5px;background:#ECE9D8;border-right:1px solid #5A5850;border-bottom:1px solid #C8C4B4"></div>
<div class="t" style="left:667.5px;top:86.19px;font-size:6.3px;color:#000">4</div>
<div style="position:absolute;left:538.6px;top:92.9px;width:59.0px;height:8.5px;background:#0A5CCB;border-right:1px solid #4A80D8"></div>
<div class="t" style="left:540.1px;top:94.69px;font-size:6.3px;color:#E8F0FF">Турны</div>
<div style="position:absolute;left:597.6px;top:92.9px;width:22.699999999999932px;height:8.5px;background:#0A5CCB;border-right:1px solid #4A80D8"></div>
<div class="t" style="left:599.1px;top:94.69px;font-size:6.3px;color:#E8F0FF">4046</div>
<div style="position:absolute;left:620.3px;top:92.9px;width:22.700000000000045px;height:8.5px;background:#0A5CCB;border-right:1px solid #4A80D8"></div>
<div class="t" style="left:621.8px;top:94.69px;font-size:6.3px;color:#E8F0FF">4185</div>
<div style="position:absolute;left:643px;top:92.9px;width:23px;height:8.5px;background:#0A5CCB;border-right:1px solid #4A80D8"></div>
<div class="t" style="left:644.5px;top:94.69px;font-size:6.3px;color:#E8F0FF">4425</div>
<div style="position:absolute;left:666px;top:92.9px;width:22.799999999999955px;height:8.5px;background:#0A5CCB;border-right:1px solid #4A80D8"></div>
<div class="t" style="left:667.5px;top:94.69px;font-size:6.3px;color:#E8F0FF">4229</div>
<div style="position:absolute;left:538.6px;top:101.4px;width:59.0px;height:8.599999999999994px;background:#fff;border-right:1px solid #D8D8D8;border-bottom:1px solid #E0E0E0"></div>
<div class="t" style="left:540.1px;top:103.23px;font-size:6.3px;color:#000">Ат, мкВ</div>
<div style="position:absolute;left:597.6px;top:101.4px;width:22.699999999999932px;height:8.599999999999994px;background:#fff;border-right:1px solid #D8D8D8;border-bottom:1px solid #E0E0E0"></div>
<div class="t" style="left:599.1px;top:103.23px;font-size:6.3px;color:#000">1973</div>
<div style="position:absolute;left:620.3px;top:101.4px;width:22.700000000000045px;height:8.599999999999994px;background:#fff;border-right:1px solid #D8D8D8;border-bottom:1px solid #E0E0E0"></div>
<div class="t" style="left:621.8px;top:103.23px;font-size:6.3px;color:#000">958</div>
<div style="position:absolute;left:643px;top:101.4px;width:23px;height:8.599999999999994px;background:#fff;border-right:1px solid #D8D8D8;border-bottom:1px solid #E0E0E0"></div>
<div class="t" style="left:644.5px;top:103.23px;font-size:6.3px;color:#000">798</div>
<div style="position:absolute;left:666px;top:101.4px;width:22.799999999999955px;height:8.599999999999994px;background:#fff;border-right:1px solid #D8D8D8;border-bottom:1px solid #E0E0E0"></div>
<div class="t" style="left:667.5px;top:103.23px;font-size:6.3px;color:#000">716</div>
<div style="position:absolute;left:538.6px;top:110.0px;width:59.0px;height:8.700000000000003px;background:#fff;border-right:1px solid #D8D8D8;border-bottom:1px solid #E0E0E0"></div>
<div class="t" style="left:540.1px;top:111.88px;font-size:6.3px;color:#000">Ат ср, мкВ</div>
<div style="position:absolute;left:597.6px;top:110.0px;width:22.699999999999932px;height:8.700000000000003px;background:#fff;border-right:1px solid #D8D8D8;border-bottom:1px solid #E0E0E0"></div>
<div class="t" style="left:599.1px;top:111.88px;font-size:6.3px;color:#000">34</div>
<div style="position:absolute;left:620.3px;top:110.0px;width:22.700000000000045px;height:8.700000000000003px;background:#fff;border-right:1px solid #D8D8D8;border-bottom:1px solid #E0E0E0"></div>
<div class="t" style="left:621.8px;top:111.88px;font-size:6.3px;color:#000">23</div>
<div style="position:absolute;left:643px;top:110.0px;width:23px;height:8.700000000000003px;background:#fff;border-right:1px solid #D8D8D8;border-bottom:1px solid #E0E0E0"></div>
<div class="t" style="left:644.5px;top:111.88px;font-size:6.3px;color:#000">25</div>
<div style="position:absolute;left:666px;top:110.0px;width:22.799999999999955px;height:8.700000000000003px;background:#fff;border-right:1px solid #D8D8D8;border-bottom:1px solid #E0E0E0"></div>
<div class="t" style="left:667.5px;top:111.88px;font-size:6.3px;color:#000">24</div>
<div style="position:absolute;left:537.9px;top:140.6px;width:270.1px;height:21px;background:#ECE9D8"></div>
<div style="position:absolute;left:572.7px;top:142.5px;width:1px;height:8.5px;background:#C8C4B4"></div>
<div style="position:absolute;left:616px;top:142.5px;width:1px;height:8.5px;background:#C8C4B4"></div>
<div style="position:absolute;left:658.6px;top:142.5px;width:1px;height:8.5px;background:#C8C4B4"></div>
<div style="position:absolute;left:698.8px;top:142.5px;width:1px;height:8.5px;background:#C8C4B4"></div>
<div style="position:absolute;left:735px;top:142.5px;width:1px;height:8.5px;background:#C8C4B4"></div>
<div style="position:absolute;left:576px;top:142px;width:37px;height:8.5px;border:1px solid #fff;border-left-color:#808080;border-top-color:#808080;border-right-color:#fff"></div>
<div class="t" style="left:543px;top:144.13px;font-size:6.3px;">Открыв.</div>
<div class="t" style="left:579.5px;top:144.13px;font-size:6.3px;">орех слева</div>
<div class="t" style="left:623px;top:144.13px;font-size:6.3px;">латер.лев.</div>
<div class="t" style="left:665.7px;top:144.13px;font-size:6.3px;">латер. пр.</div>
<div class="t" style="left:705px;top:144.13px;font-size:6.3px;">протруз.</div>
<div style="position:absolute;left:540px;top:152px;width:66px;height:9.5px;background:#ECE9D8;border-top:1px solid #fff;border-left:1px solid #fff"></div>
<div style="position:absolute;left:605.5px;top:152.5px;width:1.2px;height:9px;background:#707070"></div>
<div style="position:absolute;left:656.5px;top:152.5px;width:1.2px;height:9px;background:#707070"></div>
<div class="t" style="left:543px;top:155.03px;font-size:6.3px;">Параметры жевания</div>
<div class="t" style="left:609px;top:155.03px;font-size:6.3px;">Время жеваний</div>
<div style="position:absolute;left:541px;top:163.3px;width:265.5px;height:177px;background:#fff;border:1.2px solid #5C5A52;border-right:1.4px solid #5C5A52;border-bottom:1.6px solid #A8A498"></div>
<div style="position:absolute;left:541.8px;top:164.2px;width:100.90000000000009px;height:8.830000000000013px;background:#ECE9D8;border-right:1px solid #6A6860;border-bottom:1px solid #8A887E;border-left:1px solid #fff;border-top:1px solid #fff"></div>
<div class="t" style="left:543.4px;top:166.35px;font-size:6.3px;color:#000">Номер канала</div>
<div style="position:absolute;left:642.7px;top:164.2px;width:20.199999999999932px;height:8.830000000000013px;background:#ECE9D8;border-right:1px solid #6A6860;border-bottom:1px solid #8A887E;border-left:1px solid #fff;border-top:1px solid #fff"></div>
<div class="t" style="left:644.3000000000001px;top:166.35px;font-size:6.3px;color:#000">1</div>
<div style="position:absolute;left:662.9px;top:164.2px;width:20.200000000000045px;height:8.830000000000013px;background:#ECE9D8;border-right:1px solid #6A6860;border-bottom:1px solid #8A887E;border-left:1px solid #fff;border-top:1px solid #fff"></div>
<div class="t" style="left:664.5px;top:166.35px;font-size:6.3px;color:#000">2</div>
<div style="position:absolute;left:683.1px;top:164.2px;width:20.199999999999932px;height:8.830000000000013px;background:#ECE9D8;border-right:1px solid #6A6860;border-bottom:1px solid #8A887E;border-left:1px solid #fff;border-top:1px solid #fff"></div>
<div class="t" style="left:684.7px;top:166.35px;font-size:6.3px;color:#000">3</div>
<div style="position:absolute;left:703.3px;top:164.2px;width:20.100000000000023px;height:8.830000000000013px;background:#ECE9D8;border-right:1px solid #6A6860;border-bottom:1px solid #8A887E;border-left:1px solid #fff;border-top:1px solid #fff"></div>
<div class="t" style="left:704.9px;top:166.35px;font-size:6.3px;color:#000">4</div>
<div style="position:absolute;left:723.4px;top:164.2px;width:20.200000000000045px;height:8.830000000000013px;background:#ECE9D8;border-right:1px solid #6A6860;border-bottom:1px solid #8A887E;border-left:1px solid #fff;border-top:1px solid #fff"></div>
<div class="t" style="left:725.0px;top:166.35px;font-size:6.3px;color:#000">1/2</div>
<div style="position:absolute;left:743.6px;top:164.2px;width:20.199999999999932px;height:8.830000000000013px;background:#ECE9D8;border-right:1px solid #6A6860;border-bottom:1px solid #8A887E;border-left:1px solid #fff;border-top:1px solid #fff"></div>
<div class="t" style="left:745.2px;top:166.35px;font-size:6.3px;color:#000">3/4</div>
<div style="position:absolute;left:763.8px;top:164.2px;width:20.200000000000045px;height:8.830000000000013px;background:#ECE9D8;border-right:1px solid #6A6860;border-bottom:1px solid #8A887E;border-left:1px solid #fff;border-top:1px solid #fff"></div>
<div class="t" style="left:765.4px;top:166.35px;font-size:6.3px;color:#000">1/3</div>
<div style="position:absolute;left:784px;top:164.2px;width:20.299999999999955px;height:8.830000000000013px;background:#ECE9D8;border-right:1px solid #6A6860;border-bottom:1px solid #8A887E;border-left:1px solid #fff;border-top:1px solid #fff"></div>
<div class="t" style="left:785.6px;top:166.35px;font-size:6.3px;color:#000">2/4</div>
<div style="position:absolute;left:541.8px;top:173.03px;width:100.90000000000009px;height:8.829999999999984px;background:#ECE9D8;border-right:1px solid #6A6860;border-bottom:1px solid #8A887E;border-left:1px solid #fff;border-top:1px solid #fff"></div>
<div class="t" style="left:543.4px;top:175.18px;font-size:6.3px;color:#000">Макс. ампл. жевания (мкВ)</div>
<div style="position:absolute;left:642.7px;top:173.03px;width:20.199999999999932px;height:8.829999999999984px;background:#fff;border-right:1px solid #D8D8D8;border-bottom:1px solid #E4E4E4"></div>
<div class="t" style="left:644.3000000000001px;top:175.18px;font-size:6.3px;color:#000">2790</div>
<div style="position:absolute;left:662.9px;top:173.03px;width:20.200000000000045px;height:8.829999999999984px;background:#fff;border-right:1px solid #D8D8D8;border-bottom:1px solid #E4E4E4"></div>
<div class="t" style="left:664.5px;top:175.18px;font-size:6.3px;color:#000">1370</div>
<div style="position:absolute;left:683.1px;top:173.03px;width:20.199999999999932px;height:8.829999999999984px;background:#fff;border-right:1px solid #D8D8D8;border-bottom:1px solid #E4E4E4"></div>
<div class="t" style="left:684.7px;top:175.18px;font-size:6.3px;color:#000">1743</div>
<div style="position:absolute;left:703.3px;top:173.03px;width:20.100000000000023px;height:8.829999999999984px;background:#fff;border-right:1px solid #D8D8D8;border-bottom:1px solid #E4E4E4"></div>
<div class="t" style="left:704.9px;top:175.18px;font-size:6.3px;color:#000">1131</div>
<div style="position:absolute;left:723.4px;top:173.03px;width:20.200000000000045px;height:8.829999999999984px;background:#fff;border-right:1px solid #D8D8D8;border-bottom:1px solid #E4E4E4"></div>
<div class="t" style="left:725.0px;top:175.18px;font-size:6.3px;color:#000">2,04</div>
<div style="position:absolute;left:743.6px;top:173.03px;width:20.199999999999932px;height:8.829999999999984px;background:#fff;border-right:1px solid #D8D8D8;border-bottom:1px solid #E4E4E4"></div>
<div class="t" style="left:745.2px;top:175.18px;font-size:6.3px;color:#000">1,54</div>
<div style="position:absolute;left:763.8px;top:173.03px;width:20.200000000000045px;height:8.829999999999984px;background:#fff;border-right:1px solid #D8D8D8;border-bottom:1px solid #E4E4E4"></div>
<div class="t" style="left:765.4px;top:175.18px;font-size:6.3px;color:#000">1,6</div>
<div style="position:absolute;left:784px;top:173.03px;width:20.299999999999955px;height:8.829999999999984px;background:#fff;border-right:1px solid #D8D8D8;border-bottom:1px solid #E4E4E4"></div>
<div class="t" style="left:785.6px;top:175.18px;font-size:6.3px;color:#000">1,21</div>
<div style="position:absolute;left:541.8px;top:181.85999999999999px;width:100.90000000000009px;height:8.830000000000013px;background:#ECE9D8;border-right:1px solid #6A6860;border-bottom:1px solid #8A887E;border-left:1px solid #fff;border-top:1px solid #fff"></div>
<div class="t" style="left:543.4px;top:184.01px;font-size:6.3px;color:#000">Ср. ампл. жевания (мкВ)</div>
<div style="position:absolute;left:642.7px;top:181.85999999999999px;width:20.199999999999932px;height:8.830000000000013px;background:#0A5CCB;border-right:1px solid #4A80D8"></div>
<div class="t" style="left:644.3000000000001px;top:184.01px;font-size:6.3px;color:#E8F0FF">352</div>
<div style="position:absolute;left:662.9px;top:181.85999999999999px;width:20.200000000000045px;height:8.830000000000013px;background:#0A5CCB;border-right:1px solid #4A80D8"></div>
<div class="t" style="left:664.5px;top:184.01px;font-size:6.3px;color:#E8F0FF">210</div>
<div style="position:absolute;left:683.1px;top:181.85999999999999px;width:20.199999999999932px;height:8.830000000000013px;background:#0A5CCB;border-right:1px solid #4A80D8"></div>
<div class="t" style="left:684.7px;top:184.01px;font-size:6.3px;color:#E8F0FF">255</div>
<div style="position:absolute;left:703.3px;top:181.85999999999999px;width:20.100000000000023px;height:8.830000000000013px;background:#0A5CCB;border-right:1px solid #4A80D8"></div>
<div class="t" style="left:704.9px;top:184.01px;font-size:6.3px;color:#E8F0FF">196</div>
<div style="position:absolute;left:723.4px;top:181.85999999999999px;width:20.200000000000045px;height:8.830000000000013px;background:#0A5CCB;border-right:1px solid #4A80D8"></div>
<div class="t" style="left:725.0px;top:184.01px;font-size:6.3px;color:#E8F0FF">1,68</div>
<div style="position:absolute;left:743.6px;top:181.85999999999999px;width:20.199999999999932px;height:8.830000000000013px;background:#0A5CCB;border-right:1px solid #4A80D8"></div>
<div class="t" style="left:745.2px;top:184.01px;font-size:6.3px;color:#E8F0FF">1,3</div>
<div style="position:absolute;left:763.8px;top:181.85999999999999px;width:20.200000000000045px;height:8.830000000000013px;background:#0A5CCB;border-right:1px solid #4A80D8"></div>
<div class="t" style="left:765.4px;top:184.01px;font-size:6.3px;color:#E8F0FF">1,38</div>
<div style="position:absolute;left:784px;top:181.85999999999999px;width:20.299999999999955px;height:8.830000000000013px;background:#0A5CCB;border-right:1px solid #4A80D8"></div>
<div class="t" style="left:785.6px;top:184.01px;font-size:6.3px;color:#E8F0FF">1,07</div>
<div style="position:absolute;left:541.8px;top:190.69px;width:100.90000000000009px;height:8.829999999999984px;background:#ECE9D8;border-right:1px solid #6A6860;border-bottom:1px solid #8A887E;border-left:1px solid #fff;border-top:1px solid #fff"></div>
<div class="t" style="left:543.4px;top:192.84px;font-size:6.3px;color:#000">Площадь жевания (мВ*с)</div>
<div style="position:absolute;left:642.7px;top:190.69px;width:20.199999999999932px;height:8.829999999999984px;background:#fff;border-right:1px solid #D8D8D8;border-bottom:1px solid #E4E4E4"></div>
<div class="t" style="left:644.3000000000001px;top:192.84px;font-size:6.3px;color:#000">1,24</div>
<div style="position:absolute;left:662.9px;top:190.69px;width:20.200000000000045px;height:8.829999999999984px;background:#fff;border-right:1px solid #D8D8D8;border-bottom:1px solid #E4E4E4"></div>
<div class="t" style="left:664.5px;top:192.84px;font-size:6.3px;color:#000">0,82</div>
<div style="position:absolute;left:683.1px;top:190.69px;width:20.199999999999932px;height:8.829999999999984px;background:#fff;border-right:1px solid #D8D8D8;border-bottom:1px solid #E4E4E4"></div>
<div class="t" style="left:684.7px;top:192.84px;font-size:6.3px;color:#000">1,05</div>
<div style="position:absolute;left:703.3px;top:190.69px;width:20.100000000000023px;height:8.829999999999984px;background:#fff;border-right:1px solid #D8D8D8;border-bottom:1px solid #E4E4E4"></div>
<div class="t" style="left:704.9px;top:192.84px;font-size:6.3px;color:#000">0,86</div>
<div style="position:absolute;left:723.4px;top:190.69px;width:20.200000000000045px;height:8.829999999999984px;background:#fff;border-right:1px solid #D8D8D8;border-bottom:1px solid #E4E4E4"></div>
<div class="t" style="left:725.0px;top:192.84px;font-size:6.3px;color:#000">1,51</div>
<div style="position:absolute;left:743.6px;top:190.69px;width:20.199999999999932px;height:8.829999999999984px;background:#fff;border-right:1px solid #D8D8D8;border-bottom:1px solid #E4E4E4"></div>
<div class="t" style="left:745.2px;top:192.84px;font-size:6.3px;color:#000">1,22</div>
<div style="position:absolute;left:763.8px;top:190.69px;width:20.200000000000045px;height:8.829999999999984px;background:#fff;border-right:1px solid #D8D8D8;border-bottom:1px solid #E4E4E4"></div>
<div class="t" style="left:765.4px;top:192.84px;font-size:6.3px;color:#000">1,18</div>
<div style="position:absolute;left:784px;top:190.69px;width:20.299999999999955px;height:8.829999999999984px;background:#fff;border-right:1px solid #D8D8D8;border-bottom:1px solid #E4E4E4"></div>
<div class="t" style="left:785.6px;top:192.84px;font-size:6.3px;color:#000">0,95</div>
<div style="position:absolute;left:541.8px;top:199.51999999999998px;width:100.90000000000009px;height:8.830000000000013px;background:#ECE9D8;border-right:1px solid #6A6860;border-bottom:1px solid #8A887E;border-left:1px solid #fff;border-top:1px solid #fff"></div>
<div class="t" style="left:543.4px;top:201.67px;font-size:6.3px;color:#000">Время жевания (с)</div>
<div style="position:absolute;left:642.7px;top:199.51999999999998px;width:20.199999999999932px;height:8.830000000000013px;background:#fff;border-right:1px solid #D8D8D8;border-bottom:1px solid #E4E4E4"></div>
<div class="t" style="left:644.3000000000001px;top:201.67px;font-size:6.3px;color:#000">13,27</div>
<div style="position:absolute;left:662.9px;top:199.51999999999998px;width:20.200000000000045px;height:8.830000000000013px;background:#fff;border-right:1px solid #D8D8D8;border-bottom:1px solid #E4E4E4"></div>
<div class="t" style="left:664.5px;top:201.67px;font-size:6.3px;color:#000">14,98</div>
<div style="position:absolute;left:683.1px;top:199.51999999999998px;width:20.199999999999932px;height:8.830000000000013px;background:#fff;border-right:1px solid #D8D8D8;border-bottom:1px solid #E4E4E4"></div>
<div class="t" style="left:684.7px;top:201.67px;font-size:6.3px;color:#000">16,9</div>
<div style="position:absolute;left:703.3px;top:199.51999999999998px;width:20.100000000000023px;height:8.830000000000013px;background:#fff;border-right:1px solid #D8D8D8;border-bottom:1px solid #E4E4E4"></div>
<div class="t" style="left:704.9px;top:201.67px;font-size:6.3px;color:#000">17,81</div>
<div style="position:absolute;left:723.4px;top:199.51999999999998px;width:20.200000000000045px;height:8.830000000000013px;background:#fff;border-right:1px solid #D8D8D8;border-bottom:1px solid #E4E4E4"></div>
<div class="t" style="left:725.0px;top:201.67px;font-size:6.3px;color:#000">0,89</div>
<div style="position:absolute;left:743.6px;top:199.51999999999998px;width:20.199999999999932px;height:8.830000000000013px;background:#fff;border-right:1px solid #D8D8D8;border-bottom:1px solid #E4E4E4"></div>
<div class="t" style="left:745.2px;top:201.67px;font-size:6.3px;color:#000">0,95</div>
<div style="position:absolute;left:763.8px;top:199.51999999999998px;width:20.200000000000045px;height:8.830000000000013px;background:#fff;border-right:1px solid #D8D8D8;border-bottom:1px solid #E4E4E4"></div>
<div class="t" style="left:765.4px;top:201.67px;font-size:6.3px;color:#000">0,79</div>
<div style="position:absolute;left:784px;top:199.51999999999998px;width:20.299999999999955px;height:8.830000000000013px;background:#fff;border-right:1px solid #D8D8D8;border-bottom:1px solid #E4E4E4"></div>
<div class="t" style="left:785.6px;top:201.67px;font-size:6.3px;color:#000">0,84</div>
<div style="position:absolute;left:541.8px;top:208.35px;width:100.90000000000009px;height:8.830000000000013px;background:#ECE9D8;border-right:1px solid #6A6860;border-bottom:1px solid #8A887E;border-left:1px solid #fff;border-top:1px solid #fff"></div>
<div class="t" style="left:543.4px;top:210.50px;font-size:6.3px;color:#000">Время покоя (с)</div>
<div style="position:absolute;left:642.7px;top:208.35px;width:20.199999999999932px;height:8.830000000000013px;background:#fff;border-right:1px solid #D8D8D8;border-bottom:1px solid #E4E4E4"></div>
<div class="t" style="left:644.3000000000001px;top:210.50px;font-size:6.3px;color:#000">15,06</div>
<div style="position:absolute;left:662.9px;top:208.35px;width:20.200000000000045px;height:8.830000000000013px;background:#fff;border-right:1px solid #D8D8D8;border-bottom:1px solid #E4E4E4"></div>
<div class="t" style="left:664.5px;top:210.50px;font-size:6.3px;color:#000">13,27</div>
<div style="position:absolute;left:683.1px;top:208.35px;width:20.199999999999932px;height:8.830000000000013px;background:#fff;border-right:1px solid #D8D8D8;border-bottom:1px solid #E4E4E4"></div>
<div class="t" style="left:684.7px;top:210.50px;font-size:6.3px;color:#000">11,4</div>
<div style="position:absolute;left:703.3px;top:208.35px;width:20.100000000000023px;height:8.830000000000013px;background:#fff;border-right:1px solid #D8D8D8;border-bottom:1px solid #E4E4E4"></div>
<div class="t" style="left:704.9px;top:210.50px;font-size:6.3px;color:#000">15,03</div>
<div style="position:absolute;left:723.4px;top:208.35px;width:20.200000000000045px;height:8.830000000000013px;background:#fff;border-right:1px solid #D8D8D8;border-bottom:1px solid #E4E4E4"></div>
<div class="t" style="left:725.0px;top:210.50px;font-size:6.3px;color:#000">1,13</div>
<div style="position:absolute;left:743.6px;top:208.35px;width:20.199999999999932px;height:8.830000000000013px;background:#fff;border-right:1px solid #D8D8D8;border-bottom:1px solid #E4E4E4"></div>
<div class="t" style="left:745.2px;top:210.50px;font-size:6.3px;color:#000">0,76</div>
<div style="position:absolute;left:763.8px;top:208.35px;width:20.200000000000045px;height:8.830000000000013px;background:#fff;border-right:1px solid #D8D8D8;border-bottom:1px solid #E4E4E4"></div>
<div class="t" style="left:765.4px;top:210.50px;font-size:6.3px;color:#000">1,32</div>
<div style="position:absolute;left:784px;top:208.35px;width:20.299999999999955px;height:8.830000000000013px;background:#fff;border-right:1px solid #D8D8D8;border-bottom:1px solid #E4E4E4"></div>
<div class="t" style="left:785.6px;top:210.50px;font-size:6.3px;color:#000">0,88</div>
<div style="position:absolute;left:541.8px;top:217.18px;width:100.90000000000009px;height:8.829999999999984px;background:#ECE9D8;border-right:1px solid #6A6860;border-bottom:1px solid #8A887E;border-left:1px solid #fff;border-top:1px solid #fff"></div>
<div class="t" style="left:543.4px;top:219.33px;font-size:6.3px;color:#000">Время жевания/покоя</div>
<div style="position:absolute;left:642.7px;top:217.18px;width:20.199999999999932px;height:8.829999999999984px;background:#fff;border-right:1px solid #D8D8D8;border-bottom:1px solid #E4E4E4"></div>
<div class="t" style="left:644.3000000000001px;top:219.33px;font-size:6.3px;color:#000">0,88</div>
<div style="position:absolute;left:662.9px;top:217.18px;width:20.200000000000045px;height:8.829999999999984px;background:#fff;border-right:1px solid #D8D8D8;border-bottom:1px solid #E4E4E4"></div>
<div class="t" style="left:664.5px;top:219.33px;font-size:6.3px;color:#000">1,13</div>
<div style="position:absolute;left:683.1px;top:217.18px;width:20.199999999999932px;height:8.829999999999984px;background:#fff;border-right:1px solid #D8D8D8;border-bottom:1px solid #E4E4E4"></div>
<div class="t" style="left:684.7px;top:219.33px;font-size:6.3px;color:#000">1,48</div>
<div style="position:absolute;left:703.3px;top:217.18px;width:20.100000000000023px;height:8.829999999999984px;background:#fff;border-right:1px solid #D8D8D8;border-bottom:1px solid #E4E4E4"></div>
<div class="t" style="left:704.9px;top:219.33px;font-size:6.3px;color:#000">1,18</div>
<div style="position:absolute;left:723.4px;top:217.18px;width:20.200000000000045px;height:8.829999999999984px;background:#fff;border-right:1px solid #D8D8D8;border-bottom:1px solid #E4E4E4"></div>
<div class="t" style="left:725.0px;top:219.33px;font-size:6.3px;color:#000">0,78</div>
<div style="position:absolute;left:743.6px;top:217.18px;width:20.199999999999932px;height:8.829999999999984px;background:#fff;border-right:1px solid #D8D8D8;border-bottom:1px solid #E4E4E4"></div>
<div class="t" style="left:745.2px;top:219.33px;font-size:6.3px;color:#000">1,25</div>
<div style="position:absolute;left:763.8px;top:217.18px;width:20.200000000000045px;height:8.829999999999984px;background:#fff;border-right:1px solid #D8D8D8;border-bottom:1px solid #E4E4E4"></div>
<div class="t" style="left:765.4px;top:219.33px;font-size:6.3px;color:#000">0,59</div>
<div style="position:absolute;left:784px;top:217.18px;width:20.299999999999955px;height:8.829999999999984px;background:#fff;border-right:1px solid #D8D8D8;border-bottom:1px solid #E4E4E4"></div>
<div class="t" style="left:785.6px;top:219.33px;font-size:6.3px;color:#000">0,95</div>
<div style="position:absolute;left:541.8px;top:226.01px;width:100.90000000000009px;height:8.829999999999984px;background:#ECE9D8;border-right:1px solid #6A6860;border-bottom:1px solid #8A887E;border-left:1px solid #fff;border-top:1px solid #fff"></div>
<div class="t" style="left:543.4px;top:228.16px;font-size:6.3px;color:#000">Время тестирования (с)</div>
<div style="position:absolute;left:642.7px;top:226.01px;width:20.199999999999932px;height:8.829999999999984px;background:#fff;border-right:1px solid #D8D8D8;border-bottom:1px solid #E4E4E4"></div>
<div class="t" style="left:644.3000000000001px;top:228.16px;font-size:6.3px;color:#000">28,32</div>
<div style="position:absolute;left:662.9px;top:226.01px;width:20.200000000000045px;height:8.829999999999984px;background:#fff;border-right:1px solid #D8D8D8;border-bottom:1px solid #E4E4E4"></div>
<div class="t" style="left:664.5px;top:228.16px;font-size:6.3px;color:#000">28,25</div>
<div style="position:absolute;left:683.1px;top:226.01px;width:20.199999999999932px;height:8.829999999999984px;background:#fff;border-right:1px solid #D8D8D8;border-bottom:1px solid #E4E4E4"></div>
<div class="t" style="left:684.7px;top:228.16px;font-size:6.3px;color:#000">28,3</div>
<div style="position:absolute;left:703.3px;top:226.01px;width:20.100000000000023px;height:8.829999999999984px;background:#fff;border-right:1px solid #D8D8D8;border-bottom:1px solid #E4E4E4"></div>
<div class="t" style="left:704.9px;top:228.16px;font-size:6.3px;color:#000">32,84</div>
<div style="position:absolute;left:723.4px;top:226.01px;width:20.200000000000045px;height:8.829999999999984px;background:#fff;border-right:1px solid #D8D8D8;border-bottom:1px solid #E4E4E4"></div>
<div class="t" style="left:725.0px;top:228.16px;font-size:6.3px;color:#000">1</div>
<div style="position:absolute;left:743.6px;top:226.01px;width:20.199999999999932px;height:8.829999999999984px;background:#fff;border-right:1px solid #D8D8D8;border-bottom:1px solid #E4E4E4"></div>
<div class="t" style="left:745.2px;top:228.16px;font-size:6.3px;color:#000">0,86</div>
<div style="position:absolute;left:763.8px;top:226.01px;width:20.200000000000045px;height:8.829999999999984px;background:#fff;border-right:1px solid #D8D8D8;border-bottom:1px solid #E4E4E4"></div>
<div class="t" style="left:765.4px;top:228.16px;font-size:6.3px;color:#000">1</div>
<div style="position:absolute;left:784px;top:226.01px;width:20.299999999999955px;height:8.829999999999984px;background:#fff;border-right:1px solid #D8D8D8;border-bottom:1px solid #E4E4E4"></div>
<div class="t" style="left:785.6px;top:228.16px;font-size:6.3px;color:#000">0,86</div>
<div style="position:absolute;left:541.8px;top:234.83999999999997px;width:100.90000000000009px;height:8.830000000000013px;background:#ECE9D8;border-right:1px solid #6A6860;border-bottom:1px solid #8A887E;border-left:1px solid #fff;border-top:1px solid #fff"></div>
<div class="t" style="left:543.4px;top:236.99px;font-size:6.3px;color:#000">Кол-во жеваний</div>
<div style="position:absolute;left:642.7px;top:234.83999999999997px;width:20.199999999999932px;height:8.830000000000013px;background:#fff;border-right:1px solid #D8D8D8;border-bottom:1px solid #E4E4E4"></div>
<div class="t" style="left:644.3000000000001px;top:236.99px;font-size:6.3px;color:#000">38</div>
<div style="position:absolute;left:662.9px;top:234.83999999999997px;width:20.200000000000045px;height:8.830000000000013px;background:#fff;border-right:1px solid #D8D8D8;border-bottom:1px solid #E4E4E4"></div>
<div class="t" style="left:664.5px;top:236.99px;font-size:6.3px;color:#000">40</div>
<div style="position:absolute;left:683.1px;top:234.83999999999997px;width:20.199999999999932px;height:8.830000000000013px;background:#fff;border-right:1px solid #D8D8D8;border-bottom:1px solid #E4E4E4"></div>
<div class="t" style="left:684.7px;top:236.99px;font-size:6.3px;color:#000">38</div>
<div style="position:absolute;left:703.3px;top:234.83999999999997px;width:20.100000000000023px;height:8.830000000000013px;background:#fff;border-right:1px solid #D8D8D8;border-bottom:1px solid #E4E4E4"></div>
<div class="t" style="left:704.9px;top:236.99px;font-size:6.3px;color:#000">40</div>
<div style="position:absolute;left:723.4px;top:234.83999999999997px;width:20.200000000000045px;height:8.830000000000013px;background:#fff;border-right:1px solid #D8D8D8;border-bottom:1px solid #E4E4E4"></div>
<div class="t" style="left:725.0px;top:236.99px;font-size:6.3px;color:#000">0,95</div>
<div style="position:absolute;left:743.6px;top:234.83999999999997px;width:20.199999999999932px;height:8.830000000000013px;background:#fff;border-right:1px solid #D8D8D8;border-bottom:1px solid #E4E4E4"></div>
<div class="t" style="left:745.2px;top:236.99px;font-size:6.3px;color:#000">0,95</div>
<div style="position:absolute;left:763.8px;top:234.83999999999997px;width:20.200000000000045px;height:8.830000000000013px;background:#fff;border-right:1px solid #D8D8D8;border-bottom:1px solid #E4E4E4"></div>
<div class="t" style="left:765.4px;top:236.99px;font-size:6.3px;color:#000">1</div>
<div style="position:absolute;left:784px;top:234.83999999999997px;width:20.299999999999955px;height:8.830000000000013px;background:#fff;border-right:1px solid #D8D8D8;border-bottom:1px solid #E4E4E4"></div>
<div class="t" style="left:785.6px;top:236.99px;font-size:6.3px;color:#000">1</div>
<svg style="position:absolute;left:0;top:0" width="900" height="479"><line x1="578" y1="427.8" x2="800.8" y2="427.8" stroke="#808080" stroke-width="0.8" stroke-dasharray="1.5,2.5"/><line x1="578" y1="414.5" x2="800.8" y2="414.5" stroke="#808080" stroke-width="0.8" stroke-dasharray="1.5,2.5"/><line x1="578" y1="401.3" x2="800.8" y2="401.3" stroke="#808080" stroke-width="0.8" stroke-dasharray="1.5,2.5"/><line x1="578" y1="388.0" x2="800.8" y2="388.0" stroke="#808080" stroke-width="0.8" stroke-dasharray="1.5,2.5"/><line x1="578" y1="374.8" x2="800.8" y2="374.8" stroke="#808080" stroke-width="0.8" stroke-dasharray="1.5,2.5"/><line x1="578" y1="361.5" x2="800.8" y2="361.5" stroke="#808080" stroke-width="0.8" stroke-dasharray="1.5,2.5"/><line x1="578" y1="348.3" x2="800.8" y2="348.3" stroke="#808080" stroke-width="0.8" stroke-dasharray="1.5,2.5"/><line x1="600" y1="348.3" x2="600" y2="441" stroke="#808080" stroke-width="0.8" stroke-dasharray="1.5,2.5"/><line x1="645.3" y1="348.3" x2="645.3" y2="441" stroke="#808080" stroke-width="0.8" stroke-dasharray="1.5,2.5"/><line x1="689.5" y1="348.3" x2="689.5" y2="441" stroke="#808080" stroke-width="0.8" stroke-dasharray="1.5,2.5"/><line x1="734.7" y1="348.3" x2="734.7" y2="441" stroke="#808080" stroke-width="0.8" stroke-dasharray="1.5,2.5"/><line x1="778.3" y1="348.3" x2="778.3" y2="441" stroke="#808080" stroke-width="0.8" stroke-dasharray="1.5,2.5"/><rect x="599.4" y="348.3" width="45.9" height="92.7" fill="#FF0000"/><rect x="645.3" y="385.4" width="43.0" height="55.6" fill="#0000FF"/><rect x="688.3" y="373.5" width="46.9" height="67.5" fill="#FF0000"/><rect x="735.2" y="389.1" width="43.1" height="51.9" fill="#0000FF"/><line x1="645.3" y1="385.4" x2="688.3" y2="385.4" stroke="#C00040" stroke-width="1"/><line x1="735.2" y1="389.1" x2="778.3" y2="389.1" stroke="#C00040" stroke-width="1"/><line x1="778.3" y1="389.1" x2="778.3" y2="441" stroke="#FF0000" stroke-width="1.2"/><rect x="578" y="348.3" width="222.79999999999995" height="92.69999999999999" fill="none" stroke="#202020" stroke-width="0.8" stroke-dasharray="2,1"/><line x1="578" y1="348.3" x2="578" y2="441" stroke="#000" stroke-width="1.2"/><line x1="800.8" y1="348.3" x2="800.8" y2="441" stroke="#202020" stroke-width="1"/></svg>
<div class="t" style="right:325.20000000000005px;top:438.23px;font-size:6.5px;color:#202020">0</div>
<div class="t" style="right:325.20000000000005px;top:424.98px;font-size:6.5px;color:#202020">50</div>
<div class="t" style="right:325.20000000000005px;top:411.74px;font-size:6.5px;color:#202020">100</div>
<div class="t" style="right:325.20000000000005px;top:398.50px;font-size:6.5px;color:#202020">150</div>
<div class="t" style="right:325.20000000000005px;top:385.25px;font-size:6.5px;color:#202020">200</div>
<div class="t" style="right:325.20000000000005px;top:372.01px;font-size:6.5px;color:#202020">250</div>
<div class="t" style="right:325.20000000000005px;top:358.77px;font-size:6.5px;color:#202020">300</div>
<div class="t" style="right:325.20000000000005px;top:345.53px;font-size:6.5px;color:#202020">350</div>
<div class="t" style="left:620.2px;top:445.19px;font-size:6.2px;color:#202020">1</div>
<div class="t" style="left:665.2px;top:445.19px;font-size:6.2px;color:#202020">2</div>
<div class="t" style="left:709.6px;top:445.19px;font-size:6.2px;color:#202020">3</div>
<div class="t" style="left:753.4000000000001px;top:445.19px;font-size:6.2px;color:#202020">4</div>
<div class="t" style="left:668.9px;top:451.70px;font-size:6.0px;color:#202020">Номер канала</div>
<div class="t" style="left:559.2px;top:394.7px;font-size:6.2px;color:#202020;transform:translate(-50%,-50%) rotate(-90deg) scaleX(0.83)">Ср. ампл. жевания (мкВ)</div>
<div style="position:absolute;left:764.5px;top:442px;width:22px;height:18.2px;background:#E4E0D0;border:1px solid #C8C4B4;border-radius:1px"></div>
<div style="position:absolute;left:766px;top:443.5px;width:18.8px;height:14.8px;background:linear-gradient(#A8CCEC,#6FA4D4 60%,#5C90C4);border:1px solid #F0F6FF"></div>
<svg style="position:absolute;left:769px;top:445px" width="13" height="11"><path d="M4.3,0.8 H8.7 V4.8 H11.5 L6.5,9.8 L1.5,4.8 H4.3 Z" fill="#D8ECFA" stroke="#9CC4E4" stroke-width="0.5"/></svg>
<div style="position:absolute;left:90px;top:461px;width:718px;height:9px;background:linear-gradient(#F2F0E8,#F6F4EE 60%,#E8E5D8)"></div>
<div style="position:absolute;left:90px;top:461px;width:9.2px;height:8.6px;background:#F0EEE4;border:1px solid #fff;border-right-color:#A8A498;border-bottom-color:#A8A498"></div>
<svg style="position:absolute;left:92px;top:462.5px" width="5" height="6"><polygon points="0.5,3 4,0.5 4,5.5" fill="#000"/></svg>
<div style="position:absolute;left:283px;top:462.6px;width:9.2px;height:7.1px;background:#ECE9D8;border:1px solid #fff;border-right-color:#808078;border-bottom-color:#808078"></div>
<div style="position:absolute;left:798.8px;top:461px;width:9.2px;height:8.6px;background:#F0EEE4;border:1px solid #fff;border-right-color:#A8A498;border-bottom-color:#A8A498"></div>
<svg style="position:absolute;left:802px;top:462.5px" width="5" height="6"><polygon points="4.5,3 1,0.5 1,5.5" fill="#000"/></svg>
<div style="position:absolute;left:90px;top:470px;width:718px;height:9px;background:#ECE9D8;border-top:1px solid #D4D0C0"></div>
<div style="position:absolute;left:258px;top:471px;width:1px;height:8px;background:#C8C4B4"></div>
<div style="position:absolute;left:259px;top:471px;width:1px;height:8px;background:#fff"></div>
<div class="t" style="left:90.8px;top:471.94px;font-size:7.2px;font-weight:bold;font-style:italic;font-family:'Liberation Serif', serif">Пациент: Амжилитов Р.Р.</div></body></html>
